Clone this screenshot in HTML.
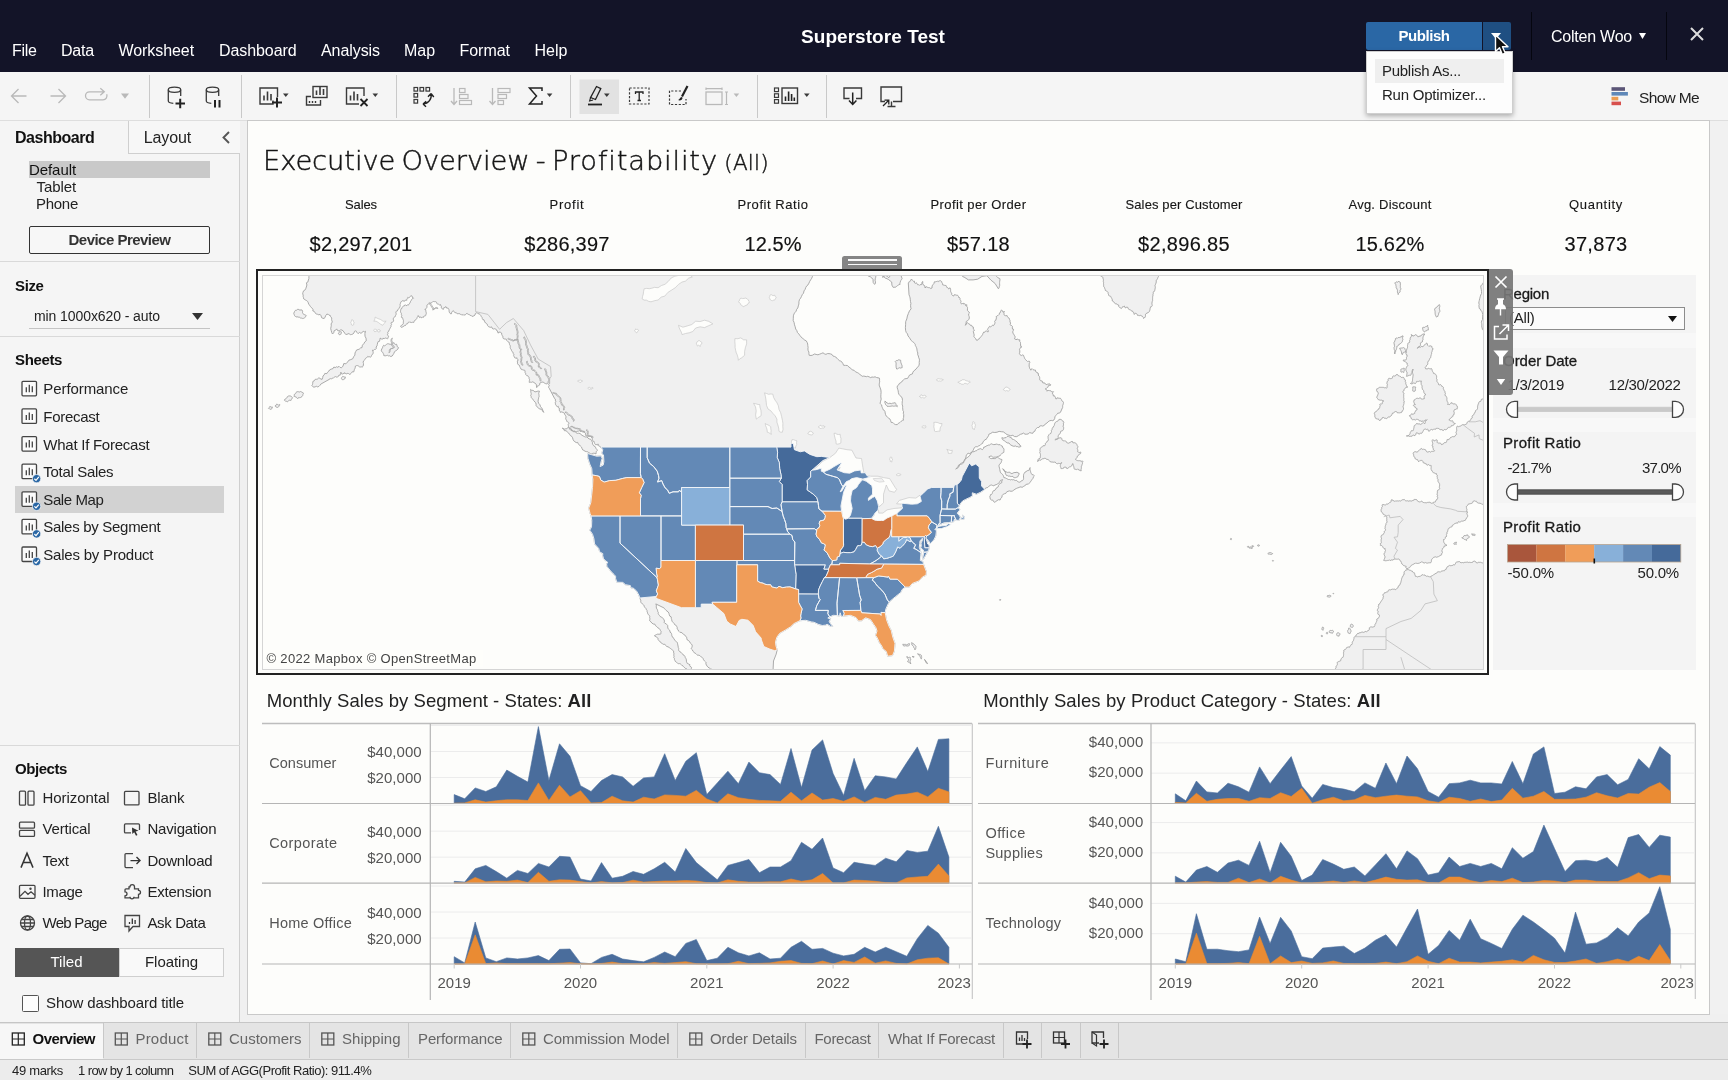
<!DOCTYPE html>
<html lang="en"><head><meta charset="utf-8"><title>Superstore Test</title>
<style>
html,body{margin:0;padding:0;}
body{width:1728px;height:1080px;overflow:hidden;position:relative;background:#f5f5f5;font-family:"Liberation Sans", Arial, sans-serif;color:#222;}
div{box-sizing:border-box;}
#app{position:absolute;left:0;top:0;width:1728px;height:1080px;overflow:hidden;will-change:transform;}
</style></head><body>
<div id="app">
<div style="position:absolute;left:0px;top:0px;width:1728px;height:72px;box-sizing:border-box;background:#131428;"></div>
<div style="position:absolute;top:39.5px;height:21px;line-height:21px;font-size:16px;white-space:nowrap;color:#fff;letter-spacing:-0.320px;left:12.0px;">File</div>
<div style="position:absolute;top:39.5px;height:21px;line-height:21px;font-size:16px;white-space:nowrap;color:#fff;letter-spacing:-0.199px;left:61.0px;">Data</div>
<div style="position:absolute;top:39.5px;height:21px;line-height:21px;font-size:16px;white-space:nowrap;color:#fff;letter-spacing:-0.076px;left:118.5px;">Worksheet</div>
<div style="position:absolute;top:39.5px;height:21px;line-height:21px;font-size:16px;white-space:nowrap;color:#fff;letter-spacing:-0.086px;left:219.0px;">Dashboard</div>
<div style="position:absolute;top:39.5px;height:21px;line-height:21px;font-size:16px;white-space:nowrap;color:#fff;letter-spacing:-0.072px;left:321.0px;">Analysis</div>
<div style="position:absolute;top:39.5px;height:21px;line-height:21px;font-size:16px;white-space:nowrap;color:#fff;letter-spacing:-0.042px;left:404.0px;">Map</div>
<div style="position:absolute;top:39.5px;height:21px;line-height:21px;font-size:16px;white-space:nowrap;color:#fff;letter-spacing:-0.029px;left:459.5px;">Format</div>
<div style="position:absolute;top:39.5px;height:21px;line-height:21px;font-size:16px;white-space:nowrap;color:#fff;letter-spacing:0.023px;left:534.5px;">Help</div>
<div style="position:absolute;top:23.5px;height:25px;line-height:25px;font-size:19px;white-space:nowrap;color:#fff;letter-spacing:0.050px;font-weight:700;left:801.0px;">Superstore Test</div>
<div style="position:absolute;left:1366px;top:22px;width:116px;height:28px;box-sizing:border-box;background:#2a67a5;border-radius:2px 0 0 2px;"></div>
<div style="position:absolute;top:26.0px;height:20px;line-height:20px;font-size:15px;white-space:nowrap;color:#fff;letter-spacing:-0.453px;font-weight:700;left:1424.0px;width:400px;margin-left:-200px;text-align:center;">Publish</div>
<div style="position:absolute;left:1483px;top:22px;width:28px;height:28px;box-sizing:border-box;background:#1f4f82;border-radius:0 2px 2px 0;"></div>
<svg style="position:absolute;left:1491px;top:33px;overflow:visible;" width="10" height="6" viewBox="0 0 10 6"><path d="M0 0H10L5 6Z" fill="#fff"/></svg>
<div style="position:absolute;left:1531px;top:12px;width:1px;height:48px;box-sizing:border-box;background:#05060f;"></div>
<div style="position:absolute;left:1666px;top:12px;width:1px;height:48px;box-sizing:border-box;background:#05060f;"></div>
<div style="position:absolute;top:25.5px;height:21px;line-height:21px;font-size:16px;white-space:nowrap;color:#fff;letter-spacing:-0.230px;left:1551.0px;">Colten Woo</div>
<svg style="position:absolute;left:1639px;top:33px;overflow:visible;" width="7" height="6" viewBox="0 0 7 6"><path d="M0 0H7L3.5 6Z" fill="#fff"/></svg>
<svg style="position:absolute;left:1690px;top:27px;overflow:visible;" width="14" height="14" viewBox="0 0 14 14"><path d="M1 1L13 13M13 1L1 13" stroke="#ddd" stroke-width="2" fill="none"/></svg>
<div style="position:absolute;left:0px;top:72px;width:1728px;height:49px;box-sizing:border-box;background:#f5f5f5;border-bottom:1px solid #dedede;"></div>
<div style="position:absolute;left:149px;top:75px;width:1px;height:43px;box-sizing:border-box;background:#c9c9c9;"></div>
<div style="position:absolute;left:241px;top:75px;width:1px;height:43px;box-sizing:border-box;background:#c9c9c9;"></div>
<div style="position:absolute;left:395.5px;top:75px;width:1px;height:43px;box-sizing:border-box;background:#c9c9c9;"></div>
<div style="position:absolute;left:570px;top:75px;width:1px;height:43px;box-sizing:border-box;background:#c9c9c9;"></div>
<div style="position:absolute;left:757px;top:75px;width:1px;height:43px;box-sizing:border-box;background:#c9c9c9;"></div>
<div style="position:absolute;left:826px;top:75px;width:1px;height:43px;box-sizing:border-box;background:#c9c9c9;"></div>
<svg style="position:absolute;left:0px;top:0px;overflow:visible;" width="1728" height="121" viewBox="0 0 1728 121"><path d="M26.5 96H11.5M18.5 89L11.5 96L18.5 103" stroke="#b9b9b9" stroke-width="1.3" fill="none"/><path d="M50.5 96H65.5M58.5 89L65.5 96L58.5 103" stroke="#b9b9b9" stroke-width="1.3" fill="none"/><path d="M104 91.800H89.500a4 4 0 0 0 0 8H103a4 4 0 0 0 3.700-5.500M100.300 88.300L104.300 91.800L100.300 95.300" stroke="#b9b9b9" stroke-width="1.3" fill="none"/><path d="M121 93.5H129L125 98.8Z" fill="#b9b9b9"/><ellipse cx="174.5" cy="89.8" rx="6.2" ry="2.6" fill="none" stroke="#3a3a3a" stroke-width="1.3"/><path d="M168.3 89.8V101a6.2 2.6 0 0 0 5 2.4" fill="none" stroke="#3a3a3a" stroke-width="1.3"/><path d="M180.7 89.8V96" fill="none" stroke="#3a3a3a" stroke-width="1.3"/><path d="M175.5 103.5H185M180.2 98.8V108.2" stroke="#222" stroke-width="2" fill="none"/><ellipse cx="212.5" cy="89.8" rx="6.2" ry="2.6" fill="none" stroke="#3a3a3a" stroke-width="1.3"/><path d="M206.3 89.8V101a6.2 2.6 0 0 0 5 2.4" fill="none" stroke="#3a3a3a" stroke-width="1.3"/><path d="M218.7 89.8V96" fill="none" stroke="#3a3a3a" stroke-width="1.3"/><path d="M215 100V107.5M219.5 100V107.5" stroke="#222" stroke-width="2" fill="none"/><path d="M273 100.5V104H260V88H277.5V97" fill="none" stroke="#3a3a3a" stroke-width="1.4"/><path d="M264 95.5V100.5M267.5 91.5V100.5M271 94V100.5" stroke="#3a3a3a" stroke-width="1.6" fill="none"/><path d="M272 102.5H282M277 97.5V107.5" stroke="#222" stroke-width="2" fill="none"/><path d="M283 93.5H288.6L285.8 97Z" fill="#3a3a3a"/><rect x="313" y="86.5" width="14" height="11" fill="#f5f5f5" stroke="#3a3a3a" stroke-width="1.4"/><path d="M316.5 90.5V95M320 86.5V95M323.5 89V95" stroke="#3a3a3a" stroke-width="1.6" fill="none"/><path d="M311 96.5H306.5V105H320.5V100" fill="none" stroke="#3a3a3a" stroke-width="1.4"/><path d="M309.5 101V103M312.5 101V103M315.5 101V103" stroke="#3a3a3a" stroke-width="1.4"/><path d="M359 104H346.5V88H364V96" fill="none" stroke="#3a3a3a" stroke-width="1.4"/><path d="M350.5 95.5V100.5M354 91.5V100.5M357.5 94V100.5" stroke="#3a3a3a" stroke-width="1.6" fill="none"/><path d="M360.5 99L367.5 106M367.5 99L360.5 106" stroke="#222" stroke-width="1.8" fill="none"/><path d="M372.5 93.5H378.1L375.3 97Z" fill="#3a3a3a"/><rect x="414" y="87.5" width="3.6" height="3.6" fill="none" stroke="#3a3a3a" stroke-width="1.2"/><rect x="420" y="87.5" width="3.6" height="3.6" fill="none" stroke="#3a3a3a" stroke-width="1.2"/><rect x="426" y="87.5" width="3.6" height="3.6" fill="none" stroke="#3a3a3a" stroke-width="1.2"/><rect x="414" y="93.5" width="3.6" height="3.6" fill="none" stroke="#3a3a3a" stroke-width="1.2"/><rect x="414" y="99.5" width="3.6" height="3.6" fill="none" stroke="#3a3a3a" stroke-width="1.2"/><path d="M431 93.5a8.5 8.5 0 0 1-8 10.5M431 93.5L428 96.8M431 93.5L433.8 97M423 104L426.2 101.3M423 104L426 106.8" stroke="#222" stroke-width="1.4" fill="none"/><path d="M454 88V104.5M451 101L454 104.5L457 101" stroke="#b9b9b9" stroke-width="1.3" fill="none"/><rect x="459.5" y="88.5" width="5.5" height="4" fill="none" stroke="#b9b9b9" stroke-width="1.2"/><rect x="459.5" y="94.5" width="8.5" height="4" fill="none" stroke="#b9b9b9" stroke-width="1.2"/><rect x="459.5" y="100.5" width="12" height="4" fill="none" stroke="#b9b9b9" stroke-width="1.2"/><path d="M492.5 88V104.5M489.5 101L492.5 104.5L495.5 101" stroke="#b9b9b9" stroke-width="1.3" fill="none"/><rect x="498" y="88.5" width="12" height="4" fill="none" stroke="#b9b9b9" stroke-width="1.2"/><rect x="498" y="94.5" width="8.5" height="4" fill="none" stroke="#b9b9b9" stroke-width="1.2"/><rect x="498" y="100.5" width="5.5" height="4" fill="none" stroke="#b9b9b9" stroke-width="1.2"/><path d="M542 91V88H529.5L536.5 96L529.5 104H542V101" stroke="#222" stroke-width="1.5" fill="none"/><path d="M546.8 93.5H552.4L549.6 97Z" fill="#3a3a3a"/><rect x="579.5" y="79.5" width="39.5" height="34.5" fill="#e2e2e2"/><path d="M596.5 86.5L600.8 88.6L595.5 99.5L590.6 97.5Z" fill="none" stroke="#222" stroke-width="1.3"/><path d="M590.6 97.5L589.6 101L593 100" stroke="#222" stroke-width="1.1" fill="none"/><path d="M588 104.5H602" stroke="#222" stroke-width="1.8"/><path d="M604 93.5H609.6L606.8 97Z" fill="#3a3a3a"/><rect x="629.5" y="88" width="19.5" height="16" fill="none" stroke="#3a3a3a" stroke-width="1.2" stroke-dasharray="2.2 1.6"/><path d="M635.5 94V92H643V94M639.2 92V100.5M637.5 100.5H641" stroke="#222" stroke-width="1.3" fill="none"/><path d="M681 91H669.5V104.5H686V99" fill="none" stroke="#3a3a3a" stroke-width="1.2" stroke-dasharray="2.2 1.6"/><path d="M687.5 86L682 96.5" stroke="#222" stroke-width="2.2"/><path d="M681.5 97C680 97.5 679.5 99.5 678 100C680 101 682.5 100 682.6 97.8Z" fill="#222"/><rect x="706" y="92" width="16" height="12.5" fill="none" stroke="#b9b9b9" stroke-width="1.3"/><path d="M706 87.5V90M722 87.5V90M706 88.7H722M725 92H728M725 104.5H728M726.5 92V104.5" stroke="#b9b9b9" stroke-width="1.2" fill="none"/><path d="M733.6 93.5H739.2L736.4 97Z" fill="#b9b9b9"/><rect x="774.5" y="88" width="4" height="3.6" fill="none" stroke="#3a3a3a" stroke-width="1.2"/><rect x="774.5" y="93.8" width="4" height="3.6" fill="none" stroke="#3a3a3a" stroke-width="1.2"/><rect x="774.5" y="99.6" width="4" height="3.6" fill="none" stroke="#3a3a3a" stroke-width="1.2"/><rect x="782" y="88" width="15.5" height="15.5" fill="none" stroke="#3a3a3a" stroke-width="1.4"/><path d="M785.5 101V96.5M788.6 101V91.5M791.6 101V94M794.3 101V97.5" stroke="#222" stroke-width="1.6"/><path d="M804 93.5H809.6L806.8 97Z" fill="#3a3a3a"/><path d="M849.5 98.5H844V88H861.5V98.5H856" fill="none" stroke="#3a3a3a" stroke-width="1.4"/><path d="M852.7 92.5V104M849 100.5L852.7 104.5L856.4 100.5" stroke="#222" stroke-width="1.5" fill="none"/><path d="M885 101.5H881V87H901.5V101.5H893M891.5 101.5V106M887.5 106.5H895.5" fill="none" stroke="#3a3a3a" stroke-width="1.4"/><path d="M883 106L888.5 100.5M884.5 100.2H888.8V104.5" stroke="#222" stroke-width="1.3" fill="none"/></svg>
<svg style="position:absolute;left:1611px;top:86px;overflow:visible;" width="18" height="20" viewBox="0 0 18 20"><rect x="0.500" y="1.200" width="13.500" height="3.600" fill="#5b5577"/><rect x="0.500" y="6" width="16.400" height="3.600" fill="#5f88b8"/><rect x="0.500" y="10.800" width="6.800" height="3.600" fill="#eb9c52"/><rect x="0.500" y="15.600" width="9.500" height="3.600" fill="#d8504d"/></svg>
<div style="position:absolute;top:87.5px;height:20px;line-height:20px;font-size:15.5px;white-space:nowrap;color:#222;letter-spacing:-0.659px;left:1639.0px;">Show Me</div>
<div style="position:absolute;left:0px;top:1022px;width:1728px;height:38px;box-sizing:border-box;background:#e4e4e4;border-top:1.5px solid #c6c6c6;border-bottom:1.5px solid #c9c9c9;"></div>
<div style="position:absolute;left:0px;top:1023.5px;width:103px;height:35px;box-sizing:border-box;background:#f7f7f7;"></div>
<div style="position:absolute;left:102.5px;top:1023px;width:1px;height:35px;box-sizing:border-box;background:#c8c8c8;"></div>
<div style="position:absolute;top:1029.3px;height:20px;line-height:20px;font-size:15px;white-space:nowrap;color:#111;letter-spacing:-0.526px;font-weight:700;left:32.5px;">Overview</div>
<div style="position:absolute;left:196px;top:1023px;width:1px;height:35px;box-sizing:border-box;background:#c8c8c8;"></div>
<div style="position:absolute;top:1029.3px;height:20px;line-height:20px;font-size:15px;white-space:nowrap;color:#666;letter-spacing:0.187px;left:135.5px;">Product</div>
<div style="position:absolute;left:309px;top:1023px;width:1px;height:35px;box-sizing:border-box;background:#c8c8c8;"></div>
<div style="position:absolute;top:1029.3px;height:20px;line-height:20px;font-size:15px;white-space:nowrap;color:#666;letter-spacing:-0.002px;left:229.0px;">Customers</div>
<div style="position:absolute;left:408px;top:1023px;width:1px;height:35px;box-sizing:border-box;background:#c8c8c8;"></div>
<div style="position:absolute;top:1029.3px;height:20px;line-height:20px;font-size:15px;white-space:nowrap;color:#666;letter-spacing:0.015px;left:342.0px;">Shipping</div>
<div style="position:absolute;left:510px;top:1023px;width:1px;height:35px;box-sizing:border-box;background:#c8c8c8;"></div>
<div style="position:absolute;top:1029.3px;height:20px;line-height:20px;font-size:15px;white-space:nowrap;color:#666;letter-spacing:-0.124px;left:418.0px;">Performance</div>
<div style="position:absolute;left:677px;top:1023px;width:1px;height:35px;box-sizing:border-box;background:#c8c8c8;"></div>
<div style="position:absolute;top:1029.3px;height:20px;line-height:20px;font-size:15px;white-space:nowrap;color:#666;letter-spacing:-0.065px;left:543.0px;">Commission Model</div>
<div style="position:absolute;left:804.5px;top:1023px;width:1px;height:35px;box-sizing:border-box;background:#c8c8c8;"></div>
<div style="position:absolute;top:1029.3px;height:20px;line-height:20px;font-size:15px;white-space:nowrap;color:#666;letter-spacing:-0.105px;left:710.0px;">Order Details</div>
<div style="position:absolute;left:878px;top:1023px;width:1px;height:35px;box-sizing:border-box;background:#c8c8c8;"></div>
<div style="position:absolute;top:1029.3px;height:20px;line-height:20px;font-size:15px;white-space:nowrap;color:#666;letter-spacing:-0.294px;left:814.5px;">Forecast</div>
<div style="position:absolute;left:1002.5px;top:1023px;width:1px;height:35px;box-sizing:border-box;background:#c8c8c8;"></div>
<div style="position:absolute;top:1029.3px;height:20px;line-height:20px;font-size:15px;white-space:nowrap;color:#666;letter-spacing:-0.189px;left:888.0px;">What If Forecast</div>
<div style="position:absolute;left:1040.5px;top:1023px;width:1px;height:35px;box-sizing:border-box;background:#c8c8c8;"></div>
<div style="position:absolute;left:1079.5px;top:1023px;width:1px;height:35px;box-sizing:border-box;background:#c8c8c8;"></div>
<div style="position:absolute;left:1117.5px;top:1023px;width:1px;height:35px;box-sizing:border-box;background:#c8c8c8;"></div>
<svg style="position:absolute;left:0px;top:0px;overflow:visible;pointer-events:none;" width="1728" height="1080" viewBox="0 0 1728 1080"><rect x="12.3" y="1033" width="12" height="12" fill="none" stroke="#222" stroke-width="1.3"/><path d="M18.3 1033V1045M12.3 1039H24.3" stroke="#222" stroke-width="1.2"/><rect x="115.3" y="1033" width="12" height="12" fill="none" stroke="#555" stroke-width="1.3"/><path d="M121.3 1033V1045M115.3 1039H127.3" stroke="#555" stroke-width="1.2"/><rect x="208.8" y="1033" width="12" height="12" fill="none" stroke="#555" stroke-width="1.3"/><path d="M214.8 1033V1045M208.8 1039H220.8" stroke="#555" stroke-width="1.2"/><rect x="321.8" y="1033" width="12" height="12" fill="none" stroke="#555" stroke-width="1.3"/><path d="M327.8 1033V1045M321.8 1039H333.8" stroke="#555" stroke-width="1.2"/><rect x="522.8" y="1033" width="12" height="12" fill="none" stroke="#555" stroke-width="1.3"/><path d="M528.8 1033V1045M522.8 1039H534.8" stroke="#555" stroke-width="1.2"/><rect x="689.8" y="1033" width="12" height="12" fill="none" stroke="#555" stroke-width="1.3"/><path d="M695.8 1033V1045M689.8 1039H701.8" stroke="#555" stroke-width="1.2"/><path d="M1024 1044H1016.5V1032H1027.5V1039" fill="none" stroke="#333" stroke-width="1.3"/><path d="M1019.5 1041V1037.5M1022 1041V1035M1024.5 1041V1038" stroke="#333" stroke-width="1.3"/><path d="M1022.5 1044H1031.5M1027 1039.5V1048.5" stroke="#222" stroke-width="1.8"/><rect x="1053.5" y="1032" width="11" height="11" fill="none" stroke="#333" stroke-width="1.3"/><path d="M1059 1032V1043M1053.5 1037.5H1064.5" stroke="#333" stroke-width="1.2"/><path d="M1061 1044H1070M1065.500 1039.5V1048.5" stroke="#222" stroke-width="1.8"/><path d="M1059.500 1041.5H1066.500V1046H1059.500Z" fill="#e6e6e6" opacity="0"/><path d="M1099 1043H1092V1032H1103.5V1038" fill="none" stroke="#333" stroke-width="1.3"/><path d="M1092 1032L1096.500 1035V1046L1092 1043" fill="none" stroke="#333" stroke-width="1.2"/><path d="M1099.500 1044H1108.500M1104 1039.5V1048.5" stroke="#222" stroke-width="1.8"/></svg>
<div style="position:absolute;left:0px;top:1060px;width:1728px;height:20px;box-sizing:border-box;background:#ececec;"></div>
<div style="position:absolute;top:1062.0px;height:17px;line-height:17px;font-size:13px;white-space:nowrap;color:#222;letter-spacing:-0.308px;left:12.0px;">49 marks</div>
<div style="position:absolute;top:1062.0px;height:17px;line-height:17px;font-size:13px;white-space:nowrap;color:#222;letter-spacing:-0.588px;left:78.0px;">1 row by 1 column</div>
<div style="position:absolute;top:1062.0px;height:17px;line-height:17px;font-size:13px;white-space:nowrap;color:#222;letter-spacing:-0.483px;left:188.3px;">SUM of AGG(Profit Ratio): 911.4%</div>
<div style="position:absolute;left:0px;top:121px;width:240px;height:901px;box-sizing:border-box;background:#f5f5f5;border-right:1px solid #cfcfcf;"></div>
<div style="position:absolute;left:240px;top:121px;width:7px;height:901px;box-sizing:border-box;background:#f0f0f0;"></div>
<div style="position:absolute;left:128px;top:121px;width:112px;height:33px;box-sizing:border-box;background:#f7f7f7;border-left:1px solid #cfcfcf;border-bottom:1px solid #cfcfcf;"></div>
<div style="position:absolute;top:127.0px;height:21px;line-height:21px;font-size:16px;white-space:nowrap;color:#111;letter-spacing:-0.474px;font-weight:700;left:15.0px;">Dashboard</div>
<div style="position:absolute;top:127.0px;height:21px;line-height:21px;font-size:16px;white-space:nowrap;color:#222;letter-spacing:-0.090px;left:143.7px;">Layout</div>
<svg style="position:absolute;left:222.3px;top:131px;overflow:visible;" width="8" height="13" viewBox="0 0 8 13"><path d="M7 1L1.500 6.500L7 12" stroke="#555" stroke-width="1.900" fill="none"/></svg>
<div style="position:absolute;left:29px;top:161px;width:181px;height:17px;box-sizing:border-box;background:#c9c9c9;"></div>
<div style="position:absolute;top:159.5px;height:20px;line-height:20px;font-size:15px;white-space:nowrap;color:#111;letter-spacing:-0.075px;left:29.0px;">Default</div>
<div style="position:absolute;top:177.0px;height:20px;line-height:20px;font-size:15px;white-space:nowrap;color:#222;letter-spacing:-0.088px;left:36.5px;">Tablet</div>
<div style="position:absolute;top:194.2px;height:20px;line-height:20px;font-size:15px;white-space:nowrap;color:#222;letter-spacing:-0.275px;left:36.0px;">Phone</div>
<div style="position:absolute;left:29px;top:225.5px;width:181px;height:28px;box-sizing:border-box;background:#f7f7f7;border:1px solid #333;border-radius:2px;"></div>
<div style="position:absolute;top:229.6px;height:20px;line-height:20px;font-size:15px;white-space:nowrap;color:#333;letter-spacing:-0.517px;font-weight:700;left:119.5px;width:400px;margin-left:-200px;text-align:center;">Device Preview</div>
<div style="position:absolute;left:0px;top:261px;width:240px;height:1px;box-sizing:border-box;background:#d9d9d9;"></div>
<div style="position:absolute;top:275.5px;height:20px;line-height:20px;font-size:15px;white-space:nowrap;color:#111;letter-spacing:-0.379px;font-weight:700;left:15.0px;">Size</div>
<div style="position:absolute;top:306.8px;height:18px;line-height:18px;font-size:14px;white-space:nowrap;color:#222;letter-spacing:-0.086px;left:34.0px;">min 1000x620 - auto</div>
<svg style="position:absolute;left:192px;top:312.5px;overflow:visible;" width="11" height="7" viewBox="0 0 11 7"><path d="M0 0H11L5.5 7Z" fill="#333"/></svg>
<div style="position:absolute;left:29px;top:328px;width:181px;height:1px;box-sizing:border-box;background:#c4c4c4;"></div>
<div style="position:absolute;left:0px;top:336px;width:240px;height:1px;box-sizing:border-box;background:#d9d9d9;"></div>
<div style="position:absolute;top:350.2px;height:20px;line-height:20px;font-size:15px;white-space:nowrap;color:#111;letter-spacing:-0.365px;font-weight:700;left:15.0px;">Sheets</div>
<div style="position:absolute;top:379.3px;height:20px;line-height:20px;font-size:15px;white-space:nowrap;color:#222;letter-spacing:-0.079px;left:43.3px;">Performance</div>
<div style="position:absolute;top:406.9px;height:20px;line-height:20px;font-size:15px;white-space:nowrap;color:#222;letter-spacing:-0.294px;left:43.3px;">Forecast</div>
<div style="position:absolute;top:434.5px;height:20px;line-height:20px;font-size:15px;white-space:nowrap;color:#222;letter-spacing:-0.252px;left:43.3px;">What If Forecast</div>
<div style="position:absolute;top:462.2px;height:20px;line-height:20px;font-size:15px;white-space:nowrap;color:#222;letter-spacing:-0.307px;left:43.3px;">Total Sales</div>
<div style="position:absolute;left:14.5px;top:486.48px;width:209.5px;height:27px;box-sizing:border-box;background:#d2d2d2;"></div>
<div style="position:absolute;top:489.8px;height:20px;line-height:20px;font-size:15px;white-space:nowrap;color:#222;letter-spacing:-0.421px;left:43.3px;">Sale Map</div>
<div style="position:absolute;top:517.4px;height:20px;line-height:20px;font-size:15px;white-space:nowrap;color:#222;letter-spacing:-0.296px;left:43.3px;">Sales by Segment</div>
<div style="position:absolute;top:545.0px;height:20px;line-height:20px;font-size:15px;white-space:nowrap;color:#222;letter-spacing:-0.212px;left:43.3px;">Sales by Product</div>
<svg style="position:absolute;left:0px;top:0px;overflow:visible;" width="240" height="1022" viewBox="0 0 240 1022"><rect x="22" y="381.3" width="14.5" height="14.5" rx="1" fill="#fbfbfb" stroke="#444" stroke-width="1.3"/><path d="M26.3 387.3V392.3M29.3 384.8V392.3M32.3 386.3V392.3" stroke="#444" stroke-width="1.3"/><rect x="22" y="408.92" width="14.5" height="14.5" rx="1" fill="#fbfbfb" stroke="#444" stroke-width="1.3"/><path d="M26.3 414.92V419.92M29.3 412.42V419.92M32.3 413.92V419.92" stroke="#444" stroke-width="1.3"/><rect x="22" y="436.54" width="14.5" height="14.5" rx="1" fill="#fbfbfb" stroke="#444" stroke-width="1.3"/><path d="M26.3 442.54V447.54M29.3 440.04V447.54M32.3 441.54V447.54" stroke="#444" stroke-width="1.3"/><rect x="22" y="464.16" width="14.5" height="14.5" rx="1" fill="#fbfbfb" stroke="#444" stroke-width="1.3"/><path d="M26.3 470.16V475.16M29.3 467.66V475.16M32.3 469.16V475.16" stroke="#444" stroke-width="1.3"/><circle cx="36.6" cy="478.66" r="4.2" fill="#2a67a5" stroke="#f5f5f5" stroke-width="0.8"/><path d="M34.4 478.76L36 480.36L38.8 476.96" stroke="#fff" stroke-width="1.2" fill="none"/><rect x="22" y="491.78" width="14.5" height="14.5" rx="1" fill="#fbfbfb" stroke="#444" stroke-width="1.3"/><path d="M26.3 497.78V502.78M29.3 495.28V502.78M32.3 496.78V502.78" stroke="#444" stroke-width="1.3"/><circle cx="36.6" cy="506.28" r="4.2" fill="#2a67a5" stroke="#f5f5f5" stroke-width="0.8"/><path d="M34.4 506.38L36 507.98L38.8 504.58" stroke="#fff" stroke-width="1.2" fill="none"/><rect x="22" y="519.4" width="14.5" height="14.5" rx="1" fill="#fbfbfb" stroke="#444" stroke-width="1.3"/><path d="M26.3 525.4V530.4M29.3 522.9V530.4M32.3 524.4V530.4" stroke="#444" stroke-width="1.3"/><circle cx="36.6" cy="533.9" r="4.2" fill="#2a67a5" stroke="#f5f5f5" stroke-width="0.8"/><path d="M34.4 534L36 535.6L38.8 532.2" stroke="#fff" stroke-width="1.2" fill="none"/><rect x="22" y="547.02" width="14.5" height="14.5" rx="1" fill="#fbfbfb" stroke="#444" stroke-width="1.3"/><path d="M26.3 553.02V558.02M29.3 550.52V558.02M32.3 552.02V558.02" stroke="#444" stroke-width="1.3"/><circle cx="36.6" cy="561.52" r="4.2" fill="#2a67a5" stroke="#f5f5f5" stroke-width="0.8"/><path d="M34.4 561.62L36 563.22L38.8 559.82" stroke="#fff" stroke-width="1.2" fill="none"/></svg>
<div style="position:absolute;left:0px;top:744.5px;width:240px;height:1px;box-sizing:border-box;background:#d9d9d9;"></div>
<div style="position:absolute;top:759.0px;height:20px;line-height:20px;font-size:15px;white-space:nowrap;color:#111;letter-spacing:-0.431px;font-weight:700;left:15.0px;">Objects</div>
<div style="position:absolute;top:788.2px;height:20px;line-height:20px;font-size:15px;white-space:nowrap;color:#222;letter-spacing:-0.053px;left:42.5px;">Horizontal</div>
<div style="position:absolute;top:819.4px;height:20px;line-height:20px;font-size:15px;white-space:nowrap;color:#222;letter-spacing:-0.149px;left:42.5px;">Vertical</div>
<div style="position:absolute;top:850.6px;height:20px;line-height:20px;font-size:15px;white-space:nowrap;color:#222;letter-spacing:-0.377px;left:42.5px;">Text</div>
<div style="position:absolute;top:881.8px;height:20px;line-height:20px;font-size:15px;white-space:nowrap;color:#222;letter-spacing:-0.338px;left:42.5px;">Image</div>
<div style="position:absolute;top:913.0px;height:20px;line-height:20px;font-size:15px;white-space:nowrap;color:#222;letter-spacing:-0.721px;left:42.5px;">Web Page</div>
<div style="position:absolute;top:788.2px;height:20px;line-height:20px;font-size:15px;white-space:nowrap;color:#222;letter-spacing:-0.104px;left:147.4px;">Blank</div>
<div style="position:absolute;top:819.4px;height:20px;line-height:20px;font-size:15px;white-space:nowrap;color:#222;letter-spacing:-0.188px;left:147.4px;">Navigation</div>
<div style="position:absolute;top:850.6px;height:20px;line-height:20px;font-size:15px;white-space:nowrap;color:#222;letter-spacing:-0.214px;left:147.4px;">Download</div>
<div style="position:absolute;top:881.8px;height:20px;line-height:20px;font-size:15px;white-space:nowrap;color:#222;letter-spacing:-0.208px;left:147.4px;">Extension</div>
<div style="position:absolute;top:913.0px;height:20px;line-height:20px;font-size:15px;white-space:nowrap;color:#222;letter-spacing:-0.357px;left:147.4px;">Ask Data</div>
<svg style="position:absolute;left:0px;top:0px;overflow:visible;" width="240" height="1022" viewBox="0 0 240 1022"><rect x="19.5" y="791.2" width="6" height="14" rx="1" stroke="#444" stroke-width="1.3" fill="none"/><rect x="28" y="791.2" width="6" height="14" rx="1" stroke="#444" stroke-width="1.3" fill="none"/><rect x="124.500" y="791.4" width="14.5" height="13.5" rx="1" stroke="#444" stroke-width="1.3" fill="none"/><rect x="19.5" y="822.2" width="15" height="6" rx="1" stroke="#444" stroke-width="1.3" fill="none"/><rect x="19.5" y="830.4" width="15" height="6" rx="1" stroke="#444" stroke-width="1.3" fill="none"/><path d="M131 832.9H125.500a1 1 0 0 1-1-1V824.9a1 1 0 0 1 1-1H138.500a1 1 0 0 1 1 1V829.9" stroke="#444" stroke-width="1.3" fill="none"/><path d="M132 827.4L138.500 830.7L135.600 831.4L137.500 835L136 835.7L134.200 832.2L132.300 834Z" fill="#333"/><path d="M21 867.6L27 853.1L33 867.6M23 862.6H31" stroke="#333" stroke-width="1.5" fill="none"/><path d="M133 853.6H126a1 1 0 0 0-1 1V866.6a1 1 0 0 0 1 1H133" stroke="#444" stroke-width="1.3" fill="none"/><path d="M130.500 860.6H140M136.500 857.1L140 860.6L136.500 864.1" stroke="#333" stroke-width="1.4" fill="none"/><rect x="19.5" y="885.3" width="15.5" height="13" rx="1" stroke="#444" stroke-width="1.3" fill="none"/><path d="M20 896.3L25 891.3L28 894.3L31 891.8L35 895.3" stroke="#444" stroke-width="1.3" fill="none"/><circle cx="30.5" cy="888.8" r="1.2" fill="#444"/><path d="M129 886.8V888.8H126a1 1 0 0 0-1 1V891.8a2 2 0 1 1 0 4V897.8H130V896.8a2 2 0 1 0 4 0V897.8H138.500V894.3a2 2 0 1 0 0-4V888.8H134.500V886.8a2.200 2.200 0 1 0-4.500 0Z" stroke="#444" stroke-width="1.3" fill="none"/><circle cx="27.5" cy="923" r="7" stroke="#444" stroke-width="1.3" fill="none"/><ellipse cx="27.5" cy="923" rx="3" ry="7" stroke="#444" stroke-width="1.3" fill="none"/><path d="M20.500 923H34.500M21.500 919.5H33.500M21.500 926.5H33.500" stroke="#444" stroke-width="1.3" fill="none"/><path d="M125 915.5H139.500V926.5H133L129 931V926.5H125Z" stroke="#444" stroke-width="1.3" fill="none"/><path d="M129.500 922V924M132.300 918.5V924M135.100 920V924" stroke="#333" stroke-width="1.3"/></svg>
<div style="position:absolute;left:14.5px;top:948px;width:105px;height:29px;box-sizing:border-box;background:#555;"></div>
<div style="position:absolute;top:952.3px;height:20px;line-height:20px;font-size:15px;white-space:nowrap;color:#fff;letter-spacing:0.009px;left:66.5px;width:400px;margin-left:-200px;text-align:center;">Tiled</div>
<div style="position:absolute;left:119px;top:948px;width:105px;height:29px;box-sizing:border-box;background:#f9f9f9;border:1px solid #cfcfcf;"></div>
<div style="position:absolute;top:952.3px;height:20px;line-height:20px;font-size:15px;white-space:nowrap;color:#222;letter-spacing:-0.046px;left:171.5px;width:400px;margin-left:-200px;text-align:center;">Floating</div>
<div style="position:absolute;left:21.5px;top:995px;width:17px;height:17px;box-sizing:border-box;background:#fdfdfd;border:1px solid #555;border-radius:1.5px;"></div>
<div style="position:absolute;top:993.2px;height:20px;line-height:20px;font-size:15px;white-space:nowrap;color:#222;letter-spacing:-0.104px;left:46.0px;">Show dashboard title</div>
<div style="position:absolute;left:1710px;top:121px;width:18px;height:901px;box-sizing:border-box;background:#f1f1f1;"></div>
<div style="position:absolute;left:247px;top:1014px;width:1481px;height:8px;box-sizing:border-box;background:#f0f0f0;"></div>
<div style="position:absolute;left:247px;top:120px;width:1463px;height:895px;box-sizing:border-box;background:#fdfdfb;border:1px solid #c9c9c9;"></div>
<div style="position:absolute;top:142.5px;height:35px;line-height:35px;font-size:27.3px;white-space:nowrap;color:#141414;font-family:'DejaVu Sans Light','DejaVu Sans ExtraLight','DejaVu Sans',sans-serif;left:263.0px;font-weight:200;letter-spacing:-0.08px;word-spacing:-2.2px;-webkit-text-stroke:0.45px #141414;">Executive Overview - <span style="letter-spacing:0.85px;">Profitability</span> <span style="font-size:21.5px;letter-spacing:0.2px;">(All)</span></div>
<div style="position:absolute;top:195.8px;height:17px;line-height:17px;font-size:13px;white-space:nowrap;color:#161616;letter-spacing:-0.103px;left:361.0px;width:400px;margin-left:-200px;text-align:center;-webkit-text-stroke:0.12px #161616;">Sales</div>
<div style="position:absolute;top:231.0px;height:26px;line-height:26px;font-size:20px;white-space:nowrap;color:#111;letter-spacing:0.290px;left:361.0px;width:400px;margin-left:-200px;text-align:center;-webkit-text-stroke:0.15px #111;">$2,297,201</div>
<div style="position:absolute;top:195.8px;height:17px;line-height:17px;font-size:13px;white-space:nowrap;color:#161616;letter-spacing:0.776px;left:567.0px;width:400px;margin-left:-200px;text-align:center;-webkit-text-stroke:0.12px #161616;">Profit</div>
<div style="position:absolute;top:231.0px;height:26px;line-height:26px;font-size:20px;white-space:nowrap;color:#111;letter-spacing:0.260px;left:567.0px;width:400px;margin-left:-200px;text-align:center;-webkit-text-stroke:0.15px #111;">$286,397</div>
<div style="position:absolute;top:195.8px;height:17px;line-height:17px;font-size:13px;white-space:nowrap;color:#161616;letter-spacing:0.558px;left:773.0px;width:400px;margin-left:-200px;text-align:center;-webkit-text-stroke:0.12px #161616;">Profit Ratio</div>
<div style="position:absolute;top:231.0px;height:26px;line-height:26px;font-size:20px;white-space:nowrap;color:#111;letter-spacing:0.058px;left:773.0px;width:400px;margin-left:-200px;text-align:center;-webkit-text-stroke:0.15px #111;">12.5%</div>
<div style="position:absolute;top:195.8px;height:17px;line-height:17px;font-size:13px;white-space:nowrap;color:#161616;letter-spacing:0.401px;left:978.5px;width:400px;margin-left:-200px;text-align:center;-webkit-text-stroke:0.12px #161616;">Profit per Order</div>
<div style="position:absolute;top:231.0px;height:26px;line-height:26px;font-size:20px;white-space:nowrap;color:#111;letter-spacing:0.304px;left:978.5px;width:400px;margin-left:-200px;text-align:center;-webkit-text-stroke:0.15px #111;">$57.18</div>
<div style="position:absolute;top:195.8px;height:17px;line-height:17px;font-size:13px;white-space:nowrap;color:#161616;letter-spacing:0.118px;left:1184.0px;width:400px;margin-left:-200px;text-align:center;-webkit-text-stroke:0.12px #161616;">Sales per Customer</div>
<div style="position:absolute;top:231.0px;height:26px;line-height:26px;font-size:20px;white-space:nowrap;color:#111;letter-spacing:0.336px;left:1184.0px;width:400px;margin-left:-200px;text-align:center;-webkit-text-stroke:0.15px #111;">$2,896.85</div>
<div style="position:absolute;top:195.8px;height:17px;line-height:17px;font-size:13px;white-space:nowrap;color:#161616;letter-spacing:0.233px;left:1390.0px;width:400px;margin-left:-200px;text-align:center;-webkit-text-stroke:0.12px #161616;">Avg. Discount</div>
<div style="position:absolute;top:231.0px;height:26px;line-height:26px;font-size:20px;white-space:nowrap;color:#111;letter-spacing:0.195px;left:1390.0px;width:400px;margin-left:-200px;text-align:center;-webkit-text-stroke:0.15px #111;">15.62%</div>
<div style="position:absolute;top:195.8px;height:17px;line-height:17px;font-size:13px;white-space:nowrap;color:#161616;letter-spacing:0.698px;left:1596.0px;width:400px;margin-left:-200px;text-align:center;-webkit-text-stroke:0.12px #161616;">Quantity</div>
<div style="position:absolute;top:231.0px;height:26px;line-height:26px;font-size:20px;white-space:nowrap;color:#111;letter-spacing:0.304px;left:1596.0px;width:400px;margin-left:-200px;text-align:center;-webkit-text-stroke:0.15px #111;">37,873</div>
<div style="position:absolute;left:842.3px;top:256.2px;width:60px;height:13.5px;box-sizing:border-box;background:#858585;border-radius:2.5px 2.5px 0 0;"></div>
<div style="position:absolute;left:847.7px;top:258.8px;width:49.7px;height:1.9px;box-sizing:border-box;background:#fbfbfb;"></div>
<div style="position:absolute;left:847.7px;top:263.6px;width:49.7px;height:1.9px;box-sizing:border-box;background:#fbfbfb;"></div>
<div style="position:absolute;left:1493px;top:275px;width:203px;height:395px;box-sizing:border-box;background:#f8f8f8;"></div>
<div style="position:absolute;left:1493px;top:275px;width:203px;height:58px;box-sizing:border-box;background:#f4f4f4;"></div>
<div style="position:absolute;left:1493px;top:348px;width:203px;height:70px;box-sizing:border-box;background:#f4f4f4;"></div>
<div style="position:absolute;left:1493px;top:432px;width:203px;height:71px;box-sizing:border-box;background:#f4f4f4;"></div>
<div style="position:absolute;left:1493px;top:517px;width:203px;height:153px;box-sizing:border-box;background:#f4f4f4;"></div>
<div style="position:absolute;top:284.3px;height:20px;line-height:20px;font-size:15px;white-space:nowrap;color:#1a1a1a;letter-spacing:-0.256px;left:1503.0px;-webkit-text-stroke:0.3px #1a1a1a;">Region</div>
<div style="position:absolute;left:1505px;top:306.5px;width:180px;height:23px;box-sizing:border-box;background:#fbfbfb;border:1px solid #8c8c8c;"></div>
<div style="position:absolute;top:308.3px;height:20px;line-height:20px;font-size:15px;white-space:nowrap;color:#222;letter-spacing:-0.232px;left:1509.0px;">(All)</div>
<svg style="position:absolute;left:1668px;top:315.5px;overflow:visible;" width="9" height="6" viewBox="0 0 9 6"><path d="M0 0H9L4.5 6Z" fill="#111"/></svg>
<div style="position:absolute;top:350.5px;height:20px;line-height:20px;font-size:15px;white-space:nowrap;color:#1a1a1a;letter-spacing:-0.019px;left:1503.0px;-webkit-text-stroke:0.3px #1a1a1a;">Order Date</div>
<div style="position:absolute;top:375.3px;height:20px;line-height:20px;font-size:15px;white-space:nowrap;color:#222;letter-spacing:-0.223px;left:1507.4px;">1/3/2019</div>
<div style="position:absolute;top:375.3px;height:20px;line-height:20px;font-size:15px;white-space:nowrap;color:#222;letter-spacing:-0.307px;left:1608.6px;">12/30/2022</div>
<div style="position:absolute;top:433.0px;height:20px;line-height:20px;font-size:15px;white-space:nowrap;color:#1a1a1a;letter-spacing:0.342px;left:1503.0px;-webkit-text-stroke:0.3px #1a1a1a;">Profit Ratio</div>
<div style="position:absolute;top:458.3px;height:20px;line-height:20px;font-size:15px;white-space:nowrap;color:#222;letter-spacing:-0.704px;left:1507.5px;">-21.7%</div>
<div style="position:absolute;top:458.3px;height:20px;line-height:20px;font-size:15px;white-space:nowrap;color:#222;letter-spacing:-0.746px;left:1642.0px;">37.0%</div>
<div style="position:absolute;top:516.7px;height:20px;line-height:20px;font-size:15px;white-space:nowrap;color:#1a1a1a;letter-spacing:0.342px;left:1503.0px;-webkit-text-stroke:0.3px #1a1a1a;">Profit Ratio</div>
<svg style="position:absolute;left:0px;top:0px;overflow:visible;pointer-events:none;" width="1728" height="1080" viewBox="0 0 1728 1080"><rect x="1517" y="407.2" width="156" height="4.4" fill="#c9c9c9" stroke="#c9c9c9" stroke-width="0.8"/><path d="M1517.5 401.4V417.4H1514.500a8 8 0 0 1 0-16Z" fill="#fdfdfd" stroke="#444" stroke-width="1.3"/><path d="M1672.500 401.4V417.4H1675.500a8 8 0 0 0 0-16Z" fill="#fdfdfd" stroke="#444" stroke-width="1.3"/><rect x="1517" y="489.8" width="156" height="4.4" fill="#5a5a5a" stroke="#444" stroke-width="0.8"/><path d="M1517.5 484V500H1514.500a8 8 0 0 1 0-16Z" fill="#fdfdfd" stroke="#444" stroke-width="1.3"/><path d="M1672.500 484V500H1675.500a8 8 0 0 0 0-16Z" fill="#fdfdfd" stroke="#444" stroke-width="1.3"/><rect x="1507.5" y="544.5" width="29" height="17.5" fill="#a9563c"/><rect x="1536.4" y="544.5" width="29" height="17.5" fill="#cf7541"/><rect x="1565.3" y="544.5" width="29" height="17.5" fill="#f09d59"/><rect x="1594.2" y="544.5" width="29" height="17.5" fill="#88b0d9"/><rect x="1623.1" y="544.5" width="29" height="17.5" fill="#6389b6"/><rect x="1652" y="544.5" width="28.8" height="17.5" fill="#456a9a"/><rect x="1507.5" y="544.5" width="173.3" height="17.5" fill="none" stroke="#b9a58f" stroke-width="0.8"/><rect x="1593.500" y="558.5" width="1.6" height="5" fill="#111"/></svg>
<div style="position:absolute;top:563.0px;height:20px;line-height:20px;font-size:15px;white-space:nowrap;color:#222;letter-spacing:-0.171px;left:1507.5px;">-50.0%</div>
<div style="position:absolute;top:563.0px;height:20px;line-height:20px;font-size:15px;white-space:nowrap;color:#222;letter-spacing:-0.206px;left:1637.5px;">50.0%</div>
<svg style="position:absolute;left:0px;top:0px;overflow:visible;pointer-events:none;" width="1728" height="1080" viewBox="0 0 1728 1080"><defs><clipPath id="mapclip"><rect x="262" y="275" width="1221" height="394.5"/></clipPath></defs><g clip-path="url(#mapclip)"><rect x="262" y="275" width="1221" height="395" fill="#fdfdfb"/><path d="M338.0 249.1L335.2 253.9L331.4 254.0L328.0 255.6L324.6 257.6L321.6 260.7L318.3 262.8L314.6 263.7L311.8 267.9L311.8 269.7L311.2 271.1L310.3 272.2L310.1 274.0L309.2 275.0L308.9 276.7L308.9 278.5L308.4 280.0L307.8 282.1L306.4 282.8L306.9 285.0L306.3 287.1L305.7 288.8L304.8 290.2L303.6 290.8L302.9 292.5L302.7 293.9L303.2 295.1L303.1 296.4L303.5 297.7L303.8 299.0L304.7 299.6L305.5 300.0L306.3 300.4L307.1 301.0L307.8 301.7L308.3 302.8L308.6 304.1L309.3 304.8L309.9 305.8L310.5 306.6L311.1 307.4L312.5 308.5L313.0 309.6L312.8 310.9L314.2 311.3L315.3 313.0L316.3 314.1L317.6 314.3L318.8 314.8L320.1 314.4L321.1 315.8L321.6 317.7L322.9 318.3L324.2 318.5L325.1 317.1L325.8 315.4L326.9 314.1L328.3 314.4L329.1 315.3L330.0 315.1L330.4 316.3L331.1 317.1L331.7 318.1L331.6 319.5L331.9 320.8L332.3 321.9L331.7 323.0L331.1 323.9L331.3 325.3L331.1 326.6L330.7 328.6L331.2 330.5L331.7 332.4L332.5 334.0L333.7 332.8L334.2 330.7L335.6 330.2L336.7 328.9L337.7 330.7L339.2 330.9L340.6 329.9L342.1 330.0L343.0 331.0L344.0 331.9L344.7 333.4L345.7 334.2L347.0 334.5L348.1 333.6L349.3 333.9L350.3 334.6L351.6 334.5L352.8 334.1L353.9 333.0L354.5 331.3L355.4 330.9L356.4 331.3L357.0 332.5L357.8 333.4L358.7 333.3L359.5 332.4L360.4 333.0L361.3 333.3L362.2 332.1L363.2 331.3L364.3 331.9L365.5 331.3L364.9 333.7L365.0 336.2L366.0 338.2L366.3 340.7L364.8 341.9L363.8 343.7L362.4 345.2L362.0 347.6L360.6 347.9L359.4 349.0L358.1 349.6L356.7 349.9L355.8 351.4L355.0 353.0L354.9 355.1L353.8 356.5L352.7 358.8L350.8 359.6L348.9 360.2L347.5 362.1L345.9 363.8L343.8 363.5L343.0 366.1L341.4 367.8L340.1 367.4L339.0 366.3L337.8 367.3L336.5 366.8L335.2 367.6L333.9 367.0L333.1 368.5L331.8 369.0L330.8 369.1L330.0 370.1L329.0 370.4L328.5 371.6L327.5 372.3L326.9 373.5L325.9 373.6L324.9 373.3L324.2 374.9L323.0 375.9L322.7 377.6L322.1 379.3L320.9 379.1L319.9 378.2L318.6 378.0L317.5 379.0L316.4 379.3L315.2 379.3L314.4 380.7L313.2 381.1L312.8 382.1L312.7 383.3L312.5 384.5L311.8 385.3L312.7 386.5L313.9 387.2L315.2 386.8L316.4 386.3L317.7 386.9L318.9 386.4L319.9 385.4L320.8 384.1L328.3 379.9L329.0 379.7L329.4 378.9L330.1 379.2L330.6 378.5L331.3 378.8L331.9 378.6L332.5 378.2L333.2 378.3L333.7 377.7L334.2 377.2L334.8 376.8L335.4 376.6L336.0 376.9L336.7 377.1L337.5 377.1L338.0 376.3L338.6 376.1L338.9 375.2L339.5 375.0L340.1 375.3L340.5 374.6L340.7 373.8L340.5 373.0L340.8 372.2L341.4 372.8L341.4 373.8L342.1 373.9L342.7 374.0L343.4 373.5L344.0 374.0L344.2 373.0L344.8 372.6L345.4 373.5L346.2 373.9L347.0 373.5L347.8 373.4L348.6 373.6L349.3 374.2L350.2 374.4L350.8 373.4L351.5 372.7L352.1 371.8L352.9 371.9L353.8 371.8L354.1 370.7L354.3 369.7L354.8 368.8L355.2 367.8L355.4 366.1L356.6 365.6L357.6 365.6L358.6 366.1L359.4 366.8L360.3 367.0L361.2 366.8L362.2 367.1L363.0 366.3L363.4 365.0L363.5 363.6L363.2 362.3L363.5 361.0L364.3 360.4L364.9 359.4L365.5 358.4L366.1 358.0L366.7 357.5L367.4 357.2L367.8 356.4L368.5 356.8L369.1 356.9L369.9 356.7L370.5 357.1L371.2 356.6L371.5 355.6L371.9 354.7L372.6 354.3L373.1 353.3L373.2 352.2L372.9 351.1L372.4 350.2L373.4 350.4L374.3 349.5L375.4 349.4L376.3 348.6L376.1 347.0L377.0 345.9L377.3 344.5L377.6 343.0L378.2 341.5L379.4 341.4L379.9 339.9L380.0 338.3L381.1 338.4L382.0 339.5L382.9 338.3L384.1 338.6L384.7 338.4L385.3 337.9L385.9 338.4L386.5 338.4L387.3 338.9L388.0 338.2L388.2 337.2L388.6 336.3L388.0 335.6L387.4 334.8L388.0 333.7L387.7 332.4L388.2 331.5L388.9 331.2L389.0 330.0L389.6 329.3L389.9 328.6L390.3 327.8L390.7 327.0L391.1 326.4L391.0 325.3L391.6 324.6L391.1 323.7L391.3 322.7L391.9 322.0L392.6 322.2L393.2 321.7L393.6 320.8L393.4 319.8L393.3 318.7L393.7 317.7L394.4 317.1L395.0 316.9L395.4 316.3L395.6 315.4L396.0 314.7L396.2 313.8L395.9 312.9L395.9 311.9L396.4 311.3L396.9 311.1L397.5 310.9L397.6 309.9L398.2 309.6L398.6 308.9L399.0 308.4L399.3 307.6L399.9 307.4L400.0 306.5L400.2 305.6L400.0 304.6L400.4 303.6L400.6 302.7L400.9 301.8L401.6 301.5L402.1 300.9L402.7 300.7L403.3 300.5L403.8 301.4L404.5 301.2L404.9 300.4L405.5 300.3L406.2 300.0L406.8 300.4L406.8 299.5L407.2 298.8L407.6 298.1L407.8 297.3L408.3 297.7L408.9 297.8L409.5 297.4L409.9 296.7L410.4 296.3L410.9 295.9L411.4 295.8L412.0 295.9L412.3 296.8L412.5 297.6L413.1 297.7L413.6 298.2L413.0 298.4L412.3 298.7L411.7 299.4L411.4 300.3L410.8 300.9L410.5 301.5L410.6 302.1L410.0 302.4L409.5 303.2L409.5 303.9L409.1 304.3L408.7 304.6L408.5 305.0L408.0 304.8L407.6 304.7L407.3 305.1L407.0 305.6L406.2 305.5L405.8 305.1L405.4 304.9L405.0 304.9L404.6 305.1L404.5 305.8L404.0 306.0L403.4 305.9L402.9 306.5L402.4 307.1L402.1 307.7L401.7 308.6L401.0 308.7L400.8 309.5L400.6 310.4L400.5 311.3L400.6 312.3L401.1 312.9L401.4 313.6L401.4 314.6L401.8 315.4L401.5 316.3L401.3 317.1L401.7 317.6L402.3 317.5L402.6 318.2L402.9 318.9L403.1 319.6L403.4 320.3L403.5 321.1L403.3 321.9L403.3 322.8L403.3 323.7L402.8 324.4L402.2 324.7L401.8 325.3L401.3 325.4L400.8 325.9L400.6 326.6L401.2 327.3L402.0 327.0L402.8 327.0L403.4 326.3L404.2 326.1L404.7 325.4L405.5 325.5L406.1 324.6L406.7 323.7L407.5 323.8L408.0 322.9L408.6 322.1L409.4 321.9L410.1 322.6L410.8 322.1L411.6 322.6L412.1 322.1L412.6 322.3L413.2 322.3L413.7 322.6L414.0 321.8L414.2 321.0L414.6 320.5L415.1 320.2L415.6 319.9L416.1 319.5L416.5 319.1L416.8 318.5L417.0 317.7L417.4 317.2L417.8 316.6L417.8 315.8L418.4 315.8L418.9 316.0L418.9 317.0L419.5 317.6L419.9 317.0L420.5 317.1L421.1 317.1L421.5 317.8L422.1 317.6L422.5 317.1L423.0 317.5L423.5 317.3L423.7 316.4L424.2 315.9L424.8 316.1L425.3 315.8L425.9 315.3L426.0 314.2L426.3 313.4L426.2 312.4L425.9 311.5L425.8 310.5L425.4 309.8L424.8 309.5L425.4 309.5L425.9 309.2L426.1 308.3L426.6 307.8L427.0 307.1L426.9 306.1L427.0 305.3L427.4 304.6L427.8 304.3L428.3 304.2L428.7 303.8L429.1 304.0L429.5 303.6L430.0 303.4L430.4 303.2L430.8 303.0L431.2 302.9L431.7 302.6L432.1 302.3L432.5 301.9L433.0 301.9L433.4 301.5L433.9 301.3L434.3 301.8L435.0 301.5L435.7 301.7L436.4 302.0L436.6 302.6L436.7 303.2L437.2 303.8L437.8 304.1L438.5 304.2L439.1 304.6L439.8 305.1L440.3 305.1L440.5 304.6L440.5 305.3L440.9 305.7L441.6 306.1L441.3 306.7L441.3 307.4L441.4 308.1L441.9 308.5L442.6 308.8L442.9 309.1L443.2 309.5L443.3 308.2L444.0 307.6L444.9 307.8L445.4 306.7L446.2 306.9L446.6 308.1L447.3 308.1L448.1 308.1L448.5 308.9L449.0 309.7L449.1 310.7L449.2 311.8L449.5 312.7L450.2 313.1L450.7 313.9L451.5 313.7L451.7 312.3L452.3 311.4L453.2 310.7L454.0 311.4L454.5 312.3L455.3 312.7L456.1 312.5L456.7 313.4L457.4 313.9L458.0 313.2L458.6 313.8L459.3 313.7L460.0 313.8L460.5 314.4L461.2 314.4L461.8 315.1L462.5 314.7L463.2 315.3L463.8 314.5L464.5 315.0L465.3 314.9L465.8 314.2L466.4 313.6L467.1 313.3L467.6 314.1L468.3 314.3L469.0 314.7L469.6 314.7L470.2 315.5L471.0 315.3L471.6 315.8L472.1 316.4L473.1 316.2L474.0 315.7L475.0 315.1L475.4 313.5L476.3 312.9L477.3 312.8L478.1 313.8L479.1 313.7L479.9 314.4L480.7 315.3L481.2 316.4L482.0 317.3L482.3 318.6L482.9 319.7L484.0 319.8L484.5 321.2L484.9 322.4L485.8 322.8L486.4 323.6L487.2 324.1L487.5 325.4L488.2 326.3L488.9 326.9L489.8 327.1L490.8 327.3L491.7 326.9L492.1 328.1L492.9 329.0L493.7 329.0L494.6 328.7L495.4 329.0L496.2 329.3L496.6 330.6L497.5 330.9L497.7 332.2L498.3 333.2L498.9 332.0L499.9 332.2L500.8 332.4L501.6 333.0L501.7 334.3L502.1 335.3L502.8 336.1L502.9 337.4L503.3 338.5L504.2 339.0L505.0 338.9L505.8 339.2L506.6 339.4L506.8 340.5L507.4 341.1L507.9 341.7L508.6 342.2L509.3 342.5L509.4 343.6L509.6 344.7L510.1 345.4L510.3 346.4L510.2 347.4L510.4 348.4L511.0 349.0L511.3 349.9L511.6 350.7L512.0 351.5L512.6 351.9L513.1 352.7L513.3 353.6L513.8 354.3L513.8 354.9L513.5 355.3L513.9 355.6L514.0 356.2L514.3 357.1L514.8 357.8L515.4 357.8L515.8 358.4L516.4 358.1L516.9 357.7L517.0 358.5L517.4 359.1L517.8 359.6L518.3 360.0L517.7 360.3L517.4 361.1L517.4 362.0L517.6 362.9L517.5 363.7L517.9 364.4L518.5 364.6L518.9 365.3L519.5 365.5L519.7 366.3L519.8 367.0L520.2 367.5L520.7 368.0L520.7 368.8L521.3 368.9L521.6 369.6L522.2 369.8L522.8 369.7L523.3 370.1L523.9 369.9L524.6 370.2L525.0 370.9L525.1 371.8L525.1 372.6L525.6 373.1L525.7 373.9L525.8 374.7L526.3 375.2L526.8 375.7L527.4 375.7L528.0 375.9L528.4 376.5L528.7 377.2L529.2 377.7L529.1 378.6L529.6 379.2L529.4 379.9L529.4 380.7L529.3 381.5L529.2 382.3L530.4 382.2L531.6 382.3L532.8 381.8L533.9 382.5L535.1 383.3L536.2 384.2L536.5 385.9L536.7 387.6L537.2 386.1L538.5 385.7L539.7 384.9L539.8 383.2L540.9 382.5L542.0 382.0L543.2 382.2L544.4 382.9L544.8 383.1L545.1 383.6L545.6 383.7L546.0 384.1L546.5 383.8L547.0 383.9L547.4 383.6L547.9 383.7L548.3 384.2L548.7 384.5L548.9 385.1L549.3 385.6L548.8 386.1L548.7 386.9L548.7 387.7L549.2 388.2L554.7 398.7L555.3 399.1L555.5 400.0L555.4 400.9L555.8 401.6L555.3 402.3L555.4 403.2L555.4 404.2L555.8 404.9L556.3 405.5L556.7 406.3L557.5 406.6L558.2 406.2L558.3 407.1L558.5 407.8L559.2 408.1L559.5 409.0L559.2 409.9L559.5 410.9L560.2 411.4L560.3 412.4L561.0 411.8L561.8 412.0L562.6 412.1L563.1 412.9L563.8 412.7L564.5 413.2L564.6 414.2L565.0 414.9L565.5 415.6L565.9 416.3L566.0 417.2L565.7 418.0L565.7 418.5L565.9 419.0L566.0 419.5L566.4 419.9L566.6 420.5L566.5 421.1L567.0 421.2L567.3 421.7L567.8 421.9L568.3 422.2L568.7 422.6L568.9 423.2L568.6 423.9L568.2 424.3L568.3 425.0L568.4 425.7L568.5 426.7L569.1 427.5L569.4 428.5L569.7 429.4L570.5 429.8L571.3 430.0L571.8 430.9L572.7 431.0L573.3 431.7L574.2 431.7L575.0 431.8L575.7 431.1L576.4 431.8L577.2 431.4L578.0 431.1L578.8 431.1L579.3 430.6L579.9 430.8L580.3 431.5L581.0 431.3L581.7 431.2L582.2 431.7L582.6 431.0L583.2 430.8L583.4 431.5L583.6 432.2L584.3 432.2L584.8 432.8L585.4 433.1L585.7 433.9L585.4 434.6L585.6 435.4L586.2 435.7L586.8 435.3L587.4 435.3L587.7 436.0L588.2 435.6L588.8 435.6L589.3 435.9L589.9 435.6L590.4 436.0L590.8 436.4L591.0 437.0L591.5 437.4L591.8 438.0L592.3 438.4L592.2 439.1L592.5 439.7L592.5 440.3L592.9 440.8L593.3 441.3L593.9 441.2L594.1 441.6L594.3 442.1L594.4 442.7L594.5 443.2L594.8 443.8L595.2 444.1L595.5 444.7L596.1 444.8L596.8 444.5L597.3 445.1L597.9 444.7L598.0 443.9L598.2 444.5L598.3 445.2L598.5 445.5L598.6 445.8L599.2 446.0L599.7 446.1L600.0 446.7L600.2 447.1L600.4 447.3L601.0 447.1L602.8 449.7L601.8 453.3L603.5 454.9L603.9 461.6L603.2 465.1L600.1 466.6L601.1 461.6L602.1 458.5L601.1 455.9L596.6 456.2L587.5 453.5L588.0 458.5L589.8 464.1L591.8 468.7L592.2 475.0L592.9 479.6L592.5 487.5L591.8 494.2L590.8 502.8L588.7 508.1L590.1 513.6L591.1 515.9L591.8 520.5L591.5 526.9L589.8 530.2L592.5 534.2L593.9 538.6L594.6 544.0L598.7 548.4L599.7 551.9L602.8 553.6L602.7 555.4L603.5 558.8L605.9 561.0L607.7 562.3L606.6 564.0L607.0 566.5L611.1 571.6L614.0 574.4L615.6 576.3L615.6 578.4L616.8 582.2L622.8 582.4L625.5 584.7L630.4 585.6L631.0 588.0L633.1 588.0L636.5 590.9L639.0 595.4L639.8 598.0L640.3 598.9L640.5 599.9L640.9 600.8L640.7 601.8L641.1 602.7L641.8 603.5L642.7 604.0L643.4 604.7L644.1 605.7L644.4 606.8L645.1 607.7L646.0 608.6L646.3 609.7L647.2 610.5L647.1 611.7L647.6 612.8L647.8 613.8L648.5 614.7L649.3 615.5L649.8 616.5L649.6 617.6L649.9 618.6L649.8 619.7L649.6 620.7L650.9 621.8L651.8 623.0L653.2 624.0L654.9 624.2L655.5 625.7L656.8 626.6L657.8 627.8L659.3 628.6L659.9 629.2L660.0 629.9L660.5 630.6L661.0 631.2L661.1 631.9L660.9 632.6L660.9 633.4L660.6 634.1L659.0 634.2L657.3 634.2L656.5 634.5L655.9 635.0L655.1 635.2L654.4 635.7L655.1 636.3L656.0 636.7L656.8 637.3L657.6 637.8L658.1 638.7L658.1 639.6L658.7 640.3L659.3 641.1L659.8 641.7L660.7 642.0L661.0 642.7L661.5 643.3L662.3 643.6L663.0 644.2L663.9 644.4L664.8 644.2L665.6 645.3L666.5 646.4L668.0 646.8L669.3 647.6L670.4 648.4L671.5 649.3L672.6 650.2L673.7 651.1L673.5 652.1L673.9 653.2L673.9 654.2L673.8 655.3L674.1 656.4L673.7 657.4L674.4 658.3L674.4 659.4L674.9 660.3L675.1 661.2L675.9 661.8L676.7 662.5L677.6 663.0L678.4 663.8L679.5 663.6L680.6 664.0L681.3 664.7L681.9 665.4L682.9 665.8L683.5 666.6L684.1 667.3L684.9 667.9L685.7 668.6L686.8 668.9L687.5 669.9L688.2 670.8L688.5 672.0L689.2 673.0L689.2 679.7L692.6 679.7L692.6 670.7L692.3 669.9L691.5 669.4L691.4 668.5L691.6 667.7L691.1 666.9L690.1 666.4L689.7 665.5L689.9 664.6L688.9 664.3L688.2 663.7L687.2 663.3L686.8 662.5L686.4 661.2L686.4 659.9L686.0 658.7L685.3 657.6L684.9 656.3L684.0 655.2L682.7 654.5L682.0 653.4L681.1 652.4L679.9 651.8L678.9 650.8L678.6 649.6L678.7 648.4L678.2 647.3L678.1 646.1L677.8 644.9L677.6 643.8L677.4 642.7L676.6 641.8L675.7 641.0L674.6 640.2L674.2 639.1L673.5 638.2L673.0 637.2L672.1 636.6L671.8 635.6L671.7 634.6L671.5 633.6L671.0 632.7L670.0 632.2L670.0 631.1L669.6 630.2L668.6 629.3L667.9 628.2L667.7 627.0L667.8 625.7L667.0 624.8L666.2 623.8L664.9 623.3L664.1 622.3L664.5 621.1L664.0 619.8L663.3 618.7L662.5 617.7L661.3 617.1L660.1 616.4L659.4 615.4L658.6 614.4L658.2 613.5L658.4 612.7L658.1 611.9L657.5 611.2L657.6 610.3L657.3 609.5L656.7 608.8L656.5 608.0L656.2 606.9L656.4 605.9L656.2 604.9L655.8 603.9L664.1 608.0L664.5 608.5L665.0 609.1L665.4 609.6L665.9 610.2L667.0 611.1L668.2 612.0L668.9 613.3L669.3 614.7L669.8 616.1L671.2 616.9L671.3 618.4L671.7 619.7L672.0 621.2L673.0 622.3L674.0 623.3L674.5 624.5L675.8 625.1L676.6 626.3L677.2 627.4L677.1 628.8L678.1 629.7L678.5 631.0L679.2 631.6L679.9 632.3L680.9 632.4L681.9 632.6L682.3 633.4L683.1 633.9L683.8 634.5L684.7 634.9L685.5 636.1L686.6 637.2L686.8 638.6L687.3 640.0L688.8 640.7L689.7 641.9L690.4 643.2L691.6 644.2L692.2 645.2L692.2 646.3L691.9 647.4L691.2 648.3L691.7 649.3L692.5 650.0L692.8 651.1L693.7 651.8L694.2 652.7L695.2 653.2L696.0 653.8L696.7 654.5L697.6 655.2L698.8 655.2L699.8 655.6L700.5 656.4L701.5 657.0L702.4 657.6L703.1 658.5L703.3 659.5L704.0 660.2L704.6 661.0L705.3 661.7L706.0 662.5L705.9 663.8L706.4 665.0L707.1 666.1L708.0 667.2L709.2 667.9L710.3 668.8L711.7 669.3L712.9 670.0L713.2 671.3L713.6 672.6L714.7 673.6L714.9 675.0L716.0 676.0L716.9 677.1L717.6 678.3L717.7 679.7L772.8 679.7L773.1 669.2L773.5 661.0L776.2 654.1L777.2 649.8L775.9 645.7L775.5 641.9L776.9 637.2L779.7 633.3L785.2 630.2L790.7 626.7L794.1 623.5L799.9 620.7L805.8 620.3L811.3 621.9L814.1 622.3L818.2 624.3L822.3 625.5L825.7 625.1L827.1 624.3L830.6 626.3L832.6 626.3L830.6 623.9L829.2 621.5L830.6 618.8L827.8 618.0L829.7 616.9L833.3 615.3L837.4 615.6L839.5 616.0L840.2 612.8L840.9 615.2L841.9 616.4L843.5 616.1L850.5 615.3L856.0 617.6L858.4 621.0L861.5 620.7L865.7 617.8L870.5 619.6L873.9 624.7L876.0 627.8L877.0 631.0L875.6 635.3L877.3 638.0L879.4 642.6L881.8 646.1L882.9 648.8L886.3 651.5L887.7 656.2L892.5 655.6L894.4 651.1L895.0 643.4L892.8 637.2L891.5 631.8L891.2 630.4L889.0 626.3L886.6 619.9L885.6 615.2L885.3 612.7L885.6 609.6L887.0 606.4L888.4 603.5L889.2 602.1L892.1 599.5L895.6 596.6L900.7 592.5L902.1 589.6L905.2 587.1L909.3 587.1L912.4 583.4L919.0 580.9L922.8 576.7L926.0 575.4L926.4 571.6L923.6 564.4L922.8 561.4L920.3 560.5L920.7 555.8L921.0 552.7L920.3 550.1L919.3 547.5L919.7 543.5L920.0 540.9L922.4 538.2L922.4 540.4L921.0 543.1L921.4 545.7L920.7 547.9L923.4 550.1L923.8 552.3L923.1 556.2L922.8 559.2L923.8 558.8L925.5 555.4L927.6 551.9L928.9 549.2L929.3 547.9L928.9 544.8L927.6 544.0L926.9 541.3L925.9 538.2L926.7 536.0L925.9 538.2L928.3 540.4L930.3 543.7L933.8 540.0L935.8 536.0L936.5 530.1L934.8 529.7L936.4 527.8L937.2 526.9L938.9 525.1L944.1 522.8L948.2 522.6L951.3 522.2L953.7 521.7L954.4 519.2L955.4 520.5L956.3 520.5L959.6 520.1L959.8 518.2L962.0 519.3L964.4 518.9L964.4 516.4L962.7 515.2L963.3 517.3L960.6 518.0L959.6 515.9L957.2 513.1L959.9 509.9L958.4 507.8L959.2 505.8L960.3 503.8L962.7 500.9L965.4 499.5L969.5 497.6L972.3 496.1L972.3 492.8L976.4 494.2L980.5 492.3L984.8 489.4L985.3 488.3L986.2 487.8L987.2 487.7L988.1 487.2L988.8 486.3L989.7 485.7L990.6 485.2L991.6 485.0L992.7 485.5L993.9 485.8L994.9 485.0L996.2 484.7L997.2 484.1L998.3 483.5L999.2 482.7L999.8 481.6L1000.2 480.7L1000.9 480.2L1001.8 480.0L1002.6 479.6L1002.3 480.5L1001.6 481.1L1001.9 481.9L1001.7 482.8L1000.2 483.3L999.8 484.0L999.1 484.5L998.4 485.6L998.2 486.9L997.2 487.5L996.2 488.1L995.7 489.2L995.0 490.2L993.9 490.6L992.9 491.3L992.5 492.4L992.2 493.5L991.5 494.5L990.4 494.7L990.3 495.9L989.7 496.8L990.2 497.9L990.2 499.0L991.3 500.0L992.7 500.0L993.4 501.2L994.3 502.3L995.7 501.6L997.0 500.6L998.4 499.7L1000.1 500.0L1000.7 498.4L1001.9 497.3L1002.2 495.5L1003.3 494.2L1004.6 493.7L1005.9 493.3L1006.3 492.6L1006.7 491.9L1008.1 491.3L1009.5 490.9L1011.0 491.3L1012.5 491.0L1013.8 490.1L1015.0 489.2L1016.3 488.5L1017.7 487.9L1019.1 487.5L1020.0 486.9L1021.0 487.0L1021.9 487.2L1022.9 487.1L1023.6 486.3L1024.6 486.0L1025.2 485.2L1026.0 484.5L1027.1 484.1L1028.3 484.2L1029.2 483.3L1029.9 482.3L1030.8 481.5L1031.4 480.5L1032.0 479.5L1032.8 478.6L1033.2 477.9L1033.3 477.0L1033.9 476.5L1034.2 475.7L1033.3 474.7L1032.1 474.7L1031.4 473.7L1030.8 472.5L1030.5 471.3L1030.1 470.2L1029.9 468.9L1030.1 467.6L1029.7 468.4L1029.5 469.1L1028.7 470.5L1027.2 470.7L1026.0 471.7L1024.9 472.2L1024.2 473.4L1023.6 474.5L1023.5 475.8L1023.5 477.1L1023.6 478.3L1023.3 479.6L1022.5 480.6L1021.3 480.8L1020.6 481.8L1019.4 482.2L1018.3 481.9L1017.3 481.3L1016.5 480.3L1015.4 480.5L1014.3 480.1L1013.3 479.6L1012.3 479.8L1011.4 479.5L1010.4 479.9L1009.5 479.5L1008.5 479.5L1007.6 479.1L1006.7 478.6L1005.4 477.9L1003.9 477.6L1003.6 476.9L1003.6 476.1L1003.2 475.4L1002.8 474.7L1001.7 473.6L1000.5 472.7L1000.1 471.2L999.8 469.7L999.5 468.2L999.1 466.6L999.0 465.6L999.3 464.6L1000.1 464.0L1000.6 463.2L1001.2 462.4L1001.5 461.4L1001.8 460.5L1001.9 459.5L1000.7 459.2L999.5 458.8L998.6 457.9L997.6 457.1L996.4 457.7L995.4 458.6L994.2 458.6L992.9 458.5L991.8 458.6L990.6 458.5L989.7 457.8L988.8 457.0L990.0 456.2L991.3 456.0L992.4 456.9L993.6 457.3L994.9 457.1L996.1 457.2L997.3 456.8L998.4 456.4L999.2 456.0L1000.0 455.8L1000.5 454.9L1001.2 454.3L1001.8 453.7L1002.4 453.0L1003.2 452.7L1003.9 452.3L1003.9 451.4L1003.9 450.5L1004.0 449.6L1003.9 448.7L1002.8 447.8L1002.4 446.2L1001.1 445.7L1000.1 444.6L998.8 444.8L997.6 444.4L996.3 444.1L995.0 444.5L993.8 444.6L992.7 444.4L991.6 443.8L990.4 444.3L989.4 445.1L988.2 445.1L987.2 445.7L986.1 446.0L985.1 447.0L983.8 447.1L983.4 448.6L982.5 449.6L981.3 449.1L980.2 448.5L979.1 449.2L977.8 449.4L976.8 450.6L975.4 450.9L974.1 451.7L972.7 451.8L971.3 452.5L970.7 454.0L969.8 455.2L968.9 456.4L967.8 457.0L967.0 457.9L965.9 458.4L965.0 459.2L964.7 460.5L963.9 461.4L963.6 462.8L962.7 463.6L961.6 464.1L960.4 464.1L959.6 465.0L959.0 466.1L958.6 467.2L957.7 468.0L956.5 468.2L955.8 469.2L956.7 468.4L957.4 467.5L958.1 466.4L958.5 465.2L959.6 464.7L960.4 463.8L961.4 463.2L962.3 462.6L963.2 462.2L963.9 461.5L964.2 460.5L964.7 459.6L965.3 458.9L965.6 457.9L966.0 456.9L966.1 455.9L966.8 454.4L968.1 453.3L969.6 453.5L971.0 452.8L972.1 451.8L973.0 450.5L973.7 449.1L974.4 447.6L975.3 446.9L976.5 446.7L977.6 446.7L978.6 445.9L979.8 445.5L980.6 444.6L981.6 443.9L982.6 443.4L983.0 441.9L984.0 440.9L984.9 439.7L986.2 439.4L986.9 438.1L987.7 437.0L988.5 435.8L988.8 434.3L990.8 433.4L992.7 432.2L994.8 432.5L997.0 432.2L999.1 431.4L1001.2 431.7L1003.4 431.9L1005.3 433.3L1007.0 434.6L1008.9 435.2L1010.8 435.8L1012.8 435.3L1014.6 436.6L1016.8 436.6L1018.6 435.5L1020.5 434.3L1022.0 433.9L1023.5 433.1L1025.0 434.2L1026.7 434.2L1028.4 433.9L1029.6 432.5L1031.2 433.1L1032.8 433.3L1033.5 431.8L1034.9 431.2L1035.4 429.6L1036.3 428.5L1037.5 427.5L1038.9 427.5L1039.7 426.1L1041.1 425.7L1042.7 426.1L1044.3 425.4L1045.4 423.9L1046.9 423.1L1048.1 421.8L1049.6 420.8L1051.2 420.4L1052.8 420.7L1054.0 419.9L1054.7 418.5L1054.9 416.8L1055.8 415.5L1056.8 414.4L1057.8 413.2L1059.1 413.1L1060.4 412.4L1062.4 407.9L1062.7 407.4L1062.7 406.8L1062.6 406.2L1062.6 405.7L1062.8 405.2L1063.0 404.7L1063.2 404.2L1063.4 403.7L1063.3 403.1L1063.5 402.5L1063.3 401.9L1063.0 401.5L1062.5 401.4L1062.2 400.9L1061.8 400.5L1061.7 399.9L1061.0 399.3L1060.5 398.3L1059.7 398.3L1058.9 398.1L1058.0 398.2L1057.2 397.7L1056.7 398.8L1055.8 398.9L1055.6 397.8L1055.0 396.9L1054.5 395.8L1053.4 396.0L1053.2 394.7L1052.5 393.9L1052.7 392.6L1053.5 391.7L1052.9 392.0L1052.4 391.7L1051.9 391.7L1051.3 391.5L1051.0 390.8L1050.4 390.7L1049.8 390.6L1049.3 390.6L1048.6 390.5L1048.0 390.1L1047.5 390.8L1046.9 391.2L1046.9 390.2L1046.4 389.5L1045.8 389.4L1045.2 388.8L1045.7 388.9L1046.0 388.5L1046.3 388.2L1046.7 388.2L1047.0 387.8L1047.4 387.5L1047.8 387.4L1048.1 387.0L1048.2 386.4L1048.3 385.8L1048.8 385.8L1049.1 385.2L1049.5 385.6L1050.0 385.4L1050.5 385.3L1050.7 384.7L1049.8 384.7L1049.3 383.6L1048.5 384.1L1047.7 384.1L1047.0 384.7L1046.1 384.4L1045.3 384.0L1044.8 383.1L1043.9 382.6L1043.0 383.2L1042.4 382.2L1042.2 381.0L1041.4 380.8L1040.5 380.7L1039.8 379.9L1039.7 378.7L1039.7 377.6L1039.5 376.6L1038.8 376.0L1038.4 375.1L1038.4 374.0L1038.0 372.9L1037.1 372.9L1036.5 371.9L1035.6 371.5L1035.5 370.1L1034.7 370.1L1033.8 370.0L1033.0 369.5L1032.3 368.8L1031.3 369.0L1030.8 370.2L1030.3 369.2L1029.7 368.4L1029.4 367.2L1029.1 366.1L1029.2 364.9L1029.2 363.7L1029.8 362.6L1029.5 361.3L1028.6 361.3L1027.7 361.6L1026.9 360.8L1026.1 360.3L1025.5 359.5L1024.8 358.7L1024.4 357.5L1023.9 356.5L1023.5 355.3L1022.5 354.9L1021.7 355.5L1020.8 355.2L1019.9 354.6L1019.4 353.4L1019.8 352.2L1019.8 350.8L1019.5 349.3L1020.2 348.2L1020.8 347.2L1021.8 346.9L1020.8 346.5L1020.6 345.0L1020.5 343.7L1020.5 342.5L1019.7 341.4L1019.8 339.8L1018.8 339.9L1017.9 339.3L1016.9 339.0L1016.1 340.0L1015.4 339.1L1014.5 338.8L1015.0 337.5L1015.0 336.1L1014.3 335.3L1013.7 334.2L1013.0 333.2L1012.7 331.8L1013.3 330.6L1013.6 329.3L1012.6 329.2L1012.3 327.9L1012.5 326.5L1011.7 325.6L1010.8 325.5L1010.2 324.5L1010.6 323.1L1010.0 321.8L1010.0 320.5L1009.5 319.4L1009.1 318.1L1008.3 317.7L1007.5 316.9L1007.1 315.6L1006.2 315.6L1005.3 315.8L1004.9 315.3L1004.5 315.3L1004.1 314.7L1004.1 314.0L1004.0 313.3L1003.8 312.6L1004.2 312.1L1004.2 311.3L1003.9 312.0L1003.4 312.0L1002.9 312.1L1002.6 311.4L1002.1 311.1L1002.0 310.3L1001.6 309.9L1001.2 310.2L1000.8 311.1L1000.4 311.9L1000.1 312.9L999.4 313.1L999.3 314.2L998.7 314.9L998.1 315.5L997.4 315.6L996.8 316.3L996.0 316.7L996.5 317.8L996.1 319.0L995.9 320.2L995.1 320.5L994.6 321.5L995.0 322.6L994.8 323.5L994.5 324.4L993.9 324.7L993.5 325.6L992.9 325.1L992.2 325.5L991.7 326.2L991.1 326.6L990.3 326.8L989.6 326.3L989.0 327.0L988.5 327.9L987.9 328.7L987.5 329.7L988.2 330.6L988.1 332.0L987.2 331.5L986.3 330.9L985.4 331.2L984.7 332.3L983.7 332.1L983.0 333.3L982.6 334.5L982.0 335.4L981.4 336.4L980.6 337.1L979.8 337.7L979.3 338.8L978.2 339.2L977.5 340.3L976.3 340.1L975.7 338.6L974.7 337.7L973.9 336.6L974.2 334.9L973.7 333.2L973.4 331.3L974.5 330.0L973.3 329.1L973.4 327.1L972.2 326.7L971.6 325.3L970.4 325.4L969.6 324.1L968.4 323.5L967.3 322.7L966.1 323.6L965.4 325.3L966.0 324.4L966.1 323.1L966.2 321.8L966.8 320.9L967.6 320.8L968.3 319.9L969.0 319.2L969.3 318.0L969.2 316.6L968.7 315.3L968.7 313.7L969.6 312.9L968.9 312.1L968.2 311.2L967.4 310.3L967.5 308.8L967.6 307.6L967.0 306.9L966.6 305.9L967.0 304.8L966.2 305.0L965.5 305.5L965.3 304.2L964.5 303.7L963.7 304.1L963.2 303.1L962.5 303.5L961.9 303.9L961.1 303.7L960.7 302.6L961.0 301.5L960.6 300.4L960.0 299.6L960.0 298.4L959.5 297.5L958.7 297.5L958.5 296.4L957.9 295.8L957.3 295.0L956.6 295.2L955.9 295.1L955.2 294.7L954.3 294.7L953.9 295.8L953.1 296.0L952.4 295.2L951.7 294.6L951.7 293.2L951.3 292.6L950.9 292.3L950.7 291.6L950.6 290.8L950.6 290.1L950.6 289.4L950.3 288.8L950.3 288.0L949.8 287.8L949.3 288.1L949.0 288.9L948.5 288.9L948.2 288.2L947.8 287.7L947.3 287.4L946.8 287.4L946.4 286.3L945.9 285.3L945.1 285.6L944.4 285.3L943.6 285.1L942.8 285.0L942.6 283.7L942.0 282.9L941.7 281.6L940.9 281.0L940.2 280.6L939.4 280.9L938.6 281.6L937.9 280.8L937.3 281.5L936.5 281.5L935.5 281.8L934.4 281.8L933.9 283.5L933.1 284.5L932.1 285.9L932.0 288.0L930.8 288.5L929.6 287.7L928.5 287.6L927.3 287.3L926.1 286.7L925.1 288.0L924.8 285.8L923.5 285.2L922.7 283.5L922.8 281.5L921.9 282.3L921.9 284.0L921.1 284.9L920.1 284.5L919.3 285.4L918.5 284.6L917.6 284.7L917.0 283.4L916.2 282.8L915.4 283.3L914.5 282.8L914.4 281.2L913.6 281.5L912.9 280.7L912.3 280.0L911.7 279.2L911.3 279.9L910.7 279.8L910.4 280.6L910.1 281.4L909.6 281.8L909.1 281.6L908.7 282.3L908.3 282.9L909.0 294.6L909.6 296.3L910.1 297.9L910.3 299.8L910.5 301.6L910.9 303.4L910.6 305.3L910.7 307.1L911.1 308.8L909.5 310.8L908.4 313.4L907.4 316.0L906.8 318.9L905.7 321.6L905.6 324.7L905.4 327.7L905.6 330.6L906.3 332.5L907.5 333.9L908.0 335.9L909.2 337.3L910.2 338.9L911.2 340.5L912.5 341.6L913.8 342.5L914.5 343.4L915.2 344.3L915.4 345.6L916.0 346.6L916.5 347.7L916.9 348.9L917.0 350.2L917.3 351.5L917.8 353.0L917.7 354.7L918.4 356.0L918.7 357.7L919.4 359.1L919.4 360.8L919.2 362.4L919.3 364.0L918.8 365.7L917.9 366.9L916.9 367.9L916.0 369.1L914.9 370.1L913.8 370.9L912.9 372.2L912.4 373.9L911.0 374.4L909.5 375.1L908.6 376.7L907.6 378.4L906.1 378.6L904.6 378.9L903.4 380.0L902.1 381.1L901.7 382.0L901.0 382.6L899.6 383.2L899.0 384.0L898.7 384.9L897.3 385.9L897.2 387.7L897.7 389.3L898.2 390.9L898.4 392.7L898.9 394.3L900.0 395.5L900.9 396.7L902.1 397.6L902.3 399.0L902.5 400.5L902.2 401.9L902.2 403.3L902.2 404.8L902.7 406.1L902.6 407.6L902.8 409.0L902.9 410.5L903.6 411.7L903.3 413.2L903.7 414.6L903.7 416.0L903.6 417.4L903.2 418.8L903.5 420.2L902.6 420.3L901.8 420.9L901.0 421.4L900.3 422.2L899.5 422.7L898.7 423.2L897.9 423.7L897.3 424.6L895.6 424.6L894.8 424.3L894.1 423.8L893.4 423.2L892.8 422.6L891.1 422.4L890.7 420.7L890.0 419.1L888.8 418.3L887.6 417.2L886.4 416.3L885.6 414.7L885.2 413.0L884.9 411.3L884.2 410.3L883.2 409.8L882.8 408.7L882.3 407.5L881.8 406.3L881.7 405.0L880.8 404.3L880.1 403.3L880.6 401.2L881.2 399.1L880.8 396.9L880.9 394.6L881.1 392.3L880.9 390.0L880.2 387.9L879.4 385.9L879.2 384.9L879.3 383.9L879.4 382.8L879.8 382.0L879.6 381.1L879.5 380.1L879.6 379.1L879.4 378.1L878.0 377.8L876.5 377.5L875.1 376.8L873.6 377.2L872.0 377.0L870.6 377.6L869.2 376.9L867.7 376.3L866.3 376.7L865.0 376.3L863.6 376.1L862.2 376.3L861.1 375.3L859.8 374.4L858.7 373.4L857.4 372.6L855.6 371.9L854.1 370.3L852.2 369.9L850.7 368.2L849.0 367.1L847.4 365.5L845.5 365.4L843.6 365.3L842.9 363.6L842.0 362.1L840.7 361.1L839.3 360.6L838.2 359.5L837.1 358.3L836.0 357.3L834.7 356.5L833.1 356.1L832.0 354.5L830.5 353.9L829.0 353.6L827.4 353.6L825.9 354.4L824.4 353.8L823.0 352.8L821.3 353.5L819.6 354.2L817.9 354.8L816.1 354.4L814.4 354.0L812.7 355.1L811.0 355.5L809.2 355.3L808.9 353.7L808.9 352.0L808.2 350.7L807.9 349.0L808.1 347.4L807.8 345.7L807.7 344.0L807.2 342.5L806.2 340.8L804.7 340.1L803.5 339.0L802.2 338.0L800.9 336.8L799.8 335.4L798.8 333.9L797.5 332.6L796.8 330.6L795.7 329.0L795.2 326.8L794.5 324.8L794.1 322.5L793.2 320.5L793.3 318.2L793.4 315.8L794.0 313.9L795.0 312.4L796.1 311.2L796.7 309.3L797.8 308.0L798.3 305.9L798.9 304.0L798.9 301.8L799.5 299.6L800.6 298.2L801.5 296.4L802.3 294.6L803.5 293.2L804.0 290.9L805.1 289.4L805.8 287.4L806.8 285.8L808.0 284.9L808.9 283.2L809.7 281.4L810.7 279.8L811.7 278.3L812.5 276.3L812.7 274.0L814.2 273.5L815.5 271.8L816.9 270.7L818.4 270.4L819.9 269.2L820.8 267.0L821.8 264.9L823.0 263.3L824.2 259.4L826.2 256.6L828.0 253.2L830.5 251.9L832.9 251.8L835.4 251.7L837.7 249.8L840.2 249.1ZM562.2 428.1L563.7 428.9L564.4 430.7L566.0 430.7L567.3 431.9L568.5 432.9L569.5 434.3L570.5 435.7L571.9 436.5L572.6 437.8L573.0 439.4L573.7 440.8L574.9 441.7L576.2 442.6L577.7 442.4L578.3 443.9L579.4 445.0L580.4 446.1L581.5 447.1L582.0 448.5L582.7 449.9L583.9 450.4L585.1 451.3L586.4 451.6L587.7 451.8L588.6 452.5L589.6 453.0L590.5 453.8L591.6 453.9L592.7 453.4L593.8 453.2L594.9 453.4L596.0 453.9L596.1 453.4L596.1 452.8L596.2 452.3L596.2 451.8L596.5 451.4L596.8 451.1L597.2 450.8L597.3 450.2L596.8 449.3L596.1 448.6L595.8 447.6L595.0 447.0L594.5 446.0L593.6 445.7L593.0 444.8L592.5 443.9L592.4 442.2L591.6 440.7L590.7 439.3L589.2 438.9L588.0 438.1L587.0 436.9L585.6 437.0L584.3 436.5L583.1 435.9L582.0 435.3L581.0 434.4L580.0 433.5L578.7 433.2L577.4 433.4L576.2 432.9L575.3 431.6L574.4 431.0L573.4 431.2L572.6 430.3L571.6 430.1L571.1 429.0L570.4 428.0L569.3 428.1L568.4 427.3L567.6 427.7L567.1 428.5L566.3 428.8L565.4 428.8L564.6 429.1L563.8 428.8L562.9 428.7ZM530.6 389.4L531.6 390.3L532.8 390.4L533.9 390.9L534.9 391.9L536.1 391.7L537.2 391.3L538.4 391.1L539.5 391.2L539.1 392.2L538.7 393.3L538.9 394.4L539.0 395.6L539.1 396.7L538.6 397.7L538.5 398.9L538.2 399.9L538.1 401.8L538.8 403.5L539.9 404.7L540.5 406.5L541.5 407.7L542.4 409.1L543.0 410.8L543.7 412.4L542.8 411.3L542.1 410.2L541.1 409.2L539.9 409.0L538.8 408.4L537.9 407.5L536.9 406.7L536.1 405.6L536.1 404.2L535.8 402.9L534.9 402.1L534.3 401.0L533.4 400.3L532.8 399.3L532.1 398.4L531.3 397.6L531.2 396.5L530.7 395.5L531.1 394.6L531.2 393.5L530.9 392.5L530.8 391.5L530.7 390.4ZM381.3 350.2L381.8 348.9L382.5 347.8L382.9 346.4L383.6 345.3L384.6 345.8L385.6 345.2L386.5 344.4L387.5 343.8L388.3 343.7L389.1 344.3L389.9 344.0L390.7 344.4L391.6 344.7L392.4 344.1L393.2 343.5L393.7 342.5L394.2 343.5L394.9 344.1L395.7 344.5L396.5 344.2L396.9 345.2L397.2 346.3L397.7 347.2L398.5 347.6L397.8 349.1L396.8 350.2L395.6 350.9L394.5 351.7L393.9 353.3L393.1 354.7L392.2 356.0L390.9 356.5L390.1 356.2L389.3 355.7L388.4 355.9L387.5 355.3L386.7 355.5L385.8 355.8L384.9 355.6L384.1 355.9L383.7 355.1L383.8 354.2L383.2 353.6L383.0 352.7L382.4 352.3L381.9 351.8L381.5 351.1ZM293.9 313.0L294.6 311.4L295.5 310.3L296.7 310.2L297.7 309.3L298.9 309.5L299.9 310.2L301.0 309.8L302.2 310.2L302.6 311.3L302.5 312.5L302.9 313.6L303.6 314.2L304.3 314.6L305.0 314.7L305.7 315.1L306.3 315.8L305.8 316.3L305.4 317.0L304.9 317.4L304.5 318.0L303.9 318.3L303.4 318.4L302.8 318.4L302.2 318.5L301.3 318.0L300.5 318.0L299.7 317.3L298.8 317.3L297.9 316.8L297.0 317.0L296.1 316.8L295.3 316.4L295.0 316.1L294.7 315.9L294.5 315.4L294.4 315.0L294.2 314.5L293.9 314.1L293.8 313.5ZM263.7 264.8L265.1 263.3L266.8 263.1L267.9 260.7L269.6 260.1L271.3 260.3L272.7 261.7L274.4 262.1L276.0 261.7L277.0 262.9L277.7 264.6L278.5 266.1L279.7 266.7L280.9 267.0L282.0 266.8L283.1 267.8L284.3 267.9L283.2 268.2L282.1 268.5L281.2 269.7L280.1 269.8L279.1 270.7L278.3 272.3L277.2 273.1L276.0 272.5L274.7 273.5L273.2 273.3L272.0 272.2L270.8 270.9L269.4 270.4L268.4 268.6L267.0 269.1L265.7 267.9L265.4 267.5L265.3 266.9L264.9 266.8L264.6 266.5L264.2 266.4L264.0 265.9L263.7 265.5ZM293.9 396.3L294.3 395.6L294.3 394.7L294.7 394.0L295.3 393.7L295.9 393.2L296.1 392.4L296.7 391.9L297.3 391.7L298.2 391.5L298.9 392.1L299.8 391.9L300.6 391.5L301.3 391.8L302.0 392.4L302.8 392.6L303.6 393.2L303.3 393.6L303.1 394.2L302.8 394.7L302.9 395.3L302.5 395.7L302.1 396.0L301.8 396.4L301.6 397.0L301.1 397.1L300.7 397.6L300.2 397.5L299.6 397.6L299.1 397.8L298.5 397.7L298.0 398.1L297.8 398.7L297.3 398.3L296.8 398.0L296.4 397.5L296.1 396.9L295.5 396.8L295.0 396.7L294.5 396.5ZM284.3 400.1L284.6 399.5L285.1 399.3L285.5 399.0L286.0 398.8L286.3 398.3L286.6 397.8L287.0 397.4L287.2 396.8L287.9 396.5L288.5 396.0L289.3 395.9L290.0 395.9L290.8 396.0L291.4 396.6L291.9 397.3L292.5 397.8L292.3 398.0L291.9 398.2L291.9 398.7L291.6 399.0L291.4 399.4L291.3 399.9L291.1 400.2L290.9 400.6L290.4 400.4L290.0 400.2L289.5 400.2L289.1 400.5L288.6 400.6L288.2 401.0L287.9 401.4L287.6 401.8L287.1 401.7L286.7 401.4L286.2 401.4L285.8 401.5L285.5 401.0L285.1 400.6L284.7 400.5ZM275.0 406.1L275.2 405.7L275.5 405.5L276.1 405.3L276.3 405.0L276.4 404.6L276.6 404.3L276.7 403.9L277.0 404.3L277.3 404.6L277.8 404.6L278.2 404.9L278.6 405.1L279.0 405.0L279.4 404.6L279.8 404.6L279.6 405.1L279.6 405.7L279.2 406.0L278.9 406.4L278.4 406.8L278.0 407.3L277.5 407.4L276.9 407.3L276.4 407.2L275.9 406.9L275.6 406.3ZM268.5 408.3L268.9 407.9L269.3 407.5L269.6 406.9L269.9 406.4L270.3 406.5L270.5 406.8L270.9 407.0L271.2 407.2L271.5 407.1L271.9 407.1L272.2 407.1L272.6 407.0L272.4 407.4L272.1 407.7L271.8 408.1L271.8 408.6L271.5 409.1L271.0 409.3L270.6 409.3L270.1 409.3L269.8 408.9L269.3 408.8L268.9 408.4ZM256.8 411.1L256.9 410.7L257.2 410.5L257.4 410.2L257.5 409.8L258.1 409.5L258.7 409.2L259.1 409.6L259.6 409.5L260.0 409.8L260.4 409.9L260.9 410.2L261.4 410.0L261.8 409.8L262.3 409.8L262.0 410.3L261.9 410.8L261.6 411.2L261.2 411.4L260.6 411.6L260.1 411.8L259.5 412.0L259.0 412.2L258.4 411.9L257.8 411.8L257.3 411.4ZM341.4 378.6L341.8 378.0L341.7 377.6L341.9 377.2L342.4 376.8L342.8 376.3L343.2 376.5L343.5 376.5L343.8 376.7L344.2 376.8L344.5 377.0L344.8 377.0L345.5 377.0L345.3 377.5L345.2 378.1L344.9 378.5L344.7 379.0L344.2 379.0L343.8 379.3L343.5 379.7L343.0 379.9L342.6 379.7L342.1 379.6L341.7 379.2ZM338.3 333.8L338.6 333.2L338.9 332.8L339.2 332.2L339.5 331.7L340.1 331.5L340.7 331.8L341.2 331.9L341.7 332.3L341.4 332.6L341.2 333.1L341.1 333.6L341.1 334.1L340.7 334.4L340.3 334.4L340.0 334.7L339.7 334.9L339.4 334.5L339.0 334.3L338.7 333.9ZM1037.7 461.6L1038.0 460.9L1037.8 460.2L1038.1 459.6L1038.4 459.0L1038.9 458.5L1039.6 458.5L1039.9 457.8L1040.4 457.5L1040.4 456.8L1040.3 456.1L1040.5 455.5L1040.5 454.8L1040.4 454.2L1040.2 453.5L1040.0 452.9L1039.7 452.3L1040.1 451.7L1040.3 451.0L1039.9 450.4L1040.0 449.6L1040.1 448.9L1040.3 448.3L1040.7 447.7L1041.2 447.3L1041.7 447.1L1042.3 446.9L1042.8 446.4L1043.0 445.7L1043.6 445.6L1044.2 445.7L1044.9 445.6L1045.2 445.0L1045.4 444.4L1045.3 443.7L1045.6 443.1L1046.1 442.8L1046.6 442.4L1046.7 441.8L1047.1 441.3L1047.7 441.2L1048.0 440.8L1048.1 440.1L1048.4 439.6L1048.4 438.9L1048.1 438.4L1048.0 437.8L1048.2 437.1L1048.0 436.5L1048.5 436.0L1048.6 435.2L1049.0 434.6L1049.5 434.1L1050.0 433.6L1050.7 433.6L1051.0 432.8L1051.4 432.2L1051.5 431.4L1051.3 430.6L1051.8 430.1L1052.1 429.3L1052.2 428.5L1052.7 427.9L1052.9 427.1L1053.5 426.8L1053.7 426.0L1054.3 425.5L1054.4 424.7L1054.7 424.0L1054.8 423.2L1055.2 422.5L1055.8 422.1L1056.4 421.6L1057.1 421.6L1057.7 421.2L1058.0 420.4L1058.6 420.0L1059.3 419.9L1059.7 419.2L1060.4 419.4L1061.0 419.1L1061.3 419.5L1061.7 419.9L1062.0 420.4L1062.3 420.9L1062.8 421.1L1063.3 421.2L1063.5 421.8L1063.8 422.4L1063.4 423.2L1063.5 424.2L1063.5 425.1L1063.1 426.0L1063.2 426.9L1063.7 427.7L1063.6 428.7L1063.4 429.6L1062.8 430.3L1062.3 431.0L1061.5 431.0L1060.7 431.3L1060.5 432.3L1060.4 433.3L1059.7 433.9L1059.0 434.3L1058.9 434.9L1058.5 435.2L1058.3 435.6L1058.1 436.1L1058.2 436.6L1058.3 437.1L1058.2 437.7L1057.9 438.1L1057.6 438.5L1057.3 438.9L1056.8 438.8L1056.4 439.0L1056.0 439.1L1055.6 439.2L1055.2 439.5L1054.9 439.7L1055.3 439.7L1055.7 439.8L1056.0 439.5L1056.5 439.5L1056.9 439.4L1057.2 439.0L1057.6 439.0L1058.0 438.8L1058.4 438.6L1058.7 438.3L1059.1 438.1L1059.4 437.9L1059.9 438.0L1060.3 438.1L1060.6 437.7L1061.0 437.6L1061.4 438.0L1061.7 438.5L1061.8 439.1L1062.0 439.7L1062.3 440.3L1062.8 440.5L1063.3 440.8L1063.8 440.7L1064.4 440.7L1064.8 441.1L1065.3 440.9L1065.8 441.2L1066.2 441.6L1066.7 441.9L1066.8 442.5L1067.2 442.9L1067.8 443.1L1068.4 443.2L1069.0 443.1L1069.5 442.7L1070.1 442.6L1070.6 442.1L1071.2 441.7L1071.4 441.0L1071.9 441.6L1072.6 441.6L1072.8 442.3L1073.1 443.0L1073.7 442.8L1074.3 442.8L1074.9 442.6L1075.5 442.9L1075.9 443.3L1076.2 443.8L1076.5 444.2L1076.9 444.6L1077.1 445.2L1077.2 445.8L1077.6 446.2L1078.0 446.6L1077.8 447.1L1077.6 447.7L1077.3 448.2L1077.3 448.8L1077.6 449.4L1077.9 450.0L1077.8 450.6L1077.6 451.3L1077.7 451.8L1078.2 452.1L1078.7 452.1L1079.1 452.6L1079.6 452.4L1080.0 452.3L1080.5 452.2L1081.0 452.3L1080.6 452.9L1080.6 453.6L1080.1 453.9L1079.6 454.1L1079.1 454.3L1078.8 454.8L1078.3 455.2L1078.1 455.7L1077.7 456.3L1077.1 456.5L1077.0 457.1L1076.9 457.7L1076.5 458.1L1076.1 458.5L1075.7 459.0L1075.5 459.5L1075.9 459.9L1076.3 460.1L1076.8 460.2L1077.3 460.5L1077.8 460.6L1078.3 460.6L1078.7 460.8L1079.2 460.8L1079.8 460.6L1080.3 460.7L1080.8 460.9L1081.1 461.5L1081.6 461.2L1082.1 461.1L1082.6 461.3L1083.1 461.6L1082.7 462.1L1082.4 462.6L1082.5 463.3L1082.4 464.0L1082.1 464.5L1081.9 465.1L1081.7 465.7L1081.4 466.2L1081.4 466.8L1081.4 467.5L1081.3 468.1L1081.3 468.7L1081.0 469.3L1081.2 469.9L1081.2 470.6L1081.0 471.2L1080.6 470.8L1080.3 470.4L1079.8 470.2L1079.3 470.3L1078.8 470.1L1078.6 469.6L1078.1 469.3L1077.8 468.9L1077.4 469.3L1076.9 469.3L1076.5 469.6L1075.9 469.4L1075.4 469.3L1074.9 469.4L1074.6 468.9L1074.1 468.7L1074.0 468.3L1074.1 468.0L1074.0 467.7L1073.9 467.3L1073.8 467.0L1073.6 466.7L1073.8 466.4L1073.8 466.0L1073.6 465.7L1073.4 465.5L1073.2 465.2L1073.2 464.8L1073.1 464.5L1073.2 464.1L1072.9 464.0L1072.7 463.6L1072.5 464.0L1072.4 464.6L1071.9 464.8L1071.8 465.4L1071.6 465.9L1071.2 466.2L1070.8 466.4L1070.4 466.8L1070.0 466.6L1069.5 466.8L1069.2 467.2L1068.7 467.5L1068.4 467.8L1067.9 468.0L1067.7 468.5L1067.2 468.7L1066.8 468.3L1066.3 468.2L1066.3 467.6L1066.0 467.1L1065.5 467.2L1065.1 467.1L1064.6 467.2L1064.1 467.1L1063.8 467.5L1063.7 468.1L1063.3 468.4L1062.8 468.5L1062.3 468.5L1061.9 468.3L1061.5 468.6L1061.0 468.7L1060.9 468.2L1061.0 467.8L1060.7 467.5L1060.7 467.1L1060.5 466.7L1060.3 466.3L1060.3 465.9L1060.3 465.5L1060.3 465.0L1060.4 464.6L1060.7 464.3L1060.8 463.9L1061.1 463.6L1061.3 463.2L1061.6 463.0L1061.7 462.6L1061.0 463.0L1060.4 463.5L1059.6 463.5L1058.8 463.2L1058.1 463.7L1057.3 463.7L1056.5 463.5L1055.8 463.0L1055.3 462.2L1054.5 462.1L1053.7 462.2L1052.9 462.4L1052.3 461.9L1051.5 462.0L1050.7 461.8L1050.0 461.6L1049.5 460.8L1048.8 460.2L1048.1 459.5L1047.2 459.4L1046.3 459.2L1045.6 458.4L1044.7 458.3L1043.8 458.7L1042.9 458.5L1042.2 459.1L1041.4 459.5L1040.8 460.3L1039.9 459.9L1039.0 460.2L1038.1 460.6ZM1002.6 468.7L1003.4 469.7L1004.0 470.9L1005.1 471.6L1006.3 471.9L1007.4 472.4L1008.6 472.3L1009.9 472.3L1010.8 473.2L1011.9 473.6L1012.9 473.2L1013.9 472.6L1014.9 472.5L1016.0 472.5L1017.1 472.1L1017.9 473.0L1019.1 473.2L1019.0 474.0L1019.0 474.8L1018.4 475.3L1018.1 476.1L1017.7 476.9L1017.0 477.2L1016.3 477.3L1015.6 477.6L1014.9 477.8L1014.2 477.5L1013.4 477.3L1013.0 476.6L1012.2 476.4L1011.5 476.5L1010.8 476.6L1010.1 476.2L1009.4 476.1L1008.7 476.3L1008.1 475.8L1007.5 475.6L1006.7 475.6L1006.1 475.1L1005.9 474.2L1005.3 473.7L1005.3 472.9L1005.4 472.1L1005.1 471.3L1004.7 470.7L1004.2 470.0L1003.8 469.4L1003.1 469.3ZM1001.9 437.6L1003.2 438.2L1004.7 437.8L1006.1 437.6L1007.2 436.5L1008.7 436.4L1009.9 437.2L1011.4 437.7L1012.2 439.2L1013.5 439.5L1014.8 440.2L1015.9 441.1L1017.1 441.9L1017.9 443.2L1019.2 443.9L1019.8 445.4L1021.1 446.0L1020.6 446.7L1019.9 446.9L1019.1 447.1L1018.4 447.0L1017.7 446.6L1017.0 446.6L1016.2 446.5L1015.6 446.0L1013.8 446.3L1012.0 445.7L1010.3 444.7L1009.0 443.0L1007.2 442.9L1005.7 441.8L1004.2 440.6L1002.6 439.7L1002.3 439.2L1002.1 438.7L1001.9 438.1ZM895.2 361.6L895.8 360.9L896.5 360.6L897.3 360.7L897.9 360.0L898.6 359.8L899.3 359.9L900.0 360.1L900.7 360.3L900.7 361.3L900.8 362.3L901.1 363.1L901.4 364.1L901.8 364.9L902.1 365.8L902.1 366.8L902.1 367.8L901.4 367.8L900.7 368.2L900.1 367.7L899.3 367.8L898.6 368.2L898.0 368.5L897.3 369.0L896.6 369.0L896.4 368.0L896.1 367.2L896.1 366.2L896.0 365.2L896.1 364.2L896.1 363.2L895.8 362.3ZM884.9 401.0L886.0 402.1L887.2 403.0L888.5 403.6L889.9 403.2L891.3 403.7L892.6 403.2L893.9 403.0L895.2 402.7L895.6 403.2L895.7 403.8L895.9 404.4L896.3 404.7L896.7 405.1L897.1 405.5L897.1 406.1L897.3 406.7L896.1 405.8L894.7 406.1L893.4 406.2L892.2 405.9L890.9 406.2L889.6 406.4L888.3 406.4L887.0 406.2L886.6 405.6L886.2 405.1L885.6 404.7L885.3 404.0L885.2 403.2L884.8 402.6L885.0 401.8ZM877.3 274.0L879.6 273.5L881.3 270.9L882.8 268.3L883.9 265.1L885.9 263.6L887.6 261.2L889.6 259.6L891.8 260.2L892.1 258.7L892.5 257.3L892.8 255.8L893.3 254.4L893.6 252.9L894.2 251.8L894.6 250.3L895.2 249.1L847.1 249.1L846.9 251.2L847.2 253.3L847.8 255.2L848.8 256.2L849.9 257.3L850.3 259.3L850.3 261.3L850.5 263.3L852.5 264.1L854.0 266.6L856.1 267.2L857.9 265.5L859.8 266.2L861.6 267.6L863.3 269.4L864.3 272.5L865.5 274.4L867.2 274.8L868.5 276.3L870.2 276.7L871.7 277.8L873.0 279.5L873.2 282.5L874.6 284.4L875.4 283.4L875.5 281.8L875.1 280.3L875.3 278.7L875.7 277.3L875.9 275.8L876.5 274.6ZM895.2 274.0L896.3 274.1L897.2 275.0L898.1 274.6L899.1 274.3L900.1 274.8L901.1 275.5L901.5 277.0L902.1 278.5L901.8 279.3L901.3 279.6L901.0 280.5L900.5 280.9L900.4 281.8L900.1 282.6L899.9 283.5L900.1 284.4L899.1 284.5L898.3 285.1L897.5 285.6L896.7 286.3L895.9 287.0L895.0 287.3L894.1 287.2L893.2 287.4L891.9 285.1L891.7 282.0L890.1 280.8L888.6 279.6L887.0 278.7L885.4 278.2L883.9 276.8L882.2 277.0L883.9 276.4L885.6 275.3L887.3 276.4L888.9 277.7L890.2 275.7L891.7 274.0L893.5 274.7ZM957.2 274.0L958.1 274.2L958.8 275.4L959.7 275.2L960.6 275.4L961.5 275.2L962.4 276.0L963.1 276.9L964.0 277.0L968.4 279.9L973.1 279.9L977.7 279.2L982.0 276.4L986.9 275.7L990.9 280.1L995.1 283.5L998.4 288.8L999.0 287.9L999.4 286.6L999.7 285.3L999.6 283.8L999.6 282.5L999.7 281.2L1000.0 279.9L999.8 278.5L998.1 277.9L996.6 276.4L996.0 273.5L994.6 271.7L992.9 271.8L991.1 272.1L989.7 270.5L988.1 269.4L986.2 269.5L984.4 269.8L982.6 268.8L980.7 268.4L978.9 267.6L977.5 265.3L975.7 263.9L974.4 261.7L973.3 257.5L971.8 253.8L969.5 251.5L966.9 250.6L964.4 251.5L961.9 251.7L959.7 249.2L957.2 249.1L929.6 249.1L931.4 249.6L933.1 249.9L934.7 251.3L936.5 251.5L938.2 251.8L940.0 251.0L941.8 250.5L943.4 252.3L945.4 254.7L946.5 258.4L947.9 261.7L949.7 264.4L952.0 265.6L954.3 267.2L955.8 270.5ZM902.8 644.2L903.7 644.4L904.6 644.4L905.5 644.4L906.3 644.9L907.1 644.6L907.9 644.2L908.7 643.7L909.7 643.8L909.6 644.2L909.4 644.5L909.3 644.9L909.3 645.3L908.8 645.8L908.0 646.0L907.2 646.0L906.4 645.9L905.6 645.7L904.9 646.1L904.2 645.9L903.5 645.7L903.1 645.4L902.9 645.0L902.9 644.6ZM911.7 642.6L912.2 643.1L912.9 643.4L913.5 643.7L913.8 644.3L914.5 644.6L915.0 645.1L915.4 645.6L915.9 646.1L916.0 646.6L916.1 647.1L915.8 647.6L915.9 648.1L915.8 648.7L915.3 649.0L915.1 649.5L914.8 649.9L914.8 649.4L914.5 649.1L914.5 648.6L914.3 648.1L914.0 647.8L913.7 647.4L913.6 646.9L913.5 646.5L913.1 646.1L912.6 645.7L912.4 645.1L911.8 644.8L911.7 644.3L911.7 643.7L911.8 643.2ZM906.9 656.4L907.2 656.8L907.5 657.1L907.9 657.4L908.4 657.5L909.0 657.5L909.4 657.3L909.9 657.4L910.4 657.5L910.3 658.4L910.8 659.2L910.4 660.0L910.2 660.8L910.1 661.6L910.4 662.4L910.4 663.3L911.1 664.0L910.7 663.6L910.5 663.1L910.0 662.8L909.4 662.8L909.0 662.4L908.6 662.1L908.0 662.0L907.6 661.7L907.8 661.0L908.4 660.4L908.6 659.7L908.3 659.0L907.6 658.4L907.1 657.9L907.2 657.1ZM912.1 656.4L914.2 656.8L913.1 657.3ZM917.6 653.7L918.3 653.9L918.8 654.3L919.4 654.4L920.1 654.3L920.5 654.7L921.1 655.0L921.4 655.5L921.7 656.0L921.6 656.4L921.4 656.8L921.4 657.2L921.7 657.6L921.7 657.9L921.5 658.3L921.5 658.7L921.4 659.1L921.2 658.7L921.0 658.4L920.8 658.1L920.4 657.8L920.4 657.5L920.2 657.1L920.0 656.8L920.0 656.4L919.7 656.0L919.5 655.7L919.3 655.3L919.1 654.9L918.6 654.7L918.1 654.5L917.8 654.2ZM924.5 659.4L927.6 663.6L926.5 663.2ZM867.7 673.0L869.1 672.9L870.6 673.0L871.9 673.5L873.3 673.4L874.7 672.7L876.3 672.8L877.2 671.8L878.0 670.7L879.4 670.4L880.7 670.8L881.9 671.3L883.2 671.4L884.5 671.0L885.6 670.3L887.1 670.1L888.4 670.7L889.9 671.0L890.9 672.0L892.4 672.3L893.9 671.9L894.9 672.8L895.8 673.8L897.4 673.7L898.7 674.5L899.3 675.1L899.6 676.0L899.6 676.8L899.2 677.6L899.8 678.2L900.6 678.8L901.2 679.3L902.1 679.7L864.3 679.7L865.2 679.1L865.5 678.1L865.9 677.2L866.0 676.3L866.6 675.5L867.5 674.9L867.9 674.0ZM1092.7 249.1L1093.0 251.2L1094.0 252.5L1094.2 254.6L1095.2 255.9L1096.1 257.2L1096.8 258.9L1097.9 259.8L1099.1 259.7L1099.6 261.5L1100.0 263.4L1099.6 265.4L1100.0 267.3L1099.3 269.0L1099.0 271.0L1099.2 273.0L1099.6 274.9L1100.0 275.6L1100.6 275.8L1101.2 276.3L1101.8 276.6L1102.4 276.8L1102.9 277.6L1103.1 278.7L1103.4 279.6L1103.4 280.7L1103.3 281.6L1103.6 282.6L1103.5 283.6L1103.6 284.7L1103.6 285.7L1103.8 286.8L1104.4 287.4L1104.6 288.2L1104.9 288.8L1105.2 289.5L1105.3 290.4L1105.9 290.6L1106.3 291.1L1106.8 291.2L1107.3 291.5L1107.7 292.1L1108.1 292.5L1108.1 293.4L1108.4 294.1L1108.6 294.9L1108.9 295.6L1109.3 296.0L1109.9 296.1L1110.4 296.1L1110.8 296.7L1111.1 297.3L1111.5 297.9L1111.8 298.5L1112.1 299.1L1112.3 299.9L1112.2 300.8L1112.7 300.7L1113.1 301.2L1113.4 301.9L1113.8 302.3L1114.3 302.4L1114.7 302.9L1115.0 303.4L1115.4 303.9L1116.3 303.8L1117.1 304.2L1117.8 305.0L1118.7 305.0L1118.8 306.5L1119.6 307.5L1120.4 307.9L1121.3 308.5L1122.1 307.8L1122.6 306.7L1123.6 306.6L1124.4 306.1L1124.9 307.5L1125.9 307.8L1126.8 307.1L1127.8 307.4L1128.1 308.1L1128.3 308.9L1128.8 309.0L1129.2 309.6L1129.7 309.7L1130.2 309.8L1130.6 310.1L1131.1 310.5L1131.6 310.8L1132.1 310.7L1132.4 311.4L1133.0 311.6L1133.3 312.4L1133.9 312.6L1133.9 313.5L1134.0 314.4L1134.6 314.0L1135.2 313.5L1135.9 313.3L1136.6 313.7L1137.2 314.4L1137.5 315.4L1138.3 315.1L1138.9 315.8L1139.6 315.6L1140.2 315.4L1140.9 315.4L1141.6 315.9L1142.2 316.1L1142.7 316.9L1143.4 317.5L1143.6 318.5L1144.0 318.0L1144.5 317.5L1145.1 317.4L1145.4 316.6L1145.5 315.7L1145.4 314.8L1145.7 314.0L1146.2 313.5L1146.8 313.4L1147.2 312.7L1147.8 312.9L1148.3 312.6L1148.8 312.2L1149.2 311.7L1149.6 311.1L1149.8 310.2L1150.0 309.4L1150.1 308.6L1150.4 307.8L1150.4 306.9L1151.0 307.0L1151.6 306.6L1151.9 305.8L1152.4 305.3L1152.1 304.6L1151.9 303.8L1152.0 303.0L1152.1 302.1L1152.3 301.3L1152.6 300.6L1152.6 299.8L1152.5 298.9L1152.7 298.2L1152.6 297.3L1152.7 296.5L1153.0 295.9L1152.9 295.1L1153.0 294.3L1153.3 293.6L1153.2 292.7L1153.5 292.0L1153.8 291.4L1154.4 291.3L1154.7 290.6L1154.8 289.7L1155.2 289.1L1155.1 288.2L1155.3 287.4L1155.2 286.4L1155.0 285.4L1155.4 284.7L1155.7 283.8L1156.1 283.0L1156.2 282.1L1156.3 281.1L1156.3 280.2L1156.8 279.7L1157.3 279.1L1157.6 278.4L1157.9 277.5L1158.2 276.8L1158.7 276.3L1159.1 275.7L1159.4 274.9L1160.0 273.1L1159.9 271.1L1160.7 269.7L1161.3 268.0L1162.4 267.7L1163.3 266.3L1164.3 265.4L1165.0 263.8L1164.6 261.8L1164.6 259.7L1165.1 257.8L1166.1 256.5L1165.7 254.6L1166.1 252.7L1166.3 250.7L1167.0 249.1ZM1394.7 282.9L1395.4 282.7L1396.0 282.1L1396.8 281.8L1397.5 282.3L1398.1 281.5L1398.8 281.5L1399.6 281.8L1400.2 282.2L1400.2 283.1L1400.5 283.9L1400.4 284.8L1400.3 285.6L1400.4 286.5L1400.3 287.4L1400.6 288.1L1400.9 288.8L1400.6 289.7L1400.1 290.3L1400.2 291.3L1399.9 292.2L1399.3 292.4L1398.8 293.0L1398.3 293.6L1398.2 294.6L1398.1 293.6L1397.6 292.8L1397.4 291.8L1397.5 290.7L1397.3 289.7L1396.9 289.0L1396.6 288.0L1396.1 287.4L1396.2 286.7L1396.0 286.1L1395.9 285.5L1395.8 284.8L1395.7 284.2L1395.3 283.7L1395.0 283.3ZM1434.6 308.8L1435.2 308.3L1435.9 308.1L1436.4 307.2L1437.0 306.7L1437.7 306.4L1438.2 305.4L1438.9 305.2L1439.4 304.6L1439.7 305.5L1439.8 306.4L1439.6 307.3L1439.3 308.2L1439.4 309.1L1439.7 309.8L1439.8 310.7L1439.8 311.6L1439.3 312.2L1438.9 312.9L1438.6 313.8L1438.5 314.7L1438.1 315.5L1437.9 316.4L1437.2 316.4L1436.7 317.1L1436.1 316.8L1436.0 316.4L1435.8 316.0L1435.5 315.3L1435.3 314.9L1435.3 314.4L1435.2 313.7L1435.1 313.0L1435.1 312.3L1435.1 311.6L1434.9 310.9L1434.8 310.2L1434.6 309.6ZM1422.2 328.0L1423.0 327.9L1423.6 327.1L1424.4 327.4L1425.1 327.2L1425.7 326.5L1426.5 326.4L1427.2 326.0L1427.7 325.3L1427.6 325.9L1427.7 326.6L1428.0 327.0L1428.2 327.6L1428.3 328.2L1428.4 328.8L1428.4 329.4L1428.4 330.0L1427.9 329.9L1427.3 330.1L1426.7 330.3L1426.4 331.0L1425.8 331.0L1425.2 331.1L1424.8 331.6L1424.3 332.0L1423.9 331.7L1423.6 331.2L1423.3 330.8L1423.0 330.3L1422.8 329.6L1422.9 328.9L1422.6 328.4ZM1395.4 338.6L1396.4 338.0L1397.4 338.3L1398.2 337.5L1399.3 337.6L1400.2 337.0L1401.2 337.2L1401.9 336.1L1403.0 335.9L1403.0 337.0L1402.5 337.7L1402.6 338.6L1402.9 339.5L1402.5 340.3L1402.5 341.2L1402.1 341.9L1401.6 342.5L1401.1 343.2L1400.4 343.6L1399.8 344.1L1399.1 344.2L1398.8 345.1L1398.1 345.7L1397.5 346.1L1396.8 346.4L1396.8 347.4L1396.6 348.5L1396.4 349.5L1395.8 350.2L1395.7 351.3L1395.2 352.1L1395.1 353.1L1394.7 354.0L1394.6 353.2L1394.5 352.3L1394.7 351.5L1394.9 350.7L1394.5 350.1L1394.2 349.3L1394.1 348.5L1394.0 347.6L1394.5 346.5L1394.4 345.2L1394.2 343.9L1393.8 342.8L1394.5 342.0L1394.8 340.8L1395.4 339.9ZM1399.5 348.3L1400.0 348.1L1400.5 348.2L1400.9 347.9L1401.4 348.0L1401.9 348.0L1402.4 348.0L1402.8 347.7L1403.3 347.6L1403.9 347.7L1404.5 348.1L1404.9 348.7L1405.1 349.5L1405.4 350.2L1405.9 350.7L1406.1 351.5L1406.4 352.1L1405.8 351.9L1405.2 352.2L1404.6 352.1L1404.0 352.3L1403.4 352.4L1402.9 353.1L1402.7 354.0L1402.3 354.7L1401.8 354.0L1401.6 353.0L1401.5 352.1L1401.2 351.2L1400.9 350.3L1400.3 349.8L1400.1 348.9ZM1401.3 369.0L1401.7 368.8L1402.1 369.1L1402.4 368.7L1402.8 368.7L1403.1 368.4L1403.6 368.3L1404.0 368.5L1404.4 368.4L1404.2 368.9L1404.1 369.5L1404.2 370.0L1404.3 370.6L1404.1 371.1L1403.9 371.5L1403.7 372.1L1403.7 372.6L1403.4 372.3L1403.1 372.0L1402.7 371.9L1402.4 371.7L1402.0 371.8L1401.7 372.0L1401.3 372.2L1400.9 372.0L1400.9 371.6L1400.8 371.3L1400.8 370.8L1400.9 370.5L1400.9 370.1L1400.9 369.6L1401.0 369.3ZM1412.6 387.0L1413.0 386.9L1413.4 386.8L1413.8 386.8L1414.2 386.8L1414.6 386.9L1415.0 386.7L1415.3 386.9L1415.7 387.0L1415.6 387.6L1415.4 388.1L1415.4 388.6L1415.5 389.1L1415.4 389.7L1415.4 390.2L1415.3 390.8L1415.0 391.2L1414.4 391.2L1413.8 391.5L1413.6 391.1L1413.2 391.0L1412.6 390.8L1412.7 390.4L1412.9 389.9L1412.7 389.4L1412.9 388.9L1412.8 388.4L1412.8 388.0L1412.8 387.5ZM1406.4 436.0L1407.0 436.0L1407.6 435.9L1408.2 435.8L1408.8 436.0L1409.4 436.4L1410.0 436.4L1410.6 436.3L1411.2 436.5L1411.7 436.3L1411.9 435.7L1412.4 435.7L1412.8 435.3L1413.3 435.1L1413.9 435.2L1414.3 435.5L1414.6 436.0L1414.7 435.5L1415.0 435.0L1415.5 434.9L1415.8 434.5L1416.0 434.0L1416.1 433.5L1416.3 433.0L1416.7 432.7L1417.1 432.8L1417.4 433.2L1417.7 433.0L1418.1 433.1L1418.3 433.5L1418.6 433.7L1418.8 434.0L1419.1 434.3L1419.2 433.9L1419.5 433.6L1419.8 433.3L1420.2 433.2L1420.5 433.3L1420.9 433.4L1421.2 433.5L1421.6 433.3L1421.9 433.1L1422.2 432.9L1422.2 432.5L1422.4 432.1L1422.9 431.7L1423.1 431.4L1423.2 431.0L1423.4 430.7L1423.4 430.2L1423.7 430.1L1423.9 429.8L1424.2 429.5L1424.4 429.2L1425.0 428.9L1425.6 429.1L1426.1 429.4L1426.7 429.5L1427.2 429.1L1427.7 429.5L1428.3 429.8L1428.3 430.6L1428.6 431.2L1429.2 431.2L1429.6 430.8L1430.1 430.4L1430.4 429.9L1431.0 429.9L1431.5 429.4L1432.1 429.6L1432.6 430.0L1433.0 429.8L1433.3 429.5L1433.6 429.1L1434.0 428.9L1434.4 429.2L1434.8 429.1L1435.3 429.0L1435.7 429.3L1435.8 428.8L1436.2 428.5L1436.7 428.4L1437.1 428.3L1437.6 428.3L1437.9 428.6L1438.3 428.5L1438.8 428.4L1439.3 428.9L1439.7 429.5L1440.3 429.7L1441.0 429.5L1441.6 429.6L1442.2 429.7L1442.6 430.4L1443.2 430.5L1443.8 430.2L1444.3 429.6L1444.9 429.3L1445.5 429.7L1446.1 429.3L1446.7 429.4L1447.2 428.8L1447.7 428.4L1447.9 428.0L1448.1 427.6L1448.4 427.3L1448.8 427.3L1449.2 427.3L1449.5 427.3L1449.9 427.6L1450.2 427.4L1450.5 427.1L1450.8 426.8L1451.1 426.4L1451.1 425.9L1451.4 425.6L1451.8 425.6L1452.1 425.7L1452.5 425.7L1452.8 425.3L1453.3 425.2L1453.6 425.0L1454.0 424.8L1454.2 424.3L1454.5 424.0L1454.8 423.6L1455.3 423.5L1454.8 423.2L1454.3 423.4L1453.9 423.0L1453.4 422.8L1453.1 422.3L1453.0 421.8L1452.8 421.2L1452.5 420.7L1452.1 420.8L1451.6 421.0L1451.2 420.8L1450.8 420.9L1450.3 420.7L1450.0 420.2L1449.5 420.0L1449.1 420.2L1449.3 419.5L1449.7 418.9L1450.2 418.7L1450.7 418.3L1451.2 417.9L1451.3 417.6L1451.4 417.2L1452.0 417.0L1452.5 416.8L1452.9 416.2L1453.0 415.5L1453.4 414.8L1454.0 414.7L1454.1 413.9L1454.2 413.2L1454.2 412.4L1453.8 411.8L1454.0 411.1L1454.1 410.3L1454.5 409.6L1455.1 409.5L1455.7 409.4L1456.2 409.3L1456.7 408.8L1457.3 409.0L1457.1 408.5L1457.2 408.0L1457.3 407.5L1457.7 407.2L1457.5 406.7L1457.1 406.6L1457.0 406.1L1456.9 405.6L1456.6 405.4L1456.2 405.2L1456.2 404.7L1455.9 404.4L1455.6 404.2L1455.3 403.9L1454.9 403.7L1454.6 403.9L1454.1 403.8L1453.6 403.9L1453.2 403.9L1452.7 403.7L1452.5 403.1L1452.1 402.7L1451.5 402.9L1451.1 402.6L1450.9 403.2L1450.5 403.7L1450.1 404.1L1449.7 404.4L1449.1 404.5L1448.7 405.0L1448.3 404.5L1447.7 404.5L1447.9 404.1L1448.0 403.7L1448.0 403.3L1447.9 402.9L1447.9 402.5L1447.7 402.2L1447.5 401.9L1447.3 401.6L1447.3 401.2L1447.0 400.9L1447.0 400.6L1447.0 400.2L1447.0 399.8L1446.8 399.5L1447.0 399.1L1447.0 398.7L1446.8 398.2L1446.8 397.6L1446.5 397.1L1446.3 396.6L1446.1 396.1L1445.8 395.7L1445.3 395.6L1444.9 395.2L1445.0 394.6L1445.3 394.0L1445.4 393.4L1445.0 392.8L1445.1 392.1L1444.9 391.5L1444.6 391.0L1444.3 390.6L1444.0 390.2L1444.0 389.8L1443.7 389.5L1443.5 389.2L1443.4 388.8L1443.3 388.4L1443.4 388.0L1443.5 387.6L1443.0 387.1L1442.8 386.8L1442.6 386.5L1442.0 386.5L1441.7 386.3L1441.5 385.9L1441.4 385.3L1441.0 384.9L1440.6 384.6L1440.1 384.7L1439.7 384.7L1439.3 385.0L1438.9 384.7L1438.5 384.6L1438.5 384.0L1438.4 383.5L1438.0 383.2L1437.8 382.6L1437.5 382.3L1437.3 381.9L1437.0 381.5L1436.7 381.1L1436.9 380.6L1436.9 380.1L1437.0 379.5L1436.8 379.0L1436.5 378.5L1436.6 378.0L1436.6 377.5L1436.7 377.0L1436.6 376.4L1436.6 375.8L1436.2 375.5L1436.1 374.9L1435.8 374.5L1435.4 374.2L1435.0 374.2L1434.6 373.9L1434.3 373.6L1434.2 373.2L1433.5 373.3L1433.4 372.9L1433.3 372.5L1432.8 371.9L1432.6 371.6L1432.5 371.2L1432.3 370.9L1432.2 370.5L1432.3 370.1L1432.1 369.7L1431.9 369.4L1431.9 369.0L1431.5 368.6L1431.0 368.6L1430.5 368.8L1430.1 369.1L1429.7 368.8L1429.2 368.8L1428.9 368.4L1428.4 368.3L1428.0 368.3L1427.6 368.7L1427.1 369.0L1426.7 368.8L1426.1 369.0L1425.6 368.8L1425.4 368.2L1425.0 367.8L1425.4 367.4L1425.7 366.8L1426.0 366.3L1426.5 366.1L1426.6 365.4L1427.1 365.0L1427.5 364.6L1427.7 364.0L1427.8 363.4L1427.7 362.7L1427.8 362.0L1428.0 361.4L1428.5 361.2L1428.8 360.7L1429.1 360.2L1429.4 359.6L1429.7 359.1L1429.8 358.4L1430.2 358.1L1430.5 357.7L1430.8 357.1L1430.8 356.5L1430.9 355.8L1431.2 355.3L1431.3 354.8L1431.2 354.4L1431.5 354.1L1431.6 353.6L1431.6 353.2L1431.6 352.7L1431.6 352.2L1431.9 351.9L1432.0 351.5L1432.2 351.1L1432.2 350.6L1432.4 350.3L1432.4 349.8L1432.6 349.3L1433.0 349.3L1433.3 348.9L1432.7 348.6L1432.3 347.9L1432.0 347.7L1431.9 347.3L1431.9 346.8L1431.9 346.4L1431.1 346.2L1430.3 345.8L1429.6 346.0L1428.8 346.3L1428.1 345.6L1427.4 345.1L1427.3 343.9L1426.7 343.0L1426.0 343.4L1425.5 344.2L1425.0 344.8L1424.3 345.1L1423.6 345.7L1423.1 346.6L1422.3 346.6L1421.6 346.4L1421.0 346.7L1420.5 347.2L1419.9 347.4L1419.4 346.9L1418.8 347.0L1418.3 347.3L1418.2 347.7L1418.0 348.0L1417.4 348.3L1417.7 347.5L1418.2 347.1L1418.8 347.1L1419.3 346.6L1420.0 346.3L1420.3 345.5L1420.5 344.6L1420.4 343.7L1420.6 342.8L1421.2 342.3L1421.8 342.4L1422.4 341.9L1422.5 341.0L1422.6 340.2L1423.0 339.5L1422.9 338.6L1423.0 337.8L1423.0 337.1L1423.2 336.3L1423.7 336.0L1423.8 335.3L1424.1 334.6L1424.5 334.2L1425.0 334.0L1424.1 334.4L1423.2 333.9L1422.3 334.5L1421.5 334.9L1420.8 336.0L1419.9 336.2L1418.9 336.2L1418.2 337.1L1417.5 336.1L1416.7 335.2L1415.7 334.6L1414.8 335.3L1413.8 335.7L1412.9 336.1L1412.2 335.1L1411.2 334.6L1411.5 335.3L1411.5 336.1L1411.2 336.6L1410.9 337.3L1410.4 337.5L1410.2 338.3L1410.2 339.0L1410.1 339.7L1409.7 340.2L1409.5 340.9L1409.7 341.6L1409.5 342.4L1409.0 342.4L1408.6 342.9L1408.1 343.1L1407.8 343.8L1407.8 344.3L1407.6 344.8L1407.5 345.3L1407.5 345.9L1407.6 346.4L1407.5 346.9L1407.5 347.5L1407.4 348.0L1407.2 348.5L1406.8 348.8L1406.7 349.4L1406.8 350.0L1406.5 350.2L1406.2 350.7L1406.0 351.1L1405.7 351.5L1406.0 352.0L1406.2 352.6L1406.0 353.2L1405.9 353.8L1406.3 354.1L1406.4 354.8L1406.8 355.2L1407.3 355.1L1407.1 355.5L1406.9 356.0L1407.0 356.6L1406.8 357.0L1406.5 357.4L1406.4 358.0L1406.5 358.5L1406.4 359.1L1406.2 359.7L1405.7 359.9L1405.2 360.0L1404.8 360.2L1404.3 360.0L1403.9 360.0L1403.4 360.2L1403.0 360.3L1403.3 360.7L1403.6 360.9L1404.0 361.1L1404.3 361.4L1404.7 361.3L1405.1 361.4L1405.4 361.8L1405.7 362.2L1406.0 362.6L1406.4 362.9L1406.8 362.8L1407.2 363.1L1407.3 363.8L1407.2 364.4L1407.5 364.8L1407.8 365.3L1407.5 365.9L1407.0 366.4L1406.8 367.1L1406.3 367.5L1406.0 368.2L1405.9 369.0L1405.8 369.8L1406.1 370.6L1406.4 371.2L1406.6 371.9L1407.0 372.5L1407.0 373.4L1406.9 374.1L1406.8 374.9L1406.7 375.6L1406.4 376.3L1406.8 376.3L1407.2 376.1L1407.6 376.1L1408.0 375.9L1408.4 375.8L1408.6 375.3L1409.1 375.3L1409.5 375.3L1409.9 375.2L1410.4 375.3L1410.8 375.2L1411.1 374.7L1411.1 374.1L1411.3 373.6L1411.5 373.0L1411.9 372.6L1412.2 372.2L1412.1 371.7L1412.2 371.3L1412.2 370.8L1412.4 370.4L1412.7 370.0L1412.8 369.5L1412.6 369.0L1413.0 369.6L1412.9 370.4L1412.5 371.0L1412.4 371.8L1412.4 372.5L1412.6 373.2L1412.8 373.8L1413.0 374.5L1413.0 375.2L1413.2 375.9L1412.9 376.5L1412.7 377.2L1412.9 377.9L1412.6 378.5L1412.5 379.2L1412.6 379.9L1412.5 380.5L1412.3 381.1L1412.2 381.7L1412.2 382.3L1411.8 382.6L1411.4 383.0L1410.9 383.0L1410.5 383.5L1411.2 383.7L1411.5 383.8L1411.8 384.0L1412.2 383.9L1412.5 383.7L1412.6 383.3L1413.0 383.1L1413.6 383.0L1414.2 383.3L1414.8 383.2L1415.4 383.5L1415.7 383.0L1416.1 382.7L1416.4 382.3L1416.5 381.6L1416.9 381.4L1417.4 381.6L1417.8 381.3L1418.3 381.5L1418.7 381.3L1419.1 381.0L1419.5 381.1L1419.9 381.1L1420.3 381.3L1420.7 381.0L1421.1 381.1L1421.6 381.1L1421.2 381.6L1421.1 382.3L1421.0 383.0L1421.2 383.7L1421.2 384.4L1421.5 384.9L1421.8 385.4L1422.2 385.9L1422.1 386.5L1421.9 387.2L1422.2 387.8L1422.3 388.6L1422.4 389.3L1422.9 389.6L1423.2 390.1L1423.6 390.6L1423.8 391.1L1423.7 391.8L1423.8 392.4L1424.2 392.8L1424.4 393.4L1424.7 393.8L1425.2 394.1L1425.7 394.1L1425.4 394.7L1424.9 394.9L1424.7 395.6L1424.4 396.1L1424.1 396.7L1424.2 397.4L1424.4 398.0L1424.3 398.7L1423.7 399.0L1423.2 398.6L1422.8 399.0L1422.2 399.3L1421.8 399.3L1421.4 399.0L1421.2 398.6L1420.8 398.3L1420.5 397.9L1420.0 397.8L1419.6 398.0L1419.2 398.2L1418.8 398.4L1418.4 398.5L1418.0 398.4L1417.6 398.3L1417.2 398.3L1416.8 398.3L1416.4 398.4L1416.1 398.7L1415.6 399.2L1415.1 399.5L1414.6 399.8L1414.0 399.9L1414.0 400.3L1413.9 400.6L1413.5 401.2L1413.9 401.8L1413.9 402.2L1414.0 402.5L1414.4 403.1L1414.3 403.5L1414.4 403.8L1414.9 404.1L1415.4 404.5L1414.8 404.4L1414.2 404.7L1413.7 405.0L1413.4 405.2L1413.3 405.6L1413.6 405.8L1413.9 406.1L1414.5 406.2L1414.8 406.5L1415.0 406.9L1415.1 407.3L1415.2 407.7L1415.8 407.7L1416.1 407.9L1416.3 408.4L1416.9 408.5L1417.1 408.9L1417.4 409.0L1417.0 409.6L1416.5 409.8L1416.1 410.4L1415.8 411.0L1415.2 411.3L1415.2 411.8L1415.0 412.1L1414.8 412.3L1414.7 412.7L1414.7 413.1L1414.7 413.5L1414.3 413.6L1413.9 413.8L1413.5 413.9L1413.2 414.2L1412.8 414.1L1412.4 414.3L1412.1 413.9L1411.7 413.7L1411.4 414.1L1411.2 414.5L1410.9 414.8L1410.7 415.2L1410.3 415.4L1409.9 415.5L1409.5 415.5L1409.2 415.7L1409.6 415.9L1409.9 416.2L1410.1 416.6L1410.3 417.0L1410.7 417.2L1411.0 417.6L1410.9 418.1L1411.2 418.5L1411.6 418.6L1412.0 418.9L1412.1 419.4L1412.4 419.7L1412.8 419.9L1413.2 419.6L1413.6 419.6L1413.9 419.9L1414.3 419.7L1414.7 419.6L1415.0 419.9L1415.4 420.1L1415.7 419.8L1416.0 419.5L1416.4 419.4L1416.7 419.1L1417.2 419.1L1417.6 419.5L1418.0 419.9L1418.5 419.7L1418.9 420.2L1419.1 420.7L1419.5 420.9L1420.0 421.2L1420.4 420.9L1420.9 421.0L1421.5 421.1L1421.8 421.7L1422.1 421.1L1422.6 421.0L1423.2 421.0L1423.6 421.3L1424.1 421.2L1424.6 421.0L1424.8 420.4L1425.2 420.1L1425.7 420.1L1426.2 420.3L1426.6 419.9L1427.1 419.6L1426.7 420.0L1426.3 420.4L1426.0 420.9L1425.6 421.2L1425.3 421.7L1425.4 422.4L1425.0 422.8L1425.0 423.5L1424.4 423.5L1423.9 422.9L1423.4 422.6L1422.8 422.8L1422.3 423.2L1421.9 423.7L1421.4 424.0L1420.9 424.4L1420.3 424.3L1419.9 423.8L1419.3 424.0L1418.8 424.1L1418.3 423.8L1417.7 424.1L1417.3 423.5L1416.7 423.5L1416.5 424.0L1416.1 424.4L1415.7 424.7L1415.2 424.9L1414.8 425.2L1414.3 425.6L1414.2 426.2L1414.0 426.8L1414.0 427.2L1413.9 427.7L1413.8 428.2L1413.7 428.6L1413.5 429.1L1413.7 429.6L1413.3 429.9L1413.3 430.4L1412.9 430.7L1412.4 430.6L1412.0 430.6L1411.6 430.6L1411.2 430.8L1410.9 431.2L1410.9 431.8L1410.5 432.2L1410.3 432.5L1410.1 432.9L1410.0 433.3L1410.1 433.8L1409.9 434.1L1409.6 434.5L1409.3 434.7L1409.1 435.0L1408.8 435.3L1408.4 435.5L1408.1 435.7L1407.9 436.1L1407.6 435.8L1407.2 436.0L1406.8 435.8ZM1401.6 412.4L1401.9 411.9L1401.9 411.2L1402.4 411.1L1402.8 410.8L1402.8 410.2L1403.1 409.7L1403.5 409.3L1403.9 409.0L1403.5 408.5L1403.2 408.0L1403.3 407.4L1403.0 406.8L1403.2 406.2L1403.4 405.6L1403.7 405.1L1403.7 404.5L1403.7 404.0L1403.9 403.7L1403.9 403.3L1403.7 402.9L1403.7 402.5L1404.0 402.2L1404.5 401.9L1404.0 401.5L1403.9 401.1L1403.7 400.8L1403.8 400.5L1403.9 400.1L1403.9 399.6L1403.7 399.3L1403.7 398.8L1403.9 398.3L1403.6 397.9L1403.7 397.4L1403.6 396.9L1403.7 396.4L1403.6 396.0L1403.7 395.5L1403.8 394.9L1403.6 394.4L1403.8 393.9L1404.0 393.4L1403.7 392.9L1403.3 392.8L1403.1 392.3L1403.0 391.7L1403.0 391.1L1403.4 390.7L1403.8 390.7L1404.2 390.3L1404.1 389.8L1404.3 389.3L1404.7 388.9L1404.8 388.4L1405.2 388.1L1405.6 388.0L1405.9 387.6L1406.2 387.2L1406.6 387.2L1407.0 387.5L1407.4 387.1L1407.8 387.0L1407.4 386.8L1406.9 386.6L1406.6 386.2L1406.5 385.5L1406.1 385.1L1406.1 384.5L1406.0 383.9L1405.7 383.5L1405.7 383.0L1405.8 382.6L1405.6 382.2L1405.4 381.8L1405.3 381.3L1405.4 380.9L1405.5 380.4L1405.5 380.0L1405.2 379.8L1404.8 379.9L1404.5 379.6L1404.3 379.2L1404.2 378.7L1404.2 378.2L1403.8 377.9L1403.7 377.5L1403.1 377.3L1402.6 377.3L1402.1 377.7L1401.5 377.5L1401.0 377.2L1400.6 376.6L1400.1 376.5L1399.6 376.0L1399.0 376.1L1398.5 375.7L1397.9 375.4L1397.6 374.6L1397.0 374.5L1396.3 374.6L1396.0 375.4L1395.4 375.7L1394.9 375.8L1394.4 376.1L1393.9 375.8L1393.4 376.0L1392.8 376.3L1392.5 376.9L1392.5 377.6L1392.2 378.3L1391.8 378.5L1391.3 378.4L1390.9 378.6L1390.4 378.6L1389.9 378.7L1389.5 378.2L1388.9 378.2L1388.5 378.7L1388.3 379.1L1388.1 379.6L1388.2 380.1L1388.2 380.7L1387.9 381.0L1387.5 381.1L1387.3 381.5L1387.1 382.0L1387.0 382.5L1387.0 383.0L1386.9 383.5L1387.0 384.0L1387.3 384.3L1387.4 384.9L1387.2 385.3L1387.2 385.9L1387.1 386.5L1387.0 387.2L1386.9 387.8L1386.5 388.2L1385.9 387.8L1385.3 387.6L1384.7 387.9L1384.1 387.4L1383.4 387.4L1382.8 387.5L1382.2 387.2L1381.6 387.3L1381.0 387.6L1380.4 387.3L1379.7 387.3L1379.1 387.6L1378.6 388.0L1378.0 388.3L1377.5 388.7L1376.8 388.8L1376.6 389.4L1376.7 390.1L1376.6 390.8L1376.9 391.4L1377.4 391.5L1377.8 392.0L1378.0 392.6L1378.2 393.2L1378.3 393.9L1378.0 394.4L1377.7 394.8L1377.7 395.5L1377.2 395.8L1377.1 396.4L1376.8 396.9L1376.8 397.6L1377.1 398.1L1377.5 398.5L1377.7 399.1L1378.1 399.5L1378.6 399.7L1379.0 400.0L1379.5 400.0L1380.0 400.3L1380.5 400.2L1380.9 400.3L1381.4 400.2L1381.9 400.2L1382.4 400.5L1382.9 400.4L1383.2 400.9L1383.7 401.0L1383.3 401.0L1383.1 401.4L1382.7 401.6L1382.4 401.9L1382.3 402.4L1382.5 402.9L1382.4 403.4L1382.2 403.8L1381.8 403.9L1381.5 404.0L1381.2 403.9L1380.8 403.8L1380.5 404.0L1380.2 404.1L1379.9 404.2L1379.6 404.5L1379.9 404.8L1380.1 405.2L1380.2 405.7L1380.1 406.2L1379.8 406.5L1379.8 407.0L1379.7 407.4L1379.5 407.9L1379.3 408.2L1379.2 408.7L1378.8 408.8L1378.4 408.9L1378.3 409.3L1377.9 409.4L1377.8 409.8L1377.5 410.1L1377.1 410.6L1376.8 411.1L1376.3 411.4L1375.8 411.9L1375.2 411.8L1375.0 412.2L1374.8 412.4L1374.7 412.7L1374.6 413.1L1374.1 413.5L1374.3 414.1L1374.8 414.4L1374.9 415.1L1374.8 415.7L1374.8 416.4L1374.8 417.0L1375.2 417.4L1375.5 418.0L1375.7 418.3L1376.1 418.3L1376.3 418.6L1376.5 418.9L1376.8 419.0L1377.2 419.2L1377.5 419.1L1377.8 418.8L1378.4 419.0L1378.4 419.5L1378.7 419.7L1379.3 420.0L1379.5 420.3L1379.6 420.7L1380.0 420.1L1380.7 420.0L1380.9 419.3L1381.5 418.9L1382.2 418.5L1382.4 417.6L1383.1 417.3L1383.7 417.6L1384.2 418.2L1385.0 418.2L1385.6 418.3L1386.3 418.6L1386.9 418.4L1387.5 418.0L1388.0 417.4L1388.5 416.8L1389.2 417.1L1389.9 416.8L1390.5 416.4L1391.0 415.9L1391.4 415.1L1392.0 414.7L1392.2 413.9L1392.5 413.1L1393.3 413.3L1393.8 412.7L1394.3 412.0L1395.0 411.7L1395.7 411.5L1396.4 411.7L1397.1 412.1L1397.5 412.9L1398.0 413.0L1398.5 412.8L1399.1 412.6L1399.6 412.9L1400.1 412.8L1400.6 412.6L1401.1 412.7ZM1493.8 395.2L1493.0 395.1L1492.3 395.4L1491.6 395.5L1490.9 394.9L1490.2 394.4L1489.5 394.5L1488.7 394.7L1488.0 395.0L1487.6 395.8L1486.8 396.0L1486.1 396.6L1485.3 396.4L1484.8 397.1L1484.3 397.8L1483.8 398.6L1483.0 398.7L1482.6 399.0L1482.1 398.9L1481.7 399.0L1481.4 399.5L1481.2 400.0L1481.1 400.6L1480.7 400.9L1480.6 401.4L1480.1 401.5L1479.7 401.5L1479.3 401.7L1479.0 402.1L1478.8 402.7L1478.8 403.3L1478.4 403.6L1478.0 403.9L1478.1 404.7L1477.8 405.4L1477.7 406.2L1477.4 406.9L1477.6 407.7L1477.5 408.5L1477.2 409.2L1476.7 409.8L1476.2 410.3L1475.6 410.6L1475.4 411.4L1475.3 412.2L1474.7 412.5L1474.3 413.2L1474.2 413.9L1473.8 414.6L1473.4 414.8L1473.1 415.3L1472.6 415.5L1472.3 415.9L1472.1 416.5L1472.4 417.1L1472.3 417.7L1472.0 418.2L1471.5 418.2L1471.2 418.6L1471.1 419.2L1470.7 419.5L1470.4 420.0L1470.1 420.3L1470.0 420.9L1469.7 421.3L1469.2 421.4L1468.7 421.3L1468.2 421.5L1467.7 421.8L1467.4 422.4L1466.9 422.7L1466.8 423.3L1466.6 423.9L1466.2 424.4L1465.7 424.4L1465.2 424.5L1464.8 424.9L1464.3 424.7L1463.8 424.6L1463.3 424.8L1462.8 424.6L1462.4 424.8L1462.0 424.8L1461.7 425.2L1461.3 425.3L1461.1 425.8L1460.7 426.0L1460.2 426.1L1459.9 426.4L1459.5 426.3L1459.1 426.4L1458.7 426.6L1458.3 426.5L1457.9 426.2L1457.4 426.3L1457.0 426.4L1456.6 426.8L1456.6 427.2L1456.6 427.7L1456.6 428.2L1456.6 428.7L1456.7 429.1L1456.6 429.6L1456.7 430.1L1456.7 430.6L1456.5 431.0L1456.4 431.5L1456.3 432.1L1456.0 432.4L1456.0 433.0L1456.4 433.4L1456.4 433.9L1456.6 434.3L1456.0 434.7L1455.4 435.2L1455.2 436.0L1454.6 436.6L1453.9 436.7L1453.2 436.7L1452.5 436.6L1451.8 437.0L1451.2 437.4L1450.5 437.5L1450.2 438.3L1449.6 438.8L1448.8 439.0L1448.4 439.7L1447.7 439.5L1447.0 439.7L1447.2 440.0L1447.1 440.4L1446.8 440.7L1446.8 441.1L1446.6 441.3L1446.5 441.7L1446.4 442.0L1446.3 442.3L1445.8 442.4L1445.2 442.7L1444.6 442.6L1444.1 442.8L1443.8 443.4L1443.3 443.8L1442.7 443.9L1442.3 444.5L1441.7 444.6L1441.1 444.2L1440.8 443.6L1440.4 443.0L1439.8 443.1L1439.2 443.0L1438.6 443.0L1438.1 443.4L1437.7 443.0L1437.4 442.7L1437.1 442.2L1437.2 441.6L1437.2 441.1L1437.3 440.5L1436.8 440.2L1436.7 439.7L1436.2 440.1L1435.6 440.0L1435.3 440.3L1435.2 440.6L1434.6 440.8L1434.1 440.5L1433.6 440.2L1433.0 440.1L1432.6 439.7L1432.2 440.4L1432.2 441.2L1432.3 442.0L1432.6 442.7L1432.8 443.5L1432.8 444.3L1432.2 444.8L1432.0 445.7L1432.7 446.0L1432.9 446.8L1432.8 447.6L1433.2 448.3L1433.1 449.1L1433.5 449.8L1434.1 450.3L1434.6 450.7L1434.2 451.2L1433.6 451.2L1433.1 451.5L1432.6 451.4L1432.0 451.4L1431.5 451.4L1431.0 451.8L1430.6 452.1L1430.0 452.0L1429.5 451.5L1429.0 451.8L1428.4 451.8L1427.9 452.0L1427.3 452.0L1426.7 451.8L1426.4 451.3L1426.1 450.9L1425.9 450.5L1425.8 450.0L1425.4 449.7L1425.0 449.7L1424.6 449.5L1424.2 449.4L1423.8 449.4L1423.5 449.1L1423.1 449.1L1422.7 449.4L1422.3 449.3L1422.1 448.9L1421.7 448.7L1421.3 448.5L1420.9 448.7L1420.5 449.2L1420.0 449.5L1419.6 450.0L1419.1 450.3L1418.6 450.6L1418.1 451.0L1417.8 451.6L1417.3 452.0L1416.7 452.1L1416.1 451.8L1415.5 451.7L1414.9 451.7L1414.3 452.0L1413.8 452.3L1413.3 452.7L1413.0 453.3L1413.2 453.7L1413.5 453.9L1413.6 454.4L1413.5 454.8L1413.7 455.2L1413.6 455.6L1413.7 456.0L1413.8 456.4L1414.1 456.7L1414.4 456.8L1414.7 457.1L1414.8 457.6L1415.0 457.9L1415.1 458.2L1415.2 458.6L1415.4 459.0L1415.9 459.2L1416.3 459.5L1416.9 459.3L1417.4 459.5L1417.8 460.0L1417.8 460.6L1418.3 460.9L1418.5 461.5L1419.0 461.4L1419.4 461.0L1419.8 460.7L1420.3 460.8L1420.7 460.3L1421.3 460.3L1421.7 460.6L1422.2 460.5L1422.6 461.0L1422.9 461.5L1423.0 462.0L1423.1 462.6L1423.7 462.8L1424.0 463.3L1424.5 463.1L1425.1 463.2L1425.5 463.6L1426.1 463.6L1426.1 464.2L1426.5 464.7L1427.0 464.7L1427.5 465.1L1428.0 465.1L1428.4 464.6L1428.8 464.7L1429.2 464.9L1429.4 465.3L1429.7 465.6L1430.1 465.5L1430.4 465.4L1430.8 465.7L1431.2 465.6L1431.1 466.0L1431.2 466.3L1431.2 466.6L1431.2 466.9L1431.2 467.3L1431.1 467.6L1431.1 467.9L1431.0 468.2L1431.1 468.6L1431.2 468.9L1431.1 469.3L1431.1 469.6L1431.6 470.0L1431.6 470.4L1431.9 470.7L1432.3 470.9L1432.4 471.5L1432.8 471.9L1433.0 472.3L1433.3 472.7L1433.8 472.8L1434.2 472.9L1434.7 473.1L1435.2 473.3L1435.5 473.8L1436.0 474.0L1436.5 473.7L1436.5 474.3L1436.7 474.8L1437.2 475.1L1437.4 475.7L1437.3 476.1L1437.1 476.4L1437.2 476.8L1437.4 477.2L1437.3 477.6L1437.2 477.9L1437.2 478.3L1437.5 478.7L1437.8 478.9L1438.0 479.3L1438.1 479.7L1438.0 480.1L1438.0 480.5L1437.8 480.9L1438.0 481.2L1438.1 481.6L1438.4 482.2L1438.9 482.7L1439.2 483.3L1439.6 483.8L1439.6 484.5L1439.6 485.2L1439.6 486.0L1439.4 486.6L1439.3 487.4L1439.8 488.1L1439.5 488.8L1439.1 489.3L1438.6 490.0L1437.9 490.0L1437.5 490.6L1437.4 491.3L1437.2 492.1L1437.5 492.8L1437.3 493.4L1437.0 494.1L1437.1 494.9L1437.7 495.4L1437.4 496.1L1437.2 496.8L1437.7 497.5L1437.7 498.3L1437.2 498.9L1437.0 499.7L1436.3 499.8L1435.9 500.5L1435.6 501.2L1435.3 501.9L1435.0 501.9L1434.7 502.2L1434.4 501.9L1434.1 501.9L1433.6 502.2L1433.4 502.5L1433.3 502.8L1432.7 503.1L1432.2 503.0L1431.7 503.2L1431.1 503.3L1430.6 503.0L1430.3 502.4L1429.7 502.2L1429.1 502.4L1428.6 502.3L1428.1 502.6L1427.6 502.4L1427.1 502.6L1426.5 502.8L1426.0 502.4L1425.5 502.7L1425.0 502.8L1424.6 502.8L1424.3 502.5L1424.0 502.4L1423.6 502.5L1423.2 502.5L1423.0 502.2L1422.7 501.9L1422.3 501.8L1422.1 501.5L1421.7 501.3L1421.3 501.2L1420.9 501.4L1420.6 501.7L1420.3 501.9L1419.9 501.9L1419.5 501.9L1418.6 501.6L1417.7 501.2L1417.2 500.4L1416.6 499.6L1415.7 499.5L1414.7 499.3L1414.1 500.1L1413.0 500.2L1412.3 500.7L1411.5 501.0L1410.6 500.9L1409.8 500.8L1408.9 501.0L1408.1 501.2L1407.3 500.7L1406.4 500.9L1405.8 500.8L1405.2 500.5L1404.7 500.1L1404.3 499.5L1403.7 499.7L1403.0 499.5L1402.4 499.8L1401.9 500.2L1401.4 500.4L1400.9 500.8L1400.3 501.0L1399.7 500.7L1399.2 500.9L1398.6 501.0L1398.0 501.0L1397.5 500.9L1397.1 500.8L1396.7 501.0L1396.3 500.9L1395.9 500.7L1395.6 500.9L1395.3 501.2L1394.9 501.2L1394.5 501.3L1394.2 501.0L1393.8 500.8L1393.4 500.7L1393.0 500.8L1392.8 500.4L1392.7 500.0L1392.2 499.9L1392.0 499.5L1391.3 500.0L1391.1 500.8L1391.0 501.6L1390.5 502.3L1389.8 502.4L1389.2 502.9L1388.6 503.5L1388.0 504.0L1387.3 504.1L1386.5 504.1L1385.9 504.6L1385.3 505.0L1384.4 505.0L1383.8 504.3L1383.2 504.8L1382.3 504.7L1382.3 505.1L1382.1 505.5L1382.2 505.9L1382.5 506.2L1382.3 506.6L1382.1 506.9L1381.8 507.2L1381.7 507.5L1381.6 508.2L1381.7 508.8L1381.3 509.2L1381.1 509.8L1381.1 510.4L1381.1 510.9L1381.3 511.5L1381.6 512.0L1382.1 512.4L1382.3 512.9L1382.8 513.1L1383.0 513.7L1383.2 514.3L1383.7 514.6L1384.2 514.8L1384.7 515.0L1385.3 515.3L1385.9 515.5L1386.1 516.2L1386.6 516.7L1386.7 517.3L1387.0 517.9L1386.7 518.5L1386.9 519.2L1386.7 519.8L1386.7 520.4L1386.9 521.0L1387.0 521.7L1386.8 522.2L1386.7 522.9L1386.3 523.3L1385.8 523.7L1385.9 524.3L1385.9 524.9L1385.5 525.4L1385.7 526.0L1385.3 526.4L1385.1 526.9L1385.2 527.5L1384.8 528.0L1385.0 528.6L1385.4 529.1L1385.5 529.7L1385.5 530.3L1385.0 530.7L1384.5 531.1L1384.2 531.7L1384.4 532.4L1384.1 532.9L1383.8 533.3L1383.5 533.9L1383.3 534.4L1382.9 534.8L1382.3 534.9L1381.7 535.1L1381.4 535.6L1381.3 536.1L1381.0 536.7L1381.2 537.2L1381.2 537.8L1381.4 538.3L1381.6 538.9L1381.1 539.3L1381.0 540.0L1381.0 540.3L1381.2 540.6L1381.1 541.0L1381.1 541.3L1381.3 541.7L1381.3 542.0L1381.3 542.4L1381.3 542.7L1381.0 543.0L1380.9 543.4L1380.5 543.4L1380.2 543.8L1380.2 544.2L1380.5 544.5L1380.5 544.9L1380.3 545.3L1380.8 545.6L1381.4 545.5L1381.7 545.6L1381.8 545.9L1382.3 546.2L1382.6 546.5L1382.9 546.9L1383.0 547.4L1383.3 547.8L1383.6 548.2L1384.1 548.4L1384.6 548.6L1385.1 548.4L1385.0 548.9L1385.0 549.4L1385.2 550.0L1385.6 550.3L1385.4 550.8L1385.2 551.3L1384.9 551.8L1385.0 552.0L1385.1 552.3L1384.6 552.7L1384.1 553.2L1384.3 553.8L1384.1 554.5L1384.5 555.0L1384.5 555.6L1384.6 556.2L1385.2 556.6L1385.0 557.1L1384.8 557.6L1384.5 558.0L1384.5 558.6L1384.2 559.0L1384.1 559.6L1384.1 560.1L1383.7 560.5L1384.2 560.5L1384.6 560.6L1385.0 560.7L1385.4 560.7L1385.9 560.8L1386.3 560.7L1386.7 560.6L1387.2 560.4L1387.6 560.5L1388.0 560.3L1388.5 560.4L1388.9 560.2L1389.3 560.0L1389.8 560.1L1390.1 560.4L1390.6 560.5L1390.7 560.2L1391.0 560.1L1391.7 559.9L1392.3 560.0L1392.9 560.2L1393.2 560.0L1393.2 559.7L1393.8 559.4L1394.4 559.3L1394.7 559.1L1394.7 558.8L1395.1 559.1L1395.6 559.1L1396.0 559.2L1396.4 559.2L1396.9 559.2L1397.4 559.2L1397.8 559.0L1398.2 558.8L1398.5 559.0L1398.9 559.0L1399.1 559.3L1399.2 559.6L1399.5 559.8L1399.9 559.9L1400.0 560.2L1400.2 560.5L1400.3 560.8L1400.6 561.0L1400.8 561.3L1400.8 561.7L1401.1 561.8L1401.3 562.1L1401.3 562.4L1401.6 562.7L1401.7 563.0L1401.6 563.4L1401.6 563.7L1401.9 564.0L1402.2 564.2L1402.6 564.2L1402.7 564.6L1403.0 564.8L1403.3 565.1L1403.5 565.6L1403.9 565.6L1404.4 565.8L1404.8 565.9L1405.2 566.2L1405.6 566.1L1406.1 566.1L1406.1 566.5L1406.0 566.9L1405.8 567.4L1405.9 567.8L1406.3 568.0L1406.6 568.3L1406.7 568.8L1407.1 569.1L1407.2 568.7L1407.5 568.5L1408.1 568.4L1408.3 568.1L1408.5 567.9L1409.2 567.8L1409.6 567.6L1410.0 567.2L1410.4 566.8L1410.4 566.3L1410.7 565.9L1411.2 565.7L1411.6 565.3L1411.8 564.9L1412.3 564.8L1412.7 564.5L1413.2 564.2L1413.7 564.3L1414.1 564.0L1414.4 563.6L1415.0 563.5L1415.4 563.1L1416.0 563.2L1416.7 563.3L1417.4 563.4L1417.9 563.8L1418.3 563.3L1419.0 563.1L1419.7 563.1L1420.2 562.6L1420.8 562.4L1421.3 561.9L1421.9 561.9L1422.6 562.0L1423.0 562.6L1423.7 562.8L1424.3 563.0L1425.0 562.7L1425.3 562.5L1425.7 562.6L1426.1 562.8L1426.4 563.0L1426.7 563.1L1427.0 563.4L1427.4 563.2L1427.7 563.1L1428.1 563.1L1428.4 562.9L1428.8 562.8L1429.1 562.9L1429.5 562.8L1429.8 562.6L1430.1 562.7L1430.5 562.7L1431.0 562.5L1431.1 562.0L1431.3 561.6L1431.5 561.2L1431.5 560.7L1431.3 560.2L1431.5 559.7L1431.9 559.4L1432.2 559.1L1432.4 558.6L1432.7 558.3L1433.1 558.1L1433.4 557.7L1433.7 557.3L1434.1 557.2L1434.6 557.1L1435.1 557.1L1435.5 556.8L1435.9 556.9L1436.3 557.1L1436.7 557.3L1437.1 557.1L1437.5 556.9L1437.9 556.9L1438.3 556.8L1438.6 556.5L1439.0 556.3L1439.4 556.1L1439.8 556.0L1440.0 555.6L1440.4 555.3L1440.8 555.4L1441.3 555.1L1441.4 554.7L1441.8 554.4L1442.0 554.0L1441.8 553.5L1441.9 553.0L1442.3 552.7L1442.7 552.3L1442.3 552.0L1442.1 551.6L1442.0 551.1L1441.9 550.6L1442.1 550.2L1442.3 549.7L1442.3 549.3L1442.2 548.8L1442.5 548.5L1442.9 548.3L1443.3 548.1L1443.5 547.7L1443.8 547.4L1444.0 547.0L1444.1 546.5L1443.9 546.1L1444.3 546.0L1444.7 546.2L1445.1 546.1L1445.5 545.9L1445.8 545.6L1446.2 545.3L1446.6 545.4L1447.0 545.3L1446.6 545.1L1446.1 545.1L1445.6 545.0L1445.3 544.6L1445.2 544.1L1444.8 543.8L1444.7 543.3L1444.3 543.0L1443.9 542.7L1443.7 542.3L1443.7 541.8L1443.6 541.3L1443.5 540.9L1443.6 540.4L1443.7 540.0L1443.6 539.5L1444.2 539.6L1444.6 539.2L1444.9 538.7L1445.3 538.3L1445.3 537.7L1445.5 537.1L1445.8 536.6L1446.5 536.5L1446.4 536.0L1446.6 535.4L1446.6 534.8L1446.2 534.4L1446.7 534.0L1447.0 533.5L1446.9 532.9L1447.0 532.4L1447.2 531.8L1447.6 531.6L1447.8 531.1L1447.8 530.5L1447.7 530.0L1448.0 529.6L1448.2 529.1L1448.3 528.7L1448.7 528.3L1449.1 528.1L1449.6 527.9L1450.0 527.6L1450.3 527.1L1450.8 527.1L1451.3 527.0L1451.8 526.9L1452.0 526.5L1452.3 526.1L1452.3 525.6L1452.3 525.2L1452.8 525.2L1453.3 524.9L1453.7 524.6L1453.9 524.2L1454.3 523.8L1454.8 523.8L1455.1 523.4L1455.6 523.3L1456.1 523.2L1456.5 523.0L1457.1 522.9L1457.5 523.3L1457.8 522.8L1457.8 522.2L1458.2 521.8L1458.8 521.7L1459.2 522.0L1459.8 522.0L1460.4 521.9L1460.8 521.5L1461.3 521.3L1461.8 521.0L1462.4 521.2L1462.9 521.0L1463.5 520.9L1464.0 520.8L1464.5 520.5L1465.1 520.6L1465.3 520.1L1465.6 519.6L1465.8 519.0L1466.3 518.7L1466.3 518.0L1466.8 517.6L1467.2 517.2L1467.7 516.8L1467.6 516.5L1467.6 516.2L1467.6 515.9L1467.7 515.6L1467.5 515.3L1467.4 515.0L1467.3 514.7L1467.0 514.5L1467.0 514.2L1466.9 513.9L1466.9 513.6L1466.9 513.2L1467.1 512.9L1467.3 512.8L1467.4 512.4L1467.7 512.2L1467.3 512.0L1466.8 512.0L1466.7 511.5L1466.3 511.3L1466.3 511.0L1466.6 510.7L1466.8 510.5L1466.9 510.2L1467.0 509.9L1466.9 509.5L1466.9 509.2L1466.7 508.9L1466.7 508.6L1466.5 508.4L1466.5 508.1L1466.5 507.8L1466.4 507.5L1466.5 507.2L1466.4 506.9L1466.3 506.6L1466.8 506.3L1467.2 505.9L1467.5 505.3L1467.5 505.0L1467.7 504.8L1468.3 504.5L1468.5 504.3L1468.6 503.9L1469.1 503.9L1469.7 503.8L1470.3 503.7L1470.8 503.5L1471.3 503.4L1471.9 503.3L1472.3 502.9L1472.8 502.6L1472.7 502.3L1472.9 501.9L1473.1 501.7L1473.2 501.4L1473.4 501.0L1473.9 501.0L1474.3 500.8L1474.7 501.0L1475.0 501.2L1475.4 501.3L1475.8 501.3L1476.2 501.2L1476.6 501.5L1476.8 501.9L1476.9 502.3L1477.2 502.6L1477.6 502.7L1478.0 502.8L1478.4 502.9L1478.7 503.3L1479.3 503.3L1479.8 503.1L1480.4 503.4L1481.0 503.5L1481.4 503.9L1481.9 504.2L1482.5 504.3L1483.0 504.7L1483.7 505.0L1484.5 504.8L1485.0 504.1L1485.8 503.9L1486.4 504.1L1487.2 504.3L1487.9 504.5L1488.4 505.1L1489.2 505.2L1489.8 504.7L1490.5 505.0L1491.1 505.4L1491.7 505.9L1492.4 505.9L1493.0 505.5L1493.8 505.7ZM1493.8 249.1L1493.8 342.5L1492.9 341.7L1492.1 340.9L1491.3 340.0L1490.9 338.6L1489.9 339.2L1488.9 339.6L1487.8 339.3L1486.9 338.6L1486.3 337.8L1486.0 336.7L1485.4 335.8L1485.1 334.7L1484.5 333.8L1484.4 332.5L1484.1 331.4L1483.5 330.6L1483.0 329.8L1482.3 329.2L1482.2 328.0L1481.8 327.0L1481.8 325.9L1481.8 324.8L1481.7 323.6L1481.4 322.6L1481.7 320.9L1482.5 319.6L1482.5 317.9L1482.6 316.2L1482.8 314.4L1482.3 312.7L1481.7 311.2L1480.7 310.2L1480.2 308.9L1479.3 308.5L1479.1 307.1L1478.9 305.7L1479.2 304.3L1478.8 303.0L1479.0 301.6L1479.3 300.4L1479.7 298.5L1480.2 296.8L1480.7 295.0L1481.5 293.6L1481.5 291.6L1481.3 289.7L1480.9 287.8L1480.7 285.9L1481.2 285.3L1481.7 285.0L1482.2 284.7L1482.7 284.2L1482.8 283.2L1483.3 282.6L1483.8 282.1L1484.2 281.5L1484.9 281.0L1485.4 279.9L1485.9 279.0L1486.7 278.8L1487.1 277.7L1487.8 277.1L1488.3 276.1L1489.0 275.5L1489.7 275.3L1490.3 274.6L1490.7 273.6L1491.3 272.8L1492.0 272.7L1492.6 272.1L1493.2 271.6L1493.8 270.9ZM1461.8 537.7L1462.6 537.5L1463.3 537.0L1463.6 536.3L1464.1 535.6L1464.9 535.5L1465.7 535.6L1466.5 535.4L1467.0 534.6L1467.3 534.8L1467.5 535.2L1467.7 535.6L1467.9 536.0L1468.4 536.0L1468.8 536.2L1469.0 536.6L1469.4 536.8L1469.1 537.4L1468.7 537.8L1468.2 538.2L1467.6 538.3L1467.2 538.8L1466.7 539.2L1466.6 539.8L1466.6 540.4L1466.2 540.3L1465.8 540.1L1465.5 539.7L1465.1 539.5L1464.6 539.5L1464.2 539.3L1463.8 539.0L1463.5 538.6L1463.1 538.5L1462.6 538.2L1462.1 538.1ZM1471.8 533.7L1472.2 533.9L1472.6 534.2L1473.0 534.3L1473.5 534.1L1473.9 534.4L1474.4 534.2L1474.8 534.5L1475.2 534.6L1475.1 534.9L1474.9 535.2L1474.8 535.5L1474.5 535.8L1474.3 535.5L1473.9 535.4L1473.6 535.4L1473.3 535.2L1472.9 535.1L1472.5 535.2L1472.2 535.1L1471.9 534.9L1472.0 534.6L1471.9 534.3L1471.8 534.0ZM1453.9 543.1L1454.2 542.9L1454.5 542.7L1454.9 542.6L1455.2 542.5L1455.6 542.4L1456.0 542.5L1456.3 542.4L1456.6 542.2L1456.5 542.4L1456.2 542.7L1456.3 543.0L1456.1 543.2L1456.1 543.6L1456.2 543.8L1456.2 544.1L1456.3 544.4L1455.8 544.2L1455.3 544.1L1454.7 544.2L1454.2 544.4L1454.0 544.1L1453.9 543.8L1453.8 543.4ZM1405.0 570.8L1405.6 570.5L1405.8 570.2L1405.8 569.9L1406.4 569.9L1406.9 569.6L1407.5 569.6L1408.1 569.6L1408.6 569.7L1409.2 569.9L1409.7 570.3L1410.4 570.2L1410.8 570.6L1411.2 571.0L1411.9 571.1L1412.5 571.3L1412.6 572.0L1413.1 572.4L1413.7 572.7L1414.4 572.8L1414.6 573.4L1414.9 574.0L1414.8 574.6L1415.1 575.2L1415.3 575.7L1415.4 576.3L1416.0 576.2L1416.6 576.5L1417.2 576.7L1417.8 577.0L1418.3 576.6L1419.0 576.4L1419.6 576.4L1420.3 576.4L1420.7 575.9L1421.1 575.4L1421.8 575.2L1422.3 574.8L1423.1 574.7L1423.6 575.2L1424.3 575.0L1425.0 575.0L1425.2 575.4L1425.5 575.5L1425.7 575.9L1426.1 576.1L1426.4 576.3L1426.8 576.2L1427.2 576.1L1427.6 576.2L1428.0 576.3L1428.4 576.3L1428.6 576.7L1429.0 576.9L1429.4 577.0L1429.7 576.7L1430.1 576.9L1430.5 576.7L1430.9 576.2L1431.5 576.0L1432.1 575.9L1432.6 575.4L1433.0 575.0L1433.6 574.9L1434.0 574.4L1434.6 574.2L1435.0 573.7L1435.7 573.5L1436.3 573.4L1436.6 572.9L1437.0 572.3L1437.6 572.0L1438.2 572.0L1438.8 571.6L1439.1 571.8L1439.5 571.9L1439.9 571.8L1440.2 572.0L1440.6 571.9L1440.9 571.6L1441.2 571.4L1441.5 571.2L1441.8 571.0L1442.2 571.1L1442.5 570.9L1442.8 570.8L1443.2 570.8L1443.5 570.7L1443.9 570.7L1444.2 570.8L1444.6 570.6L1444.7 570.3L1444.8 569.9L1445.0 569.6L1445.3 569.5L1445.7 569.5L1445.9 569.2L1446.3 569.1L1446.4 568.4L1446.6 567.8L1447.0 567.3L1447.3 566.7L1447.9 566.5L1448.5 566.2L1449.0 565.8L1449.5 565.3L1450.1 565.6L1450.8 565.7L1451.4 565.6L1452.1 565.5L1452.8 565.3L1453.2 564.8L1453.9 564.7L1454.6 564.8L1455.2 564.3L1455.5 563.5L1455.7 562.7L1456.4 562.2L1457.2 562.0L1457.9 561.7L1458.8 561.7L1459.6 561.6L1460.1 562.3L1460.9 562.6L1461.7 562.7L1462.5 562.5L1463.3 562.8L1464.1 562.5L1464.8 562.3L1465.6 562.3L1466.1 562.4L1466.6 562.2L1467.0 562.0L1467.5 562.1L1468.0 562.2L1468.4 562.5L1468.9 562.3L1469.4 562.3L1470.0 562.2L1470.4 562.5L1470.9 562.3L1471.5 562.5L1472.0 562.6L1472.5 562.3L1473.0 562.0L1473.2 561.4L1473.7 561.3L1474.1 561.1L1474.7 561.2L1475.1 561.4L1475.6 561.7L1475.8 562.1L1476.3 562.3L1476.5 562.8L1476.9 562.9L1477.4 562.9L1477.9 562.8L1478.2 562.4L1478.7 562.2L1479.1 562.2L1479.6 562.4L1480.0 562.3L1480.4 562.3L1480.8 562.4L1481.1 562.6L1481.5 562.6L1481.9 562.7L1482.2 562.9L1482.6 562.9L1483.0 563.1L1483.9 563.2L1484.5 562.7L1485.2 563.2L1486.1 563.2L1486.4 562.5L1486.9 561.9L1487.6 561.6L1488.2 561.0L1488.9 561.2L1489.7 561.2L1490.4 561.6L1490.9 562.1L1491.7 562.0L1492.5 562.1L1493.0 561.6L1493.8 561.4L1493.8 679.7L1331.4 679.7L1331.8 678.9L1331.4 678.1L1331.0 677.4L1330.8 676.7L1331.7 676.4L1332.4 675.7L1332.8 675.0L1333.1 674.3L1333.7 673.8L1334.0 673.1L1334.5 672.5L1334.6 671.8L1334.1 671.0L1334.4 670.2L1334.9 669.6L1335.6 669.1L1335.5 668.7L1335.6 668.3L1335.9 668.0L1336.2 667.7L1335.9 667.4L1336.0 667.0L1336.0 666.6L1336.2 666.2L1336.5 665.8L1336.9 665.5L1337.1 665.1L1337.3 664.6L1337.4 664.2L1337.3 663.7L1337.3 663.3L1337.0 662.9L1337.3 662.5L1337.5 662.1L1338.0 661.8L1338.5 661.6L1338.9 661.3L1339.4 661.3L1339.9 661.0L1340.4 661.0L1340.6 660.7L1340.6 660.4L1340.8 660.1L1340.8 659.8L1340.8 659.6L1341.0 659.3L1340.9 659.0L1341.1 658.7L1341.3 658.5L1341.6 658.3L1341.8 658.1L1342.0 657.8L1342.2 657.6L1342.5 657.5L1342.9 657.4L1343.1 657.2L1343.3 656.5L1343.0 656.0L1343.5 655.5L1343.9 655.0L1343.6 654.5L1343.4 653.9L1343.6 653.4L1343.6 652.8L1343.5 652.1L1343.8 651.6L1343.9 651.0L1343.7 650.3L1344.2 649.9L1344.8 649.6L1345.5 649.4L1345.9 648.8L1346.3 648.4L1346.4 647.8L1346.8 647.4L1347.4 647.3L1348.0 647.0L1348.6 647.0L1349.1 647.2L1349.7 647.2L1349.9 646.7L1349.8 646.2L1350.2 645.9L1350.6 645.5L1350.8 645.1L1351.0 644.6L1351.7 644.6L1352.1 644.2L1352.3 643.7L1352.3 643.5L1352.2 643.2L1352.1 643.0L1352.1 642.7L1352.4 642.3L1352.5 641.9L1352.7 641.4L1353.1 641.1L1353.4 640.7L1353.5 640.3L1353.7 639.9L1353.7 639.4L1354.0 639.0L1353.9 638.6L1354.2 638.2L1354.0 637.7L1354.3 637.3L1354.6 637.0L1354.8 636.5L1355.2 636.2L1355.7 636.1L1356.0 635.7L1356.1 635.2L1356.3 634.8L1356.7 634.6L1357.2 634.1L1357.5 633.5L1358.3 633.4L1359.0 633.4L1359.3 632.8L1360.0 632.6L1360.7 632.6L1361.3 632.3L1361.9 632.1L1362.6 632.1L1363.3 632.4L1363.9 632.2L1364.6 631.9L1365.1 631.5L1365.9 631.5L1366.5 631.8L1366.8 631.6L1367.0 631.3L1367.3 631.1L1367.6 631.0L1367.8 630.7L1368.1 630.5L1368.5 630.5L1368.8 630.3L1369.1 630.0L1369.1 629.7L1369.2 629.4L1369.6 629.1L1369.5 628.8L1369.1 628.6L1369.4 628.2L1369.3 627.8L1369.7 627.5L1370.1 627.2L1370.6 627.0L1371.2 627.0L1371.7 626.9L1372.2 627.2L1372.7 627.0L1373.3 627.0L1373.7 626.7L1374.3 626.6L1374.6 626.2L1375.0 625.8L1374.8 625.3L1374.9 624.8L1375.1 624.3L1375.5 623.9L1375.7 623.5L1375.7 623.0L1376.1 622.7L1376.3 622.3L1376.6 621.9L1376.5 621.4L1376.7 621.1L1376.9 620.6L1376.9 620.1L1376.6 619.6L1377.2 619.3L1377.3 618.8L1377.7 618.5L1378.0 618.0L1378.5 617.9L1378.9 617.6L1379.0 617.3L1379.2 617.0L1379.4 616.7L1379.3 616.4L1379.2 616.1L1379.3 615.8L1379.5 615.5L1379.6 615.2L1379.2 615.2L1378.9 615.0L1378.7 614.6L1378.3 614.5L1378.0 614.2L1377.9 613.9L1377.7 613.5L1377.9 613.2L1377.8 612.7L1378.0 612.3L1378.0 611.8L1378.2 611.4L1377.9 611.0L1377.5 610.7L1377.2 610.2L1377.3 609.7L1377.7 609.4L1378.0 609.0L1378.1 608.6L1378.4 608.2L1378.5 607.7L1378.7 607.2L1378.5 606.8L1378.2 606.4L1378.4 605.9L1378.6 605.4L1378.5 604.9L1378.5 604.5L1379.2 604.4L1379.6 604.1L1379.6 603.5L1380.0 603.1L1380.4 602.8L1380.5 602.3L1380.9 601.9L1381.0 601.4L1381.3 601.1L1381.5 600.7L1381.8 600.3L1382.0 599.9L1382.5 599.4L1382.9 598.8L1383.0 598.2L1383.1 597.5L1383.4 596.9L1383.4 596.2L1383.1 595.6L1382.7 595.0L1383.1 594.4L1383.6 593.9L1384.2 593.5L1384.4 592.8L1385.1 592.7L1385.8 592.5L1386.4 592.1L1387.2 592.1L1387.6 591.9L1387.9 591.5L1387.8 591.0L1388.1 590.6L1388.5 590.3L1388.8 589.9L1389.3 589.7L1389.8 589.9L1390.3 589.9L1390.8 590.0L1391.1 589.6L1391.6 589.4L1392.1 589.4L1392.4 589.0L1392.9 589.0L1393.3 589.2L1393.9 589.3L1394.4 589.2L1394.9 589.3L1395.3 589.6L1395.9 589.5L1396.2 589.1L1396.5 588.7L1396.9 588.4L1397.3 588.2L1397.8 587.9L1397.8 587.5L1398.3 587.2L1398.4 586.7L1398.2 586.2L1398.5 585.8L1398.9 585.5L1399.6 585.3L1399.9 584.7L1400.0 584.1L1400.3 583.5L1400.4 582.9L1401.0 582.5L1401.2 581.8L1400.9 581.2L1401.3 580.7L1401.2 580.1L1401.5 579.5L1401.4 578.9L1401.8 578.4L1402.0 577.9L1402.2 577.3L1402.3 576.7L1402.6 576.4L1403.1 576.3L1403.3 575.8L1403.4 575.4L1403.5 575.0L1403.6 574.5L1404.0 574.3L1404.5 574.1L1404.1 573.7L1404.2 573.2L1404.1 572.8L1404.1 572.3L1404.2 571.9L1404.4 571.5L1404.7 571.1ZM1267.8 553.6L1268.1 553.4L1268.4 553.2L1268.6 552.9L1269.0 552.7L1269.4 552.7L1269.6 552.5L1270.0 552.6L1270.3 552.6L1271.0 552.7L1271.3 552.8L1271.6 552.9L1271.8 553.2L1272.0 553.4L1272.6 553.6L1272.3 553.9L1271.9 554.0L1271.6 554.4L1271.2 554.5L1270.5 554.4L1270.0 554.2L1269.3 554.1L1268.8 554.3L1268.3 553.9ZM1257.5 545.5L1257.6 545.1L1258.0 544.8L1258.6 544.8L1259.1 545.0L1259.4 545.2L1259.5 545.5L1259.1 545.8L1258.9 546.3L1258.4 546.0L1257.9 546.1L1257.7 545.8ZM1249.2 547.8L1249.7 547.5L1250.1 547.0L1250.5 546.9L1251.0 547.0L1251.5 547.3L1252.0 547.2L1252.3 547.5L1252.7 547.8L1252.4 548.0L1252.2 548.3L1251.6 548.5L1251.1 548.4L1250.8 548.1L1250.3 548.2L1249.9 548.3L1249.5 548.1ZM1251.6 546.2L1251.9 545.9L1252.1 545.7L1252.7 545.9L1253.3 545.8L1253.7 546.2L1253.5 546.5L1253.1 546.6L1252.6 546.5L1252.0 546.5ZM1247.4 546.8L1247.6 546.5L1247.8 546.3L1248.2 546.3L1248.7 546.4L1249.0 546.8L1248.9 547.1L1248.5 547.3L1248.1 547.1L1247.7 547.2ZM1230.4 539.1L1230.7 538.8L1230.7 538.4L1231.3 538.5L1231.4 538.8L1231.5 539.1L1231.3 539.4L1231.2 539.8L1230.6 539.6L1230.6 539.3ZM1272.4 560.8L1272.7 560.4L1273.3 560.5L1273.5 560.8L1273.2 561.2L1272.6 561.1ZM1327.0 596.2L1327.1 595.9L1327.4 595.7L1327.6 595.5L1328.0 595.4L1328.6 595.5L1329.1 595.4L1329.7 595.3L1330.3 595.5L1330.8 595.7L1331.1 596.2L1330.8 596.4L1330.5 596.6L1330.2 596.8L1329.8 597.0L1329.3 597.1L1328.8 596.9L1328.3 597.0L1327.8 596.9L1327.3 596.6ZM1332.9 593.6L1333.1 593.2L1333.5 593.3L1333.7 593.6L1333.4 593.9L1333.0 593.8ZM1350.2 625.9L1350.4 625.4L1350.2 625.0L1350.7 624.7L1351.0 624.3L1351.4 624.2L1351.8 624.3L1352.2 624.4L1352.6 624.6L1352.9 624.9L1353.0 625.2L1353.2 625.5L1353.2 625.9L1353.3 626.3L1353.0 626.8L1352.7 627.1L1352.3 627.4L1351.9 627.4L1351.6 627.2L1351.2 627.3L1350.8 627.1L1350.5 626.9L1350.4 626.6L1350.2 626.2ZM1347.6 631.0L1347.7 630.6L1347.8 630.2L1348.0 629.9L1348.4 629.7L1348.6 629.3L1348.5 629.0L1348.5 628.6L1348.5 628.2L1349.0 628.3L1349.5 628.3L1349.9 628.5L1350.3 628.8L1350.4 629.1L1350.3 629.4L1350.5 629.6L1350.8 629.9L1350.8 630.2L1351.1 630.4L1351.0 630.7L1351.0 631.0L1351.0 631.3L1350.9 631.7L1350.8 632.0L1350.6 632.4L1350.3 632.6L1350.1 633.0L1350.2 633.4L1350.0 633.7L1349.6 633.6L1349.2 633.3L1348.8 633.1L1348.3 633.2L1348.3 632.9L1348.1 632.6L1348.0 632.4L1347.9 632.1L1347.7 631.8L1347.6 631.6L1347.7 631.3ZM1336.6 634.5L1336.8 634.0L1337.0 633.6L1336.9 633.3L1337.1 633.1L1337.4 632.8L1337.9 632.8L1338.4 632.8L1338.9 632.9L1339.3 633.1L1339.6 633.4L1339.9 633.7L1339.9 634.1L1340.0 634.5L1339.8 634.7L1339.8 635.0L1339.3 635.2L1339.1 635.5L1338.9 635.7L1338.9 635.9L1339.0 636.2L1338.6 636.1L1338.2 635.9L1337.7 635.9L1337.3 635.9L1337.0 635.6L1336.9 635.2L1336.7 634.8ZM1329.0 631.8L1329.2 631.3L1329.6 631.0L1330.0 630.6L1330.2 630.2L1330.5 630.4L1330.8 630.5L1331.5 630.5L1331.9 630.5L1332.2 630.3L1332.5 630.4L1332.9 630.5L1333.2 630.8L1333.3 631.2L1333.5 631.5L1333.8 631.8L1333.3 632.0L1332.9 632.4L1332.6 632.5L1332.4 632.8L1332.5 633.0L1332.4 633.3L1331.8 633.1L1331.5 632.9L1331.3 632.8L1330.6 632.7L1330.3 632.9L1330.0 633.0L1329.7 632.6L1329.7 632.2L1329.5 631.9ZM1321.9 628.6L1322.1 628.2L1322.1 627.8L1322.4 627.5L1322.4 627.1L1322.9 627.3L1323.4 627.4L1323.5 627.7L1323.4 628.0L1323.5 628.4L1323.7 628.6L1323.4 628.9L1323.3 629.4L1323.1 629.8L1323.2 630.2L1322.7 630.1L1322.3 629.9L1322.1 629.6L1321.9 629.3L1322.0 629.0ZM1326.3 633.2L1326.4 632.7L1326.7 632.4L1327.2 632.3L1327.6 632.5L1327.9 632.8L1327.9 633.2L1327.5 633.5L1327.4 633.9L1327.0 633.8L1326.6 633.8L1326.4 633.5ZM1321.0 636.0L1321.2 635.7L1321.4 635.4L1321.8 635.4L1322.3 635.5L1322.4 635.8L1322.6 636.0L1322.5 636.4L1322.1 636.7L1321.7 636.6L1321.3 636.5L1321.2 636.2ZM999.5 599.9L999.8 599.5L1000.2 599.6L1000.6 599.5L1000.8 599.9L1000.4 600.3L1000.1 600.2L999.7 600.2Z" fill="#f0f0f0" stroke="#a2a2a2" stroke-width="0.9" stroke-linejoin="round"/><path d="M811.3 470.7L816.1 467.6L823.0 461.1L829.9 457.5L835.4 453.3L838.8 448.1L847.1 449.7L851.9 450.2L856.0 458.0L861.5 458.5L862.9 467.6L863.9 472.7L860.8 474.7L847.1 475.7L836.8 472.7L840.2 467.6L829.9 472.7L823.7 473.7L816.1 471.7ZM840.9 506.6L842.9 518.7L847.1 520.1L851.2 515.9L853.3 508.5L851.9 499.0L853.3 490.4L858.1 486.5L862.2 480.6L862.2 477.6L854.0 477.1L847.1 479.6L842.3 485.5L839.5 492.3L842.9 494.2L841.6 499.0ZM862.9 478.6L867.0 475.7L870.5 476.2L878.0 476.2L883.5 477.6L889.7 478.6L895.2 487.5L896.6 489.4L894.5 492.3L889.0 490.9L886.3 485.0L883.5 494.2L883.5 502.8L879.4 506.6L876.0 500.9L874.6 497.1L871.2 499.0L869.1 500.0L867.7 497.1L871.8 493.3L871.8 486.5L866.3 482.1ZM870.5 519.6L873.9 515.5L874.9 512.7L878.4 509.4L878.7 513.1L882.9 513.1L887.0 509.9L893.9 508.5L902.1 507.8L903.5 509.4L896.6 514.5L891.1 517.3L883.5 521.5L876.0 521.9ZM901.8 504.1L896.6 503.8L899.4 500.4L909.0 497.6L915.9 498.1L920.0 495.2L922.1 500.9L917.3 504.7L910.4 505.2L902.8 504.7ZM764.5 392.9L766.6 393.5L768.6 394.3L770.7 394.0L772.8 394.1L773.6 397.4L775.1 400.2L776.9 402.7L778.3 405.6L779.0 409.4L780.7 412.8L781.6 416.5L782.4 420.2L782.9 423.2L782.8 426.2L783.0 429.3L782.4 432.2L781.5 432.2L780.6 432.1L779.7 431.8L779.0 431.1L778.7 428.1L777.9 425.1L776.9 422.2L776.9 419.1L775.2 415.9L772.9 413.4L770.7 410.7L768.0 409.0L766.5 405.3L766.1 401.1L765.5 396.9ZM753.5 403.3L755.1 403.6L756.6 404.0L758.1 404.5L759.7 404.5L760.0 407.4L760.9 410.0L761.2 412.9L761.1 415.7L759.9 416.6L758.6 417.2L757.5 418.3L756.3 419.1L755.6 415.0L756.2 410.9L755.5 406.8ZM765.2 423.5L766.6 424.4L768.0 424.9L769.4 425.7L770.7 426.8L770.8 428.7L771.1 430.6L770.9 432.5L771.4 434.3L770.4 433.8L769.4 433.1L768.4 432.5L767.3 432.2L767.1 429.9L766.5 427.8L765.6 425.7ZM834.0 433.3L835.6 433.4L837.0 434.3L838.6 434.5L840.2 434.3L840.4 436.5L841.0 438.6L840.9 440.7L840.9 442.9L839.8 443.6L838.5 443.9L837.3 444.2L836.1 443.9L836.0 441.2L835.2 438.6L834.5 436.0ZM678.5 325.3L682.9 327.2L687.4 325.9L691.8 324.5L695.7 321.2L700.1 321.6L704.5 320.2L708.8 321.4L712.9 323.9L708.7 325.7L704.5 327.6L700.1 326.8L695.7 328.0L692.8 331.5L689.2 332.8L685.5 333.5L682.0 334.6L681.3 332.1L680.2 330.0L679.2 327.8ZM642.1 298.9L644.2 300.1L646.5 300.2L648.7 301.4L651.0 301.8L654.5 300.7L658.1 300.0L661.2 297.1L664.8 296.1L667.9 292.4L671.6 290.1L675.2 287.8L678.5 284.4L681.9 282.1L685.5 281.1L688.7 278.1L692.3 277.0L689.8 275.1L687.3 274.1L684.6 273.3L682.0 274.0L678.4 275.5L674.8 276.2L671.2 278.0L668.2 281.5L665.0 284.3L661.5 285.5L658.1 287.7L654.4 287.4L651.9 288.2L649.3 288.7L646.7 288.4L644.1 288.8L643.6 291.4L643.3 294.0L642.6 296.4ZM734.9 338.6L737.9 338.7L740.8 337.9L743.6 339.8L746.6 339.9L746.6 343.9L745.4 347.6L744.6 351.4L744.6 355.3L743.1 356.6L741.5 357.9L739.8 358.8L738.4 360.3L738.0 357.7L737.3 355.1L736.3 352.8L735.6 350.2L735.1 347.4L735.1 344.4L734.8 341.5ZM933.8 422.4L935.8 422.3L937.9 422.6L939.9 423.6L942.0 423.5L941.6 425.5L940.5 427.1L940.0 429.1L940.0 431.1L938.6 431.2L937.2 431.4L935.8 431.6L934.5 431.1L934.3 428.9L933.8 426.8L934.1 424.6ZM792.0 439.7L793.3 439.6L794.5 440.1L795.6 440.5L796.9 440.8L796.5 442.7L796.7 444.6L795.8 446.2L795.5 448.1L794.4 447.5L793.1 447.4L791.9 447.2L790.7 447.1L791.0 445.2L791.5 443.4L791.5 441.5ZM946.8 449.2L948.1 449.9L949.5 450.2L950.9 450.6L952.3 450.2L952.1 451.0L952.1 451.8L951.8 452.5L951.7 453.3L950.8 453.3L949.9 453.4L949.1 453.4L948.2 453.3L948.2 452.2L947.8 451.1L947.4 450.1ZM375.1 317.1L377.8 318.5L380.6 319.5L383.2 321.3L386.1 321.2L385.1 322.0L384.4 323.4L383.5 324.1L382.7 325.3L380.4 324.1L378.4 322.5L376.1 321.2L373.7 321.2L374.3 320.5L374.7 319.4L375.0 318.3ZM957.8 382.3L958.6 382.0L959.4 381.6L960.1 380.9L960.9 380.9L962.5 379.7L964.4 379.7L966.0 380.7L967.8 381.1L968.5 381.4L969.2 381.0L969.8 381.5L970.2 382.3L969.2 382.5L968.5 383.4L967.5 384.1L966.5 383.7L964.9 383.2L963.4 384.3L961.8 384.3L960.3 383.4L959.7 383.3L959.0 383.1L958.6 382.4ZM936.5 379.9L937.0 379.6L937.2 379.0L937.7 378.7L938.2 378.7L939.2 378.8L940.1 379.0L941.1 379.1L942.0 378.9L942.4 379.1L942.7 379.5L943.1 379.5L943.4 379.9L942.8 380.2L942.2 380.1L941.8 380.7L941.3 381.1L940.5 381.2L939.6 380.9L938.7 381.2L937.9 380.9L937.5 380.7L937.1 380.5L936.8 380.3ZM1003.3 389.4L1003.8 389.3L1004.2 389.0L1004.5 388.3L1005.0 388.0L1005.8 387.0L1006.9 387.2L1007.9 387.5L1008.8 388.3L1009.2 388.4L1009.4 388.9L1009.9 389.0L1010.1 389.4L1009.8 390.1L1009.3 390.5L1008.7 391.0L1008.1 390.8L1007.2 390.8L1006.4 390.5L1005.5 391.0L1004.6 390.5L1004.2 390.5L1003.9 390.1L1003.5 389.9ZM919.3 396.4L919.9 396.3L920.4 396.0L921.0 395.5L921.0 394.7L922.0 395.1L922.9 395.8L923.9 395.6L924.8 395.0L925.0 395.6L925.5 395.8L925.9 395.9L926.2 396.4L925.7 396.9L925.3 397.5L924.7 397.8L924.1 398.1L923.3 397.8L922.5 397.3L921.6 397.8L920.7 397.8L920.5 397.2L920.2 396.8L919.7 396.6ZM971.9 425.7L972.2 424.5L973.0 424.0L972.7 422.9L972.8 421.8L973.3 421.6L973.8 421.9L974.3 422.2L974.7 422.6L974.7 423.5L975.2 424.1L975.3 424.9L975.4 425.7L975.0 426.6L975.0 427.6L974.5 428.4L974.4 429.5L974.1 429.0L973.5 428.9L973.1 428.8L972.6 428.7L972.6 427.9L972.2 427.2L972.3 426.4ZM922.1 426.8L922.4 426.5L922.6 426.2L922.9 425.8L923.1 425.5L923.6 425.9L924.2 425.8L924.8 426.1L925.4 425.7L925.6 426.0L925.6 426.4L926.2 426.8L925.8 426.9L925.5 427.3L925.4 427.8L925.0 428.1L924.4 428.0L923.9 428.1L923.4 427.7L922.9 427.8L922.3 427.5L922.1 427.2ZM738.4 301.8L739.2 301.1L739.6 299.7L740.2 298.6L741.1 298.2L742.6 298.6L744.2 298.4L745.7 298.1L747.2 298.9L747.8 299.5L748.4 300.1L748.7 301.2L749.4 301.8L748.8 303.1L747.8 303.7L747.1 305.1L746.1 305.3L744.7 306.0L743.2 306.6L741.9 305.5L740.6 304.6L740.3 303.5L739.7 302.7L739.1 302.2ZM769.3 297.5L769.7 296.6L769.9 295.7L770.4 294.8L771.1 294.6L772.0 295.0L772.9 295.7L773.9 295.5L774.8 295.2L774.9 296.1L775.4 296.6L775.9 296.9L776.2 297.5L775.7 298.3L775.2 299.0L774.8 299.9L774.1 300.4L773.2 300.2L772.4 300.7L771.5 300.5L770.7 299.8L770.1 299.7L769.7 299.1L769.7 298.2ZM696.4 343.8L696.6 343.0L696.8 342.2L697.4 341.9L697.8 341.2L698.5 340.7L699.4 340.6L700.1 341.2L700.8 341.7L701.3 341.9L701.7 342.4L701.7 343.1L701.9 343.8L701.3 344.1L700.7 344.6L700.3 345.4L700.3 346.4L699.6 346.0L698.9 345.4L698.2 345.3L697.5 345.8L697.1 345.5L696.7 345.1L696.7 344.4ZM634.5 330.6L634.8 330.2L635.2 330.1L635.5 329.7L635.5 329.0L636.1 328.9L636.6 329.5L637.2 329.3L637.8 329.4L638.2 330.0L638.6 330.6L638.2 330.7L637.8 331.2L637.5 331.6L637.4 332.2L636.9 332.7L636.3 332.6L635.8 332.4L635.3 331.9L635.3 331.4L635.1 331.1ZM818.2 426.8L818.7 426.7L819.2 426.4L819.5 425.9L819.9 425.5L820.9 425.4L821.8 426.2L822.7 426.0L823.7 425.7L823.8 426.3L824.3 426.5L824.7 426.4L825.1 426.8L824.7 427.3L824.1 427.6L823.6 428.0L823.0 428.1L822.1 427.9L821.3 428.4L820.3 428.5L819.6 427.8L819.2 427.7L818.8 427.4L818.5 427.1ZM807.9 433.3L808.2 432.8L808.7 432.6L809.1 432.3L809.2 431.6L810.1 431.6L810.8 431.0L811.4 431.7L812.3 432.0L812.5 432.4L812.7 432.8L812.9 433.2L813.4 433.3L813.0 433.7L812.7 434.3L812.3 434.8L811.7 434.9L811.0 434.9L810.3 434.7L809.7 434.5L809.0 434.6L808.6 434.3L808.3 434.1L807.9 433.8ZM587.7 388.2L588.0 387.8L588.3 387.5L588.7 387.4L589.1 387.3L589.9 387.5L590.6 388.2L591.4 388.0L592.1 387.5L592.7 387.7L593.2 388.2L592.7 388.4L592.3 388.3L591.8 388.7L591.6 389.2L590.9 388.9L590.2 389.1L589.5 389.3L588.8 389.0L588.2 388.7ZM577.7 381.1L578.1 381.0L578.3 380.7L578.6 380.3L578.9 380.3L579.6 380.3L580.3 379.9L580.9 380.4L581.6 380.4L582.0 381.0L582.5 381.1L582.1 381.2L581.7 381.3L581.5 381.8L581.1 381.9L580.5 382.4L579.9 382.5L579.4 381.9L578.7 381.8L578.2 381.3ZM889.7 459.5L889.9 458.8L889.8 458.1L890.2 457.6L890.4 457.0L890.8 457.2L891.1 457.4L891.5 457.3L891.9 457.5L891.9 458.0L891.8 458.6L892.3 458.9L892.5 459.5L892.3 460.3L891.7 460.7L891.9 461.4L891.7 462.1L891.4 461.7L891.1 461.5L890.7 461.4L890.3 461.6L890.3 461.0L890.3 460.4L890.1 460.0ZM896.3 474.7L896.7 474.7L897.0 474.4L897.2 474.1L897.5 473.9L898.1 473.6L898.8 473.7L899.4 474.0L900.1 474.0L900.6 474.4L901.1 474.7L900.7 474.9L900.4 475.2L900.0 475.4L899.6 475.5L899.0 475.3L898.4 475.7L897.7 475.8L897.2 475.3L896.7 475.0ZM373.7 330.6L373.9 329.8L374.4 329.3L374.9 329.0L375.5 329.0L376.3 329.9L377.3 330.4L378.2 329.7L379.2 329.4L379.3 330.1L379.7 330.4L380.2 330.6L380.6 330.6L380.0 331.0L379.7 331.8L379.1 331.9L378.5 332.2L377.9 331.1L376.9 330.9L375.9 331.1L375.1 331.9L374.7 331.7L374.5 331.1L374.1 330.9ZM350.7 322.6L351.1 322.1L351.3 321.3L351.6 320.7L351.5 319.9L352.0 320.1L352.5 319.9L353.0 320.0L353.4 320.4L353.4 321.1L353.5 321.7L353.9 322.0L354.1 322.6L353.8 323.2L353.7 324.0L353.5 324.8L353.1 325.3L352.6 325.3L352.2 325.2L351.9 324.7L351.4 324.7L351.2 324.1L351.3 323.5L350.9 323.2Z" fill="#fdfdfb" stroke="#c9c9c9" stroke-width="0.7" stroke-linejoin="round"/><path d="M514.1 323.9L515.0 324.7L515.9 325.6L515.9 327.3L516.4 328.7L516.7 330.2L517.1 331.6L517.3 333.2L516.8 334.6L517.3 335.9L517.2 337.3L516.9 338.8L517.3 340.1L517.5 341.5L517.8 342.8L518.2 344.1L518.9 345.1L519.0 346.6L519.3 348.0L520.0 349.2L521.0 349.8L520.2 350.9L520.0 352.4L520.5 353.8L520.3 355.3L520.7 356.6L521.3 357.7L520.9 359.1L520.9 360.5L520.6 361.9L521.1 363.2L521.4 364.6L522.3 365.3L523.2 364.8L522.2 364.2L521.9 362.7L521.4 361.5L521.7 360.0L521.8 358.6L522.1 357.3L521.5 356.1L521.1 354.8L521.3 353.3L520.8 351.9L521.0 350.4L521.8 349.4L520.8 348.7L520.1 347.6L519.9 346.1L519.7 344.6L519.0 343.6L518.7 342.3L518.3 341.0L518.2 339.6L517.7 338.3L518.0 336.9L518.1 335.4L517.7 334.1L518.1 332.7L517.9 331.1L517.5 329.8L517.3 328.3L516.8 326.8L516.8 325.1L515.9 324.2L514.9 323.4ZM523.7 337.3L524.1 338.6L524.8 339.6L525.4 340.8L525.6 342.2L525.5 343.6L525.7 345.0L526.3 346.2L526.5 347.6L527.0 348.6L527.6 349.4L527.4 350.6L527.5 351.8L527.8 352.9L527.8 354.1L528.4 355.0L529.2 355.3L529.6 356.2L530.1 357.1L530.6 358.0L530.5 359.1L530.7 360.2L531.1 361.1L531.3 362.2L532.0 362.8L532.8 362.4L532.1 361.7L531.9 360.6L531.5 359.7L531.3 358.7L531.4 357.5L530.9 356.6L530.5 355.7L530.0 354.8L529.2 354.5L528.6 353.6L528.7 352.4L528.3 351.3L528.2 350.1L528.4 348.9L527.8 348.1L527.3 347.2L527.1 345.8L526.6 344.6L526.3 343.2L526.4 341.8L526.3 340.3L525.7 339.1L524.9 338.1L524.5 336.8ZM507.9 338.6L508.4 339.3L509.0 339.8L509.6 339.5L510.3 339.9L510.9 340.3L511.6 340.2L512.3 340.4L512.7 341.2L513.3 340.9L513.9 340.9L514.3 340.3L514.6 339.5L515.1 340.1L515.7 340.3L516.2 340.0L516.8 339.9L517.7 339.4L517.1 339.5L516.5 339.9L515.9 339.6L515.4 339.0L515.1 339.8L514.7 340.5L514.1 340.5L513.5 340.7L513.1 339.9L512.4 339.7L511.7 339.8L511.1 339.4L510.5 339.1L509.8 339.3L509.2 338.8L508.7 338.1ZM526.5 361.6L526.6 362.8L527.1 363.8L527.5 364.9L528.2 365.7L529.1 366.4L530.0 365.9L530.8 366.6L531.3 367.8L531.4 369.2L532.2 370.2L533.2 370.4L534.2 370.8L534.9 371.7L535.7 372.5L536.1 373.7L536.1 375.1L537.0 375.0L537.8 375.3L538.3 376.3L538.8 377.2L539.4 378.0L539.9 378.9L540.0 380.0L540.2 381.1L541.1 380.7L540.9 379.6L540.7 378.5L540.2 377.6L539.7 376.8L539.1 375.9L538.7 374.9L537.8 374.6L536.9 374.6L536.9 373.3L536.5 372.0L535.7 371.3L535.0 370.4L534.1 370.0L533.1 369.7L532.2 368.8L532.1 367.3L531.6 366.2L530.8 365.5L529.9 365.9L529.0 365.2L528.4 364.4L528.0 363.3L527.4 362.4L527.3 361.1ZM544.4 369.0L545.0 369.9L545.3 371.1L545.8 372.1L546.0 373.3L545.9 374.7L546.4 375.8L547.3 376.4L547.8 377.5L548.3 378.0L548.4 378.8L548.7 379.6L548.9 380.3L548.7 381.1L548.8 382.0L548.7 382.8L549.2 383.5L550.0 383.1L549.6 382.4L549.6 381.5L549.6 380.7L549.7 379.9L549.5 379.1L549.3 378.4L549.2 377.5L548.6 377.1L548.1 376.0L547.3 375.3L546.7 374.2L546.8 372.9L546.6 371.7L546.1 370.7L545.9 369.4L545.2 368.5ZM533.3 356.5L533.8 357.6L534.5 358.3L534.7 359.4L534.7 360.6L535.5 361.1L535.9 362.1L536.7 362.3L537.5 362.8L538.2 363.5L538.5 364.6L538.3 365.7L538.3 366.9L539.0 367.2L539.6 367.9L540.4 368.2L540.9 369.0L541.7 368.5L541.2 367.8L540.5 367.4L539.9 366.7L539.1 366.4L539.1 365.3L539.3 364.2L539.0 363.0L538.3 362.4L537.6 361.9L536.8 361.6L536.3 360.7L535.5 360.2L535.6 359.0L535.3 357.8L534.6 357.1L534.2 356.1ZM552.6 392.9L553.4 393.3L554.1 393.4L554.9 393.7L555.7 393.8L556.0 394.8L556.7 395.4L557.4 395.9L558.1 396.4L558.7 397.1L559.4 397.6L560.0 398.4L560.0 399.5L560.3 400.6L559.9 401.6L560.6 402.3L560.9 403.3L561.3 404.2L561.6 405.2L562.4 405.5L563.1 406.1L563.7 407.0L563.9 408.0L563.4 409.0L563.6 410.1L564.4 409.7L564.2 408.6L564.7 407.6L564.5 406.6L564.0 405.7L563.3 405.1L562.4 404.8L562.2 403.8L561.7 402.9L561.4 401.9L560.8 401.2L561.2 400.2L560.8 399.1L560.8 398.0L560.2 397.2L559.5 396.7L558.9 396.0L558.2 395.5L557.5 395.0L556.9 394.4L556.5 393.4L555.7 393.2L555.0 393.0L554.2 392.8L553.4 392.5ZM565.0 412.4L565.7 412.4L566.3 413.1L566.8 413.6L567.4 414.1L567.9 414.8L568.4 415.3L569.2 415.2L569.8 415.7L570.5 416.2L571.2 416.5L571.6 417.3L571.8 418.2L572.3 419.1L573.0 419.4L573.4 420.3L573.3 421.3L574.1 420.9L574.2 419.9L573.9 419.0L573.1 418.7L572.7 417.8L572.5 416.9L572.0 416.1L571.3 415.8L570.6 415.3L570.0 414.8L569.3 414.9L568.7 414.4L568.2 413.7L567.6 413.2L567.1 412.7L566.6 412.0L565.8 412.0ZM570.5 426.8L571.4 426.8L572.3 426.9L573.0 427.7L574.0 427.7L574.7 428.5L575.6 428.6L576.5 428.6L577.4 428.9L578.4 429.0L579.4 429.2L580.2 430.0L580.7 431.1L581.5 431.4L582.4 431.9L583.4 431.7L584.3 432.2L585.1 431.8L584.2 431.3L583.2 431.6L582.4 431.1L581.5 430.7L581.0 429.6L580.2 428.8L579.2 428.6L578.2 428.5L577.3 428.2L576.4 428.2L575.5 428.1L574.8 427.3L573.8 427.3L573.1 426.5L572.2 426.4L571.3 426.4ZM586.3 430.0L586.7 430.8L587.4 431.3L587.2 432.2L587.5 433.1L587.4 434.0L587.1 434.8L587.5 435.6L587.7 436.5L588.3 436.5L588.9 436.3L589.5 436.5L590.2 436.5L590.8 436.4L591.5 436.5L591.8 437.3L592.5 437.6L593.3 437.2L592.6 436.9L592.3 436.1L591.7 436.1L591.0 436.1L590.4 436.1L589.8 435.9L589.2 436.1L588.5 436.1L588.3 435.3L588.0 434.5L588.2 433.6L588.3 432.7L588.1 431.8L588.2 430.9L587.6 430.4L587.1 429.6ZM428.8 303.2L429.5 303.6L430.0 304.6L430.6 305.5L431.2 306.2L431.6 307.3L432.4 307.8L432.9 308.9L432.9 310.2L433.3 309.6L433.8 309.1L434.4 309.0L434.8 308.3L435.4 307.9L435.9 308.2L436.6 308.1L437.0 308.8L437.9 308.3L437.4 307.6L436.8 307.7L436.2 307.4L435.6 307.8L435.2 308.4L434.6 308.6L434.1 309.1L433.7 309.7L433.7 308.4L433.2 307.3L432.5 306.8L432.0 305.7L431.4 304.9L430.9 304.1L430.3 303.1L429.6 302.7ZM391.6 338.6L391.1 339.7L391.0 341.1L391.4 342.3L391.5 343.7L391.7 345.0L392.2 346.1L393.1 346.5L393.7 347.6L393.0 348.4L392.2 348.5L391.4 348.5L390.7 349.0L389.8 349.3L389.3 350.4L389.3 351.6L388.9 352.8L389.7 352.3L390.1 351.2L390.1 349.9L390.6 348.8L391.5 348.6L392.2 348.1L393.0 348.0L393.8 347.9L394.5 347.2L394.0 346.1L393.1 345.6L392.5 344.5L392.3 343.2L392.3 341.8L391.8 340.6L391.9 339.3L392.4 338.1Z" fill="#fdfdfb" stroke="#a2a2a2" stroke-width="0.8" stroke-linejoin="round"/><path d="M873.2 478.6L881.5 478.1L884.2 481.6L879.4 482.1L874.6 480.6Z" fill="#f0f0f0" stroke="#c9c9c9" stroke-width="0.6"/><path d="M475.6 249.1L475.6 311.6L487.9 314.4L499.6 329.3L506.5 322.6L513.4 318.5L523.7 330.6L530.6 345.1L538.2 359.1L550.5 366.5L551.2 376.3L547.1 382.9M1383.7 516.8L1389.2 515.0L1389.9 517.8L1400.2 516.4L1403.0 519.6L1398.2 525.1L1398.2 532.4L1397.5 536.8L1394.0 537.3L1397.5 542.2L1395.4 548.4L1397.5 550.1L1394.0 556.2L1394.7 558.8M1433.3 503.3L1436.0 506.1L1440.8 507.5L1450.5 508.9L1455.6 510.3L1457.7 511.3L1467.7 511.9M1463.2 424.8L1467.7 428.4L1474.5 433.3L1474.2 437.0L1479.0 434.9L1479.3 438.6L1485.5 441.3L1489.7 442.3L1493.8 445.0M1469.0 421.8L1475.2 421.8L1480.0 420.7L1485.9 424.0L1484.9 427.9L1487.6 428.9L1489.7 433.3L1487.6 435.4L1489.7 438.6M1485.9 424.0L1488.3 420.2L1486.9 416.3L1492.4 415.2L1493.8 411.3M1486.6 475.7L1492.4 473.2L1493.8 477.6M1486.6 475.7L1487.6 471.7L1493.1 464.1L1493.8 462.6M1430.5 576.7L1433.3 581.7L1433.9 594.1L1437.4 600.7L1425.0 603.9L1420.9 610.4L1411.2 618.4L1400.9 621.5L1386.0 628.6L1386.0 636.7M1355.0 636.7L1386.0 636.7L1386.0 649.5L1363.1 649.5L1363.1 668.9L1356.2 672.2L1355.5 679.7M1386.0 639.5L1412.6 657.2L1435.3 672.2L1445.6 679.7M1400.9 657.2L1407.8 679.7" fill="none" stroke="#bdbdbd" stroke-width="0.8"/><path d="M776.7 447.1L791.0 447.1L791.0 443.1L793.3 443.7L794.4 449.7L800.3 451.8L804.4 450.9L809.9 454.4L816.8 456.7L821.3 456.4L829.9 457.5L823.0 460.5L816.1 466.6L812.0 470.2L810.7 471.2L810.7 477.0L807.2 480.6L807.5 484.5L807.2 489.9L810.6 492.3L813.4 494.2L816.8 497.6L817.8 500.9L818.0 501.9L782.1 501.9L782.1 484.5L779.3 481.6L781.3 478.2L781.0 474.7L779.7 468.7L779.3 462.6L777.2 457.5L777.6 452.3L776.7 447.1ZM794.6 564.8L825.4 564.8L823.9 569.1L828.5 569.1L828.5 570.8L826.1 576.3L824.4 577.6L822.3 581.7L820.2 585.9L818.5 590.0L818.4 594.1L798.6 594.0L798.6 589.6L795.6 588.9L796.0 574.2ZM924.2 536.7L925.5 535.6L926.7 536.0L925.9 538.2L926.9 541.3L927.6 544.0L928.9 544.8L929.3 547.9L924.8 547.8ZM959.2 505.8L960.3 503.8L962.7 500.9L965.4 499.5L969.5 497.6L972.3 496.1L972.3 492.8L976.4 494.2L980.5 492.3L984.8 489.4L981.6 486.0L981.6 481.6L979.3 478.1L979.2 466.9L975.7 464.1L971.6 465.8L970.6 464.6L969.3 463.0L963.7 473.7L962.3 476.2L961.3 480.1L958.5 483.6L956.9 484.5L957.3 503.1L959.2 505.8ZM843.4 518.1L845.7 519.2L848.5 518.1L862.2 518.1L862.2 518.7L862.1 542.2L861.5 545.0L859.5 545.7L857.7 545.7L855.7 549.5L854.0 551.9L850.5 552.7L847.1 552.7L843.3 552.3L839.9 553.6L840.5 550.1L842.6 547.5L843.6 545.3L843.4 540.0L843.4 518.1Z" fill="#456a9a" stroke="#f4f6f8" stroke-width="0.9" stroke-linejoin="round"/><path d="M640.5 447.1L601.0 447.1L602.8 449.7L601.8 453.3L603.5 454.9L603.9 461.6L603.2 465.1L600.1 466.6L601.1 461.6L602.1 458.5L601.1 455.9L596.6 456.2L587.5 453.5L588.0 458.5L589.8 464.1L591.8 468.7L592.2 475.0L596.6 475.7L599.4 476.5L600.8 480.1L604.2 482.1L609.7 480.6L615.9 480.3L622.8 478.4L626.9 477.6L641.2 477.6L640.4 473.5L640.5 447.1ZM591.1 515.9L620.0 515.9L620.0 543.1L657.0 577.6L657.4 579.2L658.4 585.1L656.3 590.9L657.7 593.9L656.4 596.4L639.8 598.0L639.0 595.4L636.5 590.9L633.1 588.0L631.0 588.0L630.4 585.6L625.5 584.7L622.8 582.4L616.8 582.2L615.6 578.4L615.6 576.3L614.0 574.4L611.1 571.6L607.0 566.5L606.6 564.0L607.7 562.3L605.9 561.0L603.5 558.8L602.7 555.4L602.8 553.6L599.7 551.9L598.7 548.4L594.6 544.0L593.9 538.6L592.5 534.2L589.8 530.2L591.5 526.9L591.8 520.5L591.1 515.9ZM620.0 515.9L661.0 515.9L661.0 560.5L661.0 567.4L659.3 568.7L656.2 568.2L656.6 573.3L657.4 576.3L657.0 577.6L620.0 543.1L620.0 515.9ZM647.2 447.1L647.2 457.7L649.5 463.1L653.7 466.6L657.2 471.2L658.6 475.7L658.9 478.6L657.5 482.0L661.7 480.6L663.0 484.0L665.1 487.9L667.5 489.9L669.2 493.3L673.0 491.8L678.5 491.8L679.5 490.1L681.6 492.6L681.6 515.9L640.5 515.9L640.5 498.7L641.2 495.2L639.3 492.8L641.7 487.5L644.1 482.6L642.7 479.1L641.2 477.6L640.4 473.5L640.5 447.1L647.2 447.1ZM647.2 447.1L729.8 447.1L729.8 487.5L681.6 487.5L681.6 492.6L679.5 490.1L678.5 491.8L673.0 491.8L669.2 493.3L667.5 489.9L665.1 487.9L663.0 484.0L661.7 480.6L657.5 482.0L658.9 478.6L658.6 475.7L657.2 471.2L653.7 466.6L649.5 463.1L647.2 457.7L647.2 447.1ZM661.0 515.9L681.6 515.9L681.6 525.1L695.4 525.1L695.4 560.5L661.0 560.5ZM695.4 560.5L737.0 560.5L737.0 564.8L736.7 564.8L736.7 602.3L712.1 602.3L712.7 604.1L701.2 604.1L701.2 607.7L695.4 607.7ZM737.0 560.5L794.6 560.5L794.6 564.8L796.0 574.2L795.6 588.9L790.0 586.9L786.5 587.1L782.4 587.7L779.0 586.3L776.9 588.1L771.7 586.9L770.7 584.8L767.3 584.7L764.9 584.2L763.1 583.2L760.4 582.7L757.6 581.2L757.6 564.8L737.0 564.8ZM743.5 534.2L789.9 534.2L792.0 535.5L792.7 539.5L794.8 542.0L794.6 560.5L743.5 560.5ZM729.8 506.6L768.0 506.6L772.1 508.5L776.9 508.0L780.3 510.3L782.1 511.4L783.1 515.9L784.5 519.6L785.8 523.3L786.2 527.8L786.7 528.9L787.6 531.5L789.9 534.2L743.5 534.2L743.5 525.1L729.8 525.1ZM729.8 478.2L781.3 478.2L779.3 481.6L782.1 484.5L782.1 501.9L781.0 504.7L782.1 511.4L780.3 510.3L776.9 508.0L772.1 508.5L768.0 506.6L729.8 506.6ZM729.8 447.1L776.7 447.1L777.6 452.3L777.2 457.5L779.3 462.6L779.7 468.7L781.0 474.7L781.3 478.2L729.8 478.2ZM782.1 501.9L818.0 501.9L818.5 505.7L818.9 508.9L822.0 511.2L823.7 513.1L825.4 515.5L825.1 517.8L824.0 520.1L819.9 521.0L819.2 523.3L819.9 525.6L818.9 527.8L816.8 529.2L816.7 530.7L814.5 528.7L786.7 528.9L786.2 527.8L785.8 523.3L784.5 519.6L783.1 515.9L782.1 511.4L781.0 504.7L782.1 501.9ZM786.7 528.9L814.5 528.7L816.7 530.7L816.1 534.2L816.8 536.4L819.6 539.5L821.6 543.1L823.3 543.5L825.4 544.8L825.1 546.6L824.0 550.1L827.1 552.7L829.9 558.0L832.4 560.7L831.9 564.0L830.4 564.8L829.5 567.0L828.5 569.1L823.9 569.1L825.4 564.8L794.6 564.8L794.6 560.5L794.8 542.0L792.7 539.5L792.0 535.5L789.9 534.2L787.6 531.5L786.7 528.9ZM798.6 594.0L818.4 594.1L818.9 598.2L820.2 599.5L816.8 605.5L815.4 610.4L828.3 610.4L827.8 613.6L829.7 616.9L827.8 618.0L830.6 618.8L829.2 621.5L830.6 623.9L832.6 626.3L830.6 626.3L827.1 624.3L825.7 625.1L822.3 625.5L818.2 624.3L814.1 622.3L811.3 621.9L805.8 620.3L799.9 620.7L801.0 618.0L800.6 616.0L801.0 613.6L802.1 608.9L800.2 605.5L798.6 602.3ZM818.4 594.1L818.5 590.0L820.2 585.9L822.3 581.7L824.4 577.6L838.8 577.6L839.5 578.4L837.0 603.1L837.4 615.6L833.3 615.3L829.7 616.9L827.8 613.6L828.3 610.4L815.4 610.4L816.8 605.5L820.2 599.5L818.9 598.2L818.4 594.1ZM838.8 577.6L856.7 577.7L859.6 595.2L861.2 599.9L860.1 602.3L860.5 605.9L860.8 610.4L842.9 610.5L844.3 613.2L843.5 616.1L841.9 616.4L840.9 615.2L840.2 612.8L839.5 616.0L837.4 615.6L837.0 603.1L839.5 578.4L838.8 577.6ZM856.7 577.7L873.8 577.6L872.2 580.1L873.9 581.3L877.3 585.9L881.8 590.2L884.9 594.1L887.3 599.9L889.2 602.1L888.4 603.5L887.0 606.4L885.6 609.6L885.3 612.7L881.1 612.4L881.1 615.5L880.1 614.0L861.8 612.8L860.8 610.4L860.5 605.9L860.1 602.3L861.2 599.9L859.6 595.2L856.7 577.7ZM873.8 577.6L878.7 575.9L888.0 577.1L888.1 576.3L888.8 576.7L889.9 579.1L897.5 579.2L905.2 587.1L902.1 589.6L900.7 592.5L895.6 596.6L892.1 599.5L889.2 602.1L887.3 599.9L884.9 594.1L881.8 590.2L877.3 585.9L873.9 581.3L872.2 580.1L873.8 577.6ZM877.4 548.2L875.6 545.5L872.5 546.6L869.8 546.2L866.3 544.8L864.3 542.2L862.1 542.2L861.5 545.0L859.5 545.7L857.7 545.7L855.7 549.5L854.0 551.9L850.5 552.7L847.1 552.7L843.3 552.3L839.9 553.6L839.5 556.2L837.1 557.1L836.8 559.9L832.4 560.7L831.9 564.0L830.4 564.8L839.7 564.8L839.7 563.3L869.9 564.0L873.9 561.8L876.7 560.1L879.4 558.0L881.7 555.9L879.4 554.5L877.3 550.6L877.4 548.2ZM881.7 555.9L883.7 558.8L886.6 558.4L889.4 557.5L893.2 556.2L895.6 551.9L897.6 546.9L900.1 548.2L903.0 545.2L905.2 543.1L906.6 539.5L910.2 541.8L910.9 540.2L912.4 542.2L915.6 544.8L913.8 548.4L915.9 549.2L918.6 551.0L921.0 552.7L920.7 555.8L920.3 560.5L922.8 561.4L923.6 564.4L883.7 564.1L869.9 564.0L873.9 561.8L876.7 560.1L879.4 558.0L881.7 555.9ZM923.8 552.3L923.1 556.2L922.8 559.2L923.8 558.8L925.5 555.4L927.6 551.9L923.8 552.3ZM898.8 536.7L924.2 536.7L924.8 547.8L929.3 547.9L928.9 549.2L927.6 551.9L923.8 552.3L923.4 550.1L920.7 547.9L921.4 545.7L921.0 543.1L922.4 540.4L922.4 538.2L920.0 540.9L919.7 543.5L919.3 547.5L920.3 550.1L921.0 552.7L918.6 551.0L915.9 549.2L913.8 548.4L915.6 544.8L912.4 542.2L910.9 540.2L910.0 537.7L907.8 536.8L906.2 537.6L903.7 537.3L901.4 539.1L898.8 541.3L898.8 536.7ZM931.7 521.8L937.2 525.2L936.4 527.8L934.8 529.7L936.5 530.1L935.8 536.0L933.8 540.0L930.3 543.7L928.3 540.4L925.9 538.2L926.7 536.0L928.9 534.6L931.4 532.4L929.3 529.7L928.3 527.8L928.9 525.1L930.3 523.7L931.7 521.8ZM896.9 513.4L902.8 508.0L902.1 507.1L901.8 504.1L902.8 503.3L911.7 504.2L917.3 503.8L921.4 501.4L920.0 496.1L922.8 493.7L927.6 488.9L931.7 487.5L941.1 487.4L941.0 492.3L940.6 497.1L941.7 500.9L941.6 508.9L940.0 515.5L940.1 523.3L938.4 524.2L938.9 525.1L937.2 526.9L936.4 527.8L937.2 525.2L931.7 521.8L929.3 518.2L927.2 515.9L896.9 515.9L896.9 513.4ZM936.3 528.7L941.3 528.6L946.8 526.7L951.2 524.5L948.2 523.7L946.1 525.6L942.0 525.8L938.2 526.5L936.3 528.7ZM940.0 515.5L951.7 515.7L951.3 522.2L948.2 522.6L944.1 522.8L938.9 525.1L938.4 524.2L940.1 523.3ZM951.7 515.7L954.5 515.7L954.5 516.8L956.3 520.5L955.4 520.5L954.4 519.2L953.7 521.7L951.3 522.2ZM941.6 508.9L947.1 509.1L955.4 509.1L957.2 508.0L958.4 507.8L959.9 509.9L957.2 513.1L959.6 515.9L960.6 518.0L963.3 517.3L962.7 515.2L964.4 516.4L964.4 518.9L962.0 519.3L959.8 518.2L959.6 520.1L956.3 520.5L954.5 516.8L954.5 515.7L951.7 515.7L940.0 515.5ZM953.7 487.4L941.1 487.4L941.0 492.3L940.6 497.1L941.7 500.9L941.6 508.9L947.1 509.1L947.2 504.7L948.2 500.0L949.9 496.1L949.9 493.7L953.0 492.3L953.7 487.4ZM953.7 487.4L954.4 485.0L956.9 484.5L957.3 503.1L959.2 505.8L958.4 507.8L957.2 508.0L955.4 509.1L947.1 509.1L947.2 504.7L948.2 500.0L949.9 496.1L949.9 493.7L953.0 492.3L953.7 487.4ZM812.0 470.2L816.1 469.7L819.6 468.7L821.3 468.2L821.3 471.2L823.5 472.0L825.7 474.2L832.6 476.2L837.4 477.6L839.5 479.6L841.2 484.0L842.9 486.5L840.2 491.8L841.9 490.9L845.0 485.5L846.7 485.0L843.6 492.3L842.3 499.0L840.9 506.1L841.6 511.3L822.0 511.2L818.9 508.9L818.5 505.7L818.0 501.9L817.8 500.9L816.8 497.6L813.4 494.2L810.6 492.3L807.2 489.9L807.5 484.5L807.2 480.6L810.7 477.0L810.7 471.2L812.0 470.2ZM848.5 518.1L850.5 515.0L852.2 508.5L850.5 500.9L850.9 496.1L852.2 490.4L856.7 487.5L858.4 484.5L860.8 481.6L862.6 479.8L866.3 481.3L871.8 485.5L872.5 488.9L872.5 494.2L868.4 498.1L868.4 500.4L872.5 497.6L874.9 496.4L877.3 500.9L878.6 506.6L878.0 510.3L875.3 512.7L873.6 515.5L871.5 518.4L862.2 518.7L862.2 518.1L848.5 518.1ZM823.5 472.0L829.9 469.2L834.0 466.6L840.2 463.1L841.6 463.1L838.1 468.2L837.1 469.9L844.3 472.7L849.8 473.2L854.6 470.9L860.8 470.0L861.2 472.9L865.3 472.7L867.0 475.7L870.5 477.1L862.9 479.1L856.7 477.6L851.9 478.6L849.1 480.6L846.4 481.6L842.9 486.5L841.2 484.0L839.5 479.6L837.4 477.6L832.6 476.2L825.7 474.2L823.5 472.0Z" fill="#6389b6" stroke="#f4f6f8" stroke-width="0.9" stroke-linejoin="round"/><path d="M681.6 487.5L729.8 487.5L729.8 525.1L681.6 525.1ZM891.7 528.4L890.8 530.6L890.1 535.1L889.2 537.3L885.6 540.0L883.2 542.2L882.9 544.0L880.1 546.6L877.4 548.2L877.3 550.6L879.4 554.5L881.7 555.9L883.7 558.8L886.6 558.4L889.4 557.5L893.2 556.2L895.6 551.9L897.6 546.9L900.1 548.2L903.0 545.2L905.2 543.1L906.6 539.5L910.2 541.8L910.9 540.2L910.0 537.7L907.8 536.8L906.2 537.6L903.7 537.3L901.4 539.1L898.8 541.3L898.8 536.7L891.7 536.7L891.7 528.4Z" fill="#88b0d9" stroke="#f4f6f8" stroke-width="0.9" stroke-linejoin="round"/><path d="M641.2 477.6L626.9 477.6L622.8 478.4L615.9 480.3L609.7 480.6L604.2 482.1L600.8 480.1L599.4 476.5L596.6 475.7L592.2 475.0L592.9 479.6L592.5 487.5L591.8 494.2L590.8 502.8L588.7 508.1L590.1 513.6L591.1 515.9L640.5 515.9L640.5 498.7L641.2 495.2L639.3 492.8L641.7 487.5L644.1 482.6L642.7 479.1L641.2 477.6ZM661.0 560.5L695.4 560.5L695.4 607.7L681.5 607.7L655.7 598.2L656.4 596.4L657.7 593.9L656.3 590.9L658.4 585.1L657.4 579.2L657.0 577.6L657.4 576.3L656.6 573.3L656.2 568.2L659.3 568.7L661.0 567.4L661.0 560.5ZM736.7 564.8L757.6 564.8L757.6 581.2L760.4 582.7L763.1 583.2L764.9 584.2L767.3 584.7L770.7 584.8L771.7 586.9L776.9 588.1L779.0 586.3L782.4 587.7L786.5 587.1L790.0 586.9L795.6 588.9L798.6 589.6L798.6 602.3L800.2 605.5L802.1 608.9L801.0 613.6L800.6 616.0L801.0 618.0L799.9 620.7L794.1 623.5L790.7 626.7L785.2 630.2L779.7 633.3L776.9 637.2L775.5 641.9L775.9 645.7L777.2 649.8L774.8 650.7L770.0 649.2L763.8 646.5L761.4 639.9L761.1 638.0L755.6 631.8L753.2 625.5L748.0 620.2L741.8 619.3L739.2 620.4L736.0 626.5L730.1 623.9L726.7 621.1L723.9 613.6L716.4 607.2L712.7 604.1L712.1 602.3L736.7 602.3L736.7 564.8ZM843.5 616.1L844.3 613.2L842.9 610.5L860.8 610.4L861.8 612.8L880.1 614.0L881.1 615.5L881.1 612.4L885.3 612.7L885.6 615.2L886.6 619.9L889.0 626.3L891.2 630.4L891.5 631.8L892.8 637.2L895.0 643.4L894.4 651.1L892.5 655.6L887.7 656.2L886.3 651.5L882.9 648.8L881.8 646.1L879.4 642.6L877.3 638.0L875.6 635.3L877.0 631.0L876.0 627.8L873.9 624.7L870.5 619.6L865.7 617.8L861.5 620.7L858.4 621.0L856.0 617.6L850.5 615.3L843.5 616.1ZM923.6 564.4L883.7 564.1L881.5 568.1L877.3 569.1L873.9 571.2L871.2 572.7L867.7 574.2L865.5 577.6L873.8 577.6L878.7 575.9L888.0 577.1L888.1 576.3L888.8 576.7L889.9 579.1L897.5 579.2L905.2 587.1L909.3 587.1L912.4 583.4L919.0 580.9L922.8 576.7L926.0 575.4L926.4 571.6L923.6 564.4ZM891.7 516.1L894.5 514.5L896.9 513.4L896.9 515.9L927.2 515.9L929.3 518.2L931.7 521.8L930.3 523.7L928.9 525.1L928.3 527.8L929.3 529.7L931.4 532.4L928.9 534.6L926.7 536.0L925.5 535.6L924.2 536.7L891.7 536.7L891.7 516.1ZM822.0 511.2L841.6 511.3L842.9 517.3L843.4 518.1L843.4 540.0L843.6 545.3L842.6 547.5L840.5 550.1L839.9 553.6L839.5 556.2L837.1 557.1L836.8 559.9L832.4 560.7L829.9 558.0L827.1 552.7L824.0 550.1L825.1 546.6L825.4 544.8L823.3 543.5L821.6 543.1L819.6 539.5L816.8 536.4L816.1 534.2L816.7 530.7L816.8 529.2L818.9 527.8L819.9 525.6L819.2 523.3L819.9 521.0L824.0 520.1L825.1 517.8L825.4 515.5L823.7 513.1L822.0 511.2Z" fill="#f09d59" stroke="#f4f6f8" stroke-width="0.9" stroke-linejoin="round"/><path d="M695.4 525.1L743.5 525.1L743.5 560.5L695.4 560.5ZM830.4 564.8L839.7 564.8L839.7 563.3L869.9 564.0L883.7 564.1L881.5 568.1L877.3 569.1L873.9 571.2L871.2 572.7L867.7 574.2L865.5 577.6L856.7 577.7L838.8 577.6L824.4 577.6L826.1 576.3L828.5 570.8L828.5 569.1L829.5 567.0L830.4 564.8ZM871.5 518.4L874.6 520.1L876.7 520.5L881.5 520.5L883.5 520.5L887.0 518.0L891.7 516.1L891.7 528.4L890.8 530.6L890.1 535.1L889.2 537.3L885.6 540.0L883.2 542.2L882.9 544.0L880.1 546.6L877.4 548.2L875.6 545.5L872.5 546.6L869.8 546.2L866.3 544.8L864.3 542.2L862.1 542.2L862.2 518.7L871.5 518.4Z" fill="#cf7541" stroke="#f4f6f8" stroke-width="0.9" stroke-linejoin="round"/></g></svg>
<div style="position:absolute;left:263px;top:650px;width:220px;height:17px;box-sizing:border-box;background:rgba(253,253,251,0.7);"></div>
<div style="position:absolute;top:650.3px;height:17px;line-height:17px;font-size:13px;white-space:nowrap;color:#444;letter-spacing:0.328px;left:266.5px;">© 2022 Mapbox  © OpenStreetMap</div>
<svg style="position:absolute;left:0px;top:0px;overflow:visible;pointer-events:none;" width="1728" height="1080" viewBox="0 0 1728 1080"><path d="M262 723.5H972" stroke="#bdbdbd" stroke-width="1.6"/><path d="M972.3 723.5V999" stroke="#c4c4c4" stroke-width="1.1"/><path d="M430.3 777.5H971" stroke="#ececec" stroke-width="1"/><path d="M430.3 751.5H971" stroke="#ececec" stroke-width="1"/><path d="M430.3 725.5H971" stroke="#ececec" stroke-width="1"/><polygon points="454.2,803.5 454.2,794.6 464.7,798.8 475.2,787.9 485.8,791.5 496.3,786.8 506.8,770.1 517.4,776.3 527.9,782.1 538.4,726.6 548.9,780.5 559.5,743.8 570.0,756.3 580.5,785.7 591.0,791.5 601.5,780.5 612.1,774.6 622.6,776.9 633.1,786.3 643.6,777.9 654.2,776.9 664.7,753.7 675.2,780.5 685.8,761.3 696.3,752.7 706.8,794.6 717.3,782.9 727.9,771.2 738.4,783.7 748.9,762.1 759.4,772.7 770.0,774.6 780.5,784.4 791.0,748.5 801.5,787.6 812.0,750.1 822.6,739.9 833.1,773.5 843.6,795.4 854.1,758.3 864.7,790.7 875.2,775.8 885.7,776.9 896.2,779.0 906.8,762.6 917.3,746.9 927.8,771.6 938.4,739.4 948.9,738.8 948.9,803.5" fill="#4a6d9c" stroke="#4a6d9c" stroke-width="0.6" stroke-linejoin="round"/><polygon points="454.2,803.5 454.2,803.2 464.7,802.9 475.2,799.8 485.8,802.1 496.3,800.7 506.8,799.8 517.4,799.8 527.9,800.5 538.4,782.9 548.9,800.5 559.5,785.2 570.0,796.9 580.5,790.7 591.0,802.9 601.5,802.6 612.1,796.2 622.6,800.8 633.1,802.1 643.6,797.2 654.2,799.0 664.7,794.9 675.2,795.4 685.8,796.2 696.3,790.4 706.8,799.0 717.3,802.9 727.9,793.8 738.4,797.7 748.9,799.3 759.4,800.4 770.0,800.8 780.5,801.3 791.0,792.2 801.5,800.8 812.0,793.0 822.6,800.1 833.1,798.5 843.6,801.3 854.1,796.9 864.7,802.4 875.2,797.4 885.7,799.3 896.2,795.1 906.8,794.1 917.3,792.2 927.8,796.9 938.4,788.3 948.9,791.9 948.9,803.5" fill="#ea8b33" stroke="#ea8b33" stroke-width="0.6" stroke-linejoin="round"/><path d="M262 803.5H972" stroke="#b5b5b5" stroke-width="1.2"/><path d="M430.3 857.2H971" stroke="#ececec" stroke-width="1"/><path d="M430.3 831.2H971" stroke="#ececec" stroke-width="1"/><path d="M430.3 805.2H971" stroke="#ececec" stroke-width="1"/><polygon points="454.2,883.2 454.2,881.3 464.7,882.1 475.2,868.8 485.8,865.4 496.3,871.6 506.8,878.2 517.4,870.4 527.9,873.5 538.4,863.4 548.9,867.0 559.5,856.3 570.0,857.1 580.5,879.0 591.0,881.0 601.5,862.6 612.1,878.2 622.6,876.3 633.1,871.5 643.6,874.3 654.2,868.8 664.7,862.3 675.2,872.0 685.8,848.5 696.3,862.6 706.8,871.2 717.3,879.8 727.9,865.4 738.4,862.6 748.9,859.5 759.4,872.7 770.0,867.0 780.5,867.0 791.0,860.7 801.5,842.3 812.0,849.3 822.6,838.0 833.1,868.0 843.6,872.7 854.1,862.3 864.7,864.1 875.2,865.4 885.7,858.2 896.2,861.8 906.8,850.5 917.3,852.4 927.8,851.2 938.4,826.3 948.9,857.1 948.9,883.2" fill="#4a6d9c" stroke="#4a6d9c" stroke-width="0.6" stroke-linejoin="round"/><polygon points="454.2,883.2 454.2,882.9 464.7,882.9 475.2,877.4 485.8,881.8 496.3,881.0 506.8,881.3 517.4,880.1 527.9,882.6 538.4,872.3 548.9,881.3 559.5,879.8 570.0,880.1 580.5,881.6 591.0,882.9 601.5,881.6 612.1,882.9 622.6,882.6 633.1,880.2 643.6,882.1 654.2,881.6 664.7,881.0 675.2,881.0 685.8,880.5 696.3,881.0 706.8,882.6 717.3,882.9 727.9,879.8 738.4,881.3 748.9,882.1 759.4,882.1 770.0,881.8 780.5,881.8 791.0,879.0 801.5,881.3 812.0,879.8 822.6,873.5 833.1,882.9 843.6,882.9 854.1,880.1 864.7,880.5 875.2,881.3 885.7,882.6 896.2,882.9 906.8,877.9 917.3,877.0 927.8,876.3 938.4,864.1 948.9,875.9 948.9,883.2" fill="#ea8b33" stroke="#ea8b33" stroke-width="0.6" stroke-linejoin="round"/><path d="M262 883.2H972" stroke="#b5b5b5" stroke-width="1.2"/><path d="M430.3 938.0H971" stroke="#ececec" stroke-width="1"/><path d="M430.3 912.0H971" stroke="#ececec" stroke-width="1"/><path d="M430.3 886.0H971" stroke="#ececec" stroke-width="1"/><polygon points="454.2,964.0 454.2,956.7 464.7,962.9 475.2,922.0 485.8,957.9 496.3,961.7 506.8,957.9 517.4,959.0 527.9,957.9 538.4,955.6 548.9,960.6 559.5,949.3 570.0,949.0 580.5,962.9 591.0,963.7 601.5,957.4 612.1,954.3 622.6,959.0 633.1,960.6 643.6,961.8 654.2,957.4 664.7,952.0 675.2,956.7 685.8,943.4 696.3,939.5 706.8,960.6 717.3,958.2 727.9,947.3 738.4,952.8 748.9,955.9 759.4,952.8 770.0,959.0 780.5,958.2 791.0,947.3 801.5,941.3 812.0,949.3 822.6,948.4 833.1,953.2 843.6,955.9 854.1,954.3 864.7,947.3 875.2,952.0 885.7,947.3 896.2,951.7 906.8,956.3 917.3,938.7 927.8,925.4 938.4,933.2 948.9,947.3 948.9,964.0" fill="#4a6d9c" stroke="#4a6d9c" stroke-width="0.6" stroke-linejoin="round"/><polygon points="454.2,964.0 454.2,964.0 464.7,964.0 475.2,934.8 485.8,963.7 496.3,962.9 506.8,963.7 517.4,963.8 527.9,963.8 538.4,963.8 548.9,963.8 559.5,963.2 570.0,962.6 580.5,963.8 591.0,964.0 601.5,963.4 612.1,962.1 622.6,963.7 633.1,963.8 643.6,963.8 654.2,962.6 664.7,963.4 675.2,962.6 685.8,961.7 696.3,963.7 706.8,964.0 717.3,964.0 727.9,963.7 738.4,961.3 748.9,963.7 759.4,963.4 770.0,962.9 780.5,961.3 791.0,960.6 801.5,963.4 812.0,963.7 822.6,961.0 833.1,964.0 843.6,960.6 854.1,962.4 864.7,957.0 875.2,963.2 885.7,960.9 896.2,963.4 906.8,964.0 917.3,959.8 927.8,958.2 938.4,957.8 948.9,964.0 948.9,964.0" fill="#ea8b33" stroke="#ea8b33" stroke-width="0.6" stroke-linejoin="round"/><path d="M262 964.0H972" stroke="#b5b5b5" stroke-width="1.2"/><path d="M430.3 723.5V1000" stroke="#b5b5b5" stroke-width="1.2"/><path d="M454.2 964V968.5" stroke="#c9c9c9" stroke-width="1"/><path d="M580.5 964V968.5" stroke="#c9c9c9" stroke-width="1"/><path d="M706.8 964V968.5" stroke="#c9c9c9" stroke-width="1"/><path d="M833.1 964V968.5" stroke="#c9c9c9" stroke-width="1"/><path d="M959.4 964V968.5" stroke="#c9c9c9" stroke-width="1"/></svg>
<div style="position:absolute;top:688.8px;height:24px;line-height:24px;font-size:18.5px;white-space:nowrap;color:#222;left:266.8px;letter-spacing:0.045px;">Monthly Sales by Segment - States: <b>All</b></div>
<div style="position:absolute;top:754.0px;height:19px;line-height:19px;font-size:14.5px;white-space:nowrap;color:#555;letter-spacing:0.039px;left:269.2px;">Consumer</div>
<div style="position:absolute;top:742.3px;height:20px;line-height:20px;font-size:15px;white-space:nowrap;color:#555;letter-spacing:0.040px;right:1306.3px;text-align:right;">$40,000</div>
<div style="position:absolute;top:768.3px;height:20px;line-height:20px;font-size:15px;white-space:nowrap;color:#555;letter-spacing:0.040px;right:1306.3px;text-align:right;">$20,000</div>
<div style="position:absolute;top:833.9px;height:19px;line-height:19px;font-size:14.5px;white-space:nowrap;color:#555;letter-spacing:0.436px;left:269.2px;">Corporate</div>
<div style="position:absolute;top:822.0px;height:20px;line-height:20px;font-size:15px;white-space:nowrap;color:#555;letter-spacing:0.040px;right:1306.3px;text-align:right;">$40,000</div>
<div style="position:absolute;top:848.0px;height:20px;line-height:20px;font-size:15px;white-space:nowrap;color:#555;letter-spacing:0.040px;right:1306.3px;text-align:right;">$20,000</div>
<div style="position:absolute;top:914.1px;height:19px;line-height:19px;font-size:14.5px;white-space:nowrap;color:#555;letter-spacing:0.226px;left:269.2px;">Home Office</div>
<div style="position:absolute;top:902.8px;height:20px;line-height:20px;font-size:15px;white-space:nowrap;color:#555;letter-spacing:0.040px;right:1306.3px;text-align:right;">$40,000</div>
<div style="position:absolute;top:928.8px;height:20px;line-height:20px;font-size:15px;white-space:nowrap;color:#555;letter-spacing:0.040px;right:1306.3px;text-align:right;">$20,000</div>
<div style="position:absolute;top:972.5px;height:20px;line-height:20px;font-size:15px;white-space:nowrap;color:#555;letter-spacing:0.033px;left:454.2px;width:400px;margin-left:-200px;text-align:center;">2019</div>
<div style="position:absolute;top:972.5px;height:20px;line-height:20px;font-size:15px;white-space:nowrap;color:#555;letter-spacing:0.033px;left:580.5px;width:400px;margin-left:-200px;text-align:center;">2020</div>
<div style="position:absolute;top:972.5px;height:20px;line-height:20px;font-size:15px;white-space:nowrap;color:#555;letter-spacing:0.033px;left:706.8px;width:400px;margin-left:-200px;text-align:center;">2021</div>
<div style="position:absolute;top:972.5px;height:20px;line-height:20px;font-size:15px;white-space:nowrap;color:#555;letter-spacing:0.033px;left:833.1px;width:400px;margin-left:-200px;text-align:center;">2022</div>
<div style="position:absolute;top:972.5px;height:20px;line-height:20px;font-size:15px;white-space:nowrap;color:#555;letter-spacing:0.033px;right:757.0px;text-align:right;">2023</div>
<svg style="position:absolute;left:0px;top:0px;overflow:visible;pointer-events:none;" width="1728" height="1080" viewBox="0 0 1728 1080"><path d="M978 723.5H1695" stroke="#bdbdbd" stroke-width="1.6"/><path d="M1695.3 723.5V999" stroke="#c4c4c4" stroke-width="1.1"/><path d="M1151 773.2H1694" stroke="#ececec" stroke-width="1"/><path d="M1151 742.9H1694" stroke="#ececec" stroke-width="1"/><polygon points="1175.3,803.5 1175.3,793.8 1185.8,800.8 1196.4,781.0 1206.9,791.9 1217.4,793.0 1228.0,783.2 1238.5,786.8 1249.0,792.2 1259.6,766.9 1270.1,783.7 1280.6,770.1 1291.2,756.6 1301.7,786.0 1312.2,798.2 1322.7,784.4 1333.3,787.6 1343.8,789.1 1354.3,791.8 1364.9,782.9 1375.4,788.3 1385.9,763.0 1396.5,783.7 1407.0,756.0 1417.5,768.8 1428.1,791.5 1438.6,797.2 1449.1,783.7 1459.7,782.9 1470.2,780.2 1480.7,782.9 1491.3,782.9 1501.8,784.0 1512.3,761.5 1522.9,783.7 1533.4,754.0 1543.9,746.9 1554.5,793.5 1565.0,792.2 1575.5,786.8 1586.0,788.8 1596.6,776.9 1607.1,774.6 1617.6,784.8 1628.2,779.4 1638.7,758.7 1649.2,768.8 1659.8,746.6 1670.3,755.1 1670.3,803.5" fill="#4a6d9c" stroke="#4a6d9c" stroke-width="0.6" stroke-linejoin="round"/><polygon points="1175.3,803.5 1175.3,802.4 1185.8,802.9 1196.4,793.3 1206.9,801.3 1217.4,799.3 1228.0,798.5 1238.5,798.5 1249.0,801.3 1259.6,797.7 1270.1,798.5 1280.6,792.7 1291.2,796.5 1301.7,788.3 1312.2,803.2 1322.7,799.8 1333.3,797.2 1343.8,800.8 1354.3,799.8 1364.9,795.4 1375.4,797.7 1385.9,796.2 1396.5,795.1 1407.0,796.2 1417.5,796.9 1428.1,800.8 1438.6,802.4 1449.1,797.2 1459.7,798.5 1470.2,801.3 1480.7,799.0 1491.3,801.6 1501.8,800.1 1512.3,788.3 1522.9,798.2 1533.4,796.2 1543.9,791.5 1554.5,799.3 1565.0,799.3 1575.5,799.0 1586.0,797.2 1596.6,792.7 1607.1,795.8 1617.6,798.0 1628.2,793.5 1638.7,794.1 1649.2,787.2 1659.8,782.6 1670.3,791.5 1670.3,803.5" fill="#ea8b33" stroke="#ea8b33" stroke-width="0.6" stroke-linejoin="round"/><path d="M978 803.5H1695" stroke="#b5b5b5" stroke-width="1.2"/><path d="M1151 852.9H1694" stroke="#ececec" stroke-width="1"/><path d="M1151 822.6H1694" stroke="#ececec" stroke-width="1"/><polygon points="1175.3,883.2 1175.3,876.2 1185.8,882.1 1196.4,870.1 1206.9,866.5 1217.4,872.3 1228.0,863.0 1238.5,860.2 1249.0,865.4 1259.6,841.2 1270.1,872.7 1280.6,842.3 1291.2,856.3 1301.7,880.5 1312.2,875.1 1322.7,859.5 1333.3,864.1 1343.8,869.3 1354.3,867.0 1364.9,875.9 1375.4,864.9 1385.9,853.7 1396.5,868.8 1407.0,850.9 1417.5,858.7 1428.1,875.1 1438.6,872.7 1449.1,857.1 1459.7,866.5 1470.2,863.4 1480.7,866.5 1491.3,863.4 1501.8,868.8 1512.3,847.7 1522.9,858.2 1533.4,851.6 1543.9,825.1 1554.5,848.5 1565.0,871.6 1575.5,860.7 1586.0,860.2 1596.6,861.8 1607.1,857.4 1617.6,867.3 1628.2,837.6 1638.7,834.5 1649.2,847.4 1659.8,835.2 1670.3,837.1 1670.3,883.2" fill="#4a6d9c" stroke="#4a6d9c" stroke-width="0.6" stroke-linejoin="round"/><polygon points="1175.3,883.2 1175.3,882.9 1185.8,882.9 1196.4,882.1 1206.9,881.6 1217.4,882.4 1228.0,882.4 1238.5,878.2 1249.0,882.6 1259.6,879.0 1270.1,882.9 1280.6,876.3 1291.2,880.1 1301.7,882.9 1312.2,882.9 1322.7,882.1 1333.3,881.0 1343.8,882.6 1354.3,880.9 1364.9,882.6 1375.4,880.1 1385.9,877.1 1396.5,879.3 1407.0,880.1 1417.5,879.8 1428.1,882.6 1438.6,882.9 1449.1,877.1 1459.7,877.1 1470.2,880.5 1480.7,882.6 1491.3,880.5 1501.8,881.6 1512.3,878.2 1522.9,882.6 1533.4,882.1 1543.9,880.5 1554.5,881.0 1565.0,882.6 1575.5,880.1 1586.0,880.1 1596.6,881.3 1607.1,881.6 1617.6,881.6 1628.2,877.9 1638.7,872.7 1649.2,878.7 1659.8,875.1 1670.3,875.9 1670.3,883.2" fill="#ea8b33" stroke="#ea8b33" stroke-width="0.6" stroke-linejoin="round"/><path d="M978 883.2H1695" stroke="#b5b5b5" stroke-width="1.2"/><path d="M1151 933.7H1694" stroke="#ececec" stroke-width="1"/><path d="M1151 903.4H1694" stroke="#ececec" stroke-width="1"/><polygon points="1175.3,964.0 1175.3,959.0 1185.8,961.7 1196.4,913.7 1206.9,949.3 1217.4,949.2 1228.0,950.7 1238.5,951.7 1249.0,949.9 1259.6,917.1 1270.1,943.4 1280.6,917.3 1291.2,930.9 1301.7,956.7 1312.2,958.7 1322.7,948.1 1333.3,947.0 1343.8,946.2 1354.3,953.5 1364.9,948.1 1375.4,940.2 1385.9,934.8 1396.5,947.0 1407.0,927.8 1417.5,909.0 1428.1,954.3 1438.6,945.4 1449.1,930.4 1459.7,940.2 1470.2,919.2 1480.7,938.7 1491.3,943.4 1501.8,948.5 1512.3,929.3 1522.9,915.2 1533.4,922.0 1543.9,929.8 1554.5,938.2 1565.0,953.1 1575.5,912.1 1586.0,944.2 1596.6,942.9 1607.1,937.4 1617.6,927.8 1628.2,935.9 1638.7,922.0 1649.2,912.9 1659.8,886.7 1670.3,929.3 1670.3,964.0" fill="#4a6d9c" stroke="#4a6d9c" stroke-width="0.6" stroke-linejoin="round"/><polygon points="1175.3,964.0 1175.3,964.0 1185.8,964.0 1196.4,933.2 1206.9,963.7 1217.4,963.7 1228.0,963.4 1238.5,962.6 1249.0,963.7 1259.6,936.3 1270.1,963.7 1280.6,955.9 1291.2,962.6 1301.7,961.0 1312.2,963.4 1322.7,962.9 1333.3,961.0 1343.8,963.4 1354.3,963.7 1364.9,963.7 1375.4,963.4 1385.9,962.1 1396.5,963.7 1407.0,961.7 1417.5,955.9 1428.1,961.3 1438.6,963.7 1449.1,958.2 1459.7,962.1 1470.2,962.1 1480.7,962.9 1491.3,962.1 1501.8,961.3 1512.3,959.8 1522.9,962.1 1533.4,955.4 1543.9,959.8 1554.5,962.4 1565.0,962.6 1575.5,961.0 1586.0,959.0 1596.6,963.4 1607.1,961.7 1617.6,959.0 1628.2,961.7 1638.7,956.3 1649.2,960.6 1659.8,944.5 1670.3,960.6 1670.3,964.0" fill="#ea8b33" stroke="#ea8b33" stroke-width="0.6" stroke-linejoin="round"/><path d="M978 964.0H1695" stroke="#b5b5b5" stroke-width="1.2"/><path d="M1151 723.5V1000" stroke="#b5b5b5" stroke-width="1.2"/><path d="M1175.3 964V968.5" stroke="#c9c9c9" stroke-width="1"/><path d="M1301.7 964V968.5" stroke="#c9c9c9" stroke-width="1"/><path d="M1428.1 964V968.5" stroke="#c9c9c9" stroke-width="1"/><path d="M1554.5 964V968.5" stroke="#c9c9c9" stroke-width="1"/><path d="M1680.8 964V968.5" stroke="#c9c9c9" stroke-width="1"/></svg>
<div style="position:absolute;top:688.8px;height:24px;line-height:24px;font-size:18.5px;white-space:nowrap;color:#222;left:983.2px;letter-spacing:0.102px;">Monthly Sales by Product Category - States: <b>All</b></div>
<div style="position:absolute;top:754.0px;height:19px;line-height:19px;font-size:14.5px;white-space:nowrap;color:#555;letter-spacing:0.664px;left:985.4px;">Furniture</div>
<div style="position:absolute;top:732.1px;height:20px;line-height:20px;font-size:15px;white-space:nowrap;color:#555;letter-spacing:0.040px;right:584.7px;text-align:right;">$40,000</div>
<div style="position:absolute;top:762.4px;height:20px;line-height:20px;font-size:15px;white-space:nowrap;color:#555;letter-spacing:0.040px;right:584.7px;text-align:right;">$20,000</div>
<div style="position:absolute;top:823.9px;height:19px;line-height:19px;font-size:14.5px;white-space:nowrap;color:#555;letter-spacing:0.465px;left:985.4px;">Office</div>
<div style="position:absolute;top:843.9px;height:19px;line-height:19px;font-size:14.5px;white-space:nowrap;color:#555;letter-spacing:0.235px;left:985.4px;">Supplies</div>
<div style="position:absolute;top:811.8px;height:20px;line-height:20px;font-size:15px;white-space:nowrap;color:#555;letter-spacing:0.040px;right:584.7px;text-align:right;">$40,000</div>
<div style="position:absolute;top:842.1px;height:20px;line-height:20px;font-size:15px;white-space:nowrap;color:#555;letter-spacing:0.040px;right:584.7px;text-align:right;">$20,000</div>
<div style="position:absolute;top:914.1px;height:19px;line-height:19px;font-size:14.5px;white-space:nowrap;color:#555;letter-spacing:0.254px;left:985.4px;">Technology</div>
<div style="position:absolute;top:892.6px;height:20px;line-height:20px;font-size:15px;white-space:nowrap;color:#555;letter-spacing:0.040px;right:584.7px;text-align:right;">$40,000</div>
<div style="position:absolute;top:922.9px;height:20px;line-height:20px;font-size:15px;white-space:nowrap;color:#555;letter-spacing:0.040px;right:584.7px;text-align:right;">$20,000</div>
<div style="position:absolute;top:972.5px;height:20px;line-height:20px;font-size:15px;white-space:nowrap;color:#555;letter-spacing:0.033px;left:1175.3px;width:400px;margin-left:-200px;text-align:center;">2019</div>
<div style="position:absolute;top:972.5px;height:20px;line-height:20px;font-size:15px;white-space:nowrap;color:#555;letter-spacing:0.033px;left:1301.7px;width:400px;margin-left:-200px;text-align:center;">2020</div>
<div style="position:absolute;top:972.5px;height:20px;line-height:20px;font-size:15px;white-space:nowrap;color:#555;letter-spacing:0.033px;left:1428.1px;width:400px;margin-left:-200px;text-align:center;">2021</div>
<div style="position:absolute;top:972.5px;height:20px;line-height:20px;font-size:15px;white-space:nowrap;color:#555;letter-spacing:0.033px;left:1554.5px;width:400px;margin-left:-200px;text-align:center;">2022</div>
<div style="position:absolute;top:972.5px;height:20px;line-height:20px;font-size:15px;white-space:nowrap;color:#555;letter-spacing:0.033px;right:34.0px;text-align:right;">2023</div>
<div style="position:absolute;left:256px;top:269px;width:1233px;height:406px;box-sizing:border-box;border:2px solid #222;"></div>
<div style="position:absolute;left:261.5px;top:274.5px;width:1222px;height:395px;box-sizing:border-box;border:1px solid #d5d5d5;"></div>
<div style="position:absolute;left:1489px;top:269px;width:24px;height:125.5px;box-sizing:border-box;background:rgba(118,118,118,0.93);border-radius:0 3px 3px 0;"></div>
<svg style="position:absolute;left:0px;top:0px;overflow:visible;pointer-events:none;" width="1728" height="1080" viewBox="0 0 1728 1080"><path d="M1495.500 276.500L1506.500 287.500M1506.500 276.500L1495.500 287.500" stroke="#fff" fill="none" stroke-width="1.7"/><path d="M1497 298.200H1504V299.800H1503V304.300C1504.800 305 1506 306.700 1506 309.300H1495C1495 306.700 1496.200 305 1498 304.300V299.800H1497Z" fill="#fff"/><path d="M1500.500 309V315.500" stroke="#fff" stroke-width="1.4"/><path d="M1499 326.500H1494.500V339H1507V334.500" stroke="#fff" fill="none" stroke-width="1.5"/><path d="M1499.500 334L1508 325.500M1502.500 325H1508.500V331" stroke="#fff" fill="none" stroke-width="1.5"/><path d="M1493.500 350.500H1508.500L1503 357V364.500H1499V357Z" fill="#fff"/><path d="M1496.800 379H1505.200L1501 385Z" fill="#fff"/></svg>
<div style="position:absolute;left:1366px;top:50.5px;width:146.5px;height:63.5px;box-sizing:border-box;background:#fdfdfd;border:1px solid #cfcfcf;box-shadow:0 2px 5px rgba(0,0,0,0.3);"></div>
<div style="position:absolute;left:1375px;top:59px;width:129px;height:23.5px;box-sizing:border-box;background:#efefef;"></div>
<div style="position:absolute;top:60.5px;height:20px;line-height:20px;font-size:15px;white-space:nowrap;color:#222;letter-spacing:-0.272px;left:1382.0px;">Publish As...</div>
<div style="position:absolute;top:84.8px;height:20px;line-height:20px;font-size:15px;white-space:nowrap;color:#222;letter-spacing:-0.221px;left:1382.0px;">Run Optimizer...</div>
<svg style="position:absolute;left:1494px;top:34px;overflow:visible;" width="16" height="22" viewBox="0 0 16 22"><path d="M1.500 1V17.500L5.500 13.800L8.300 20.500L11.300 19.200L8.500 12.700H14Z" fill="#111" stroke="#fff" stroke-width="1.4" stroke-linejoin="round"/></svg>
</div>
</body></html>
